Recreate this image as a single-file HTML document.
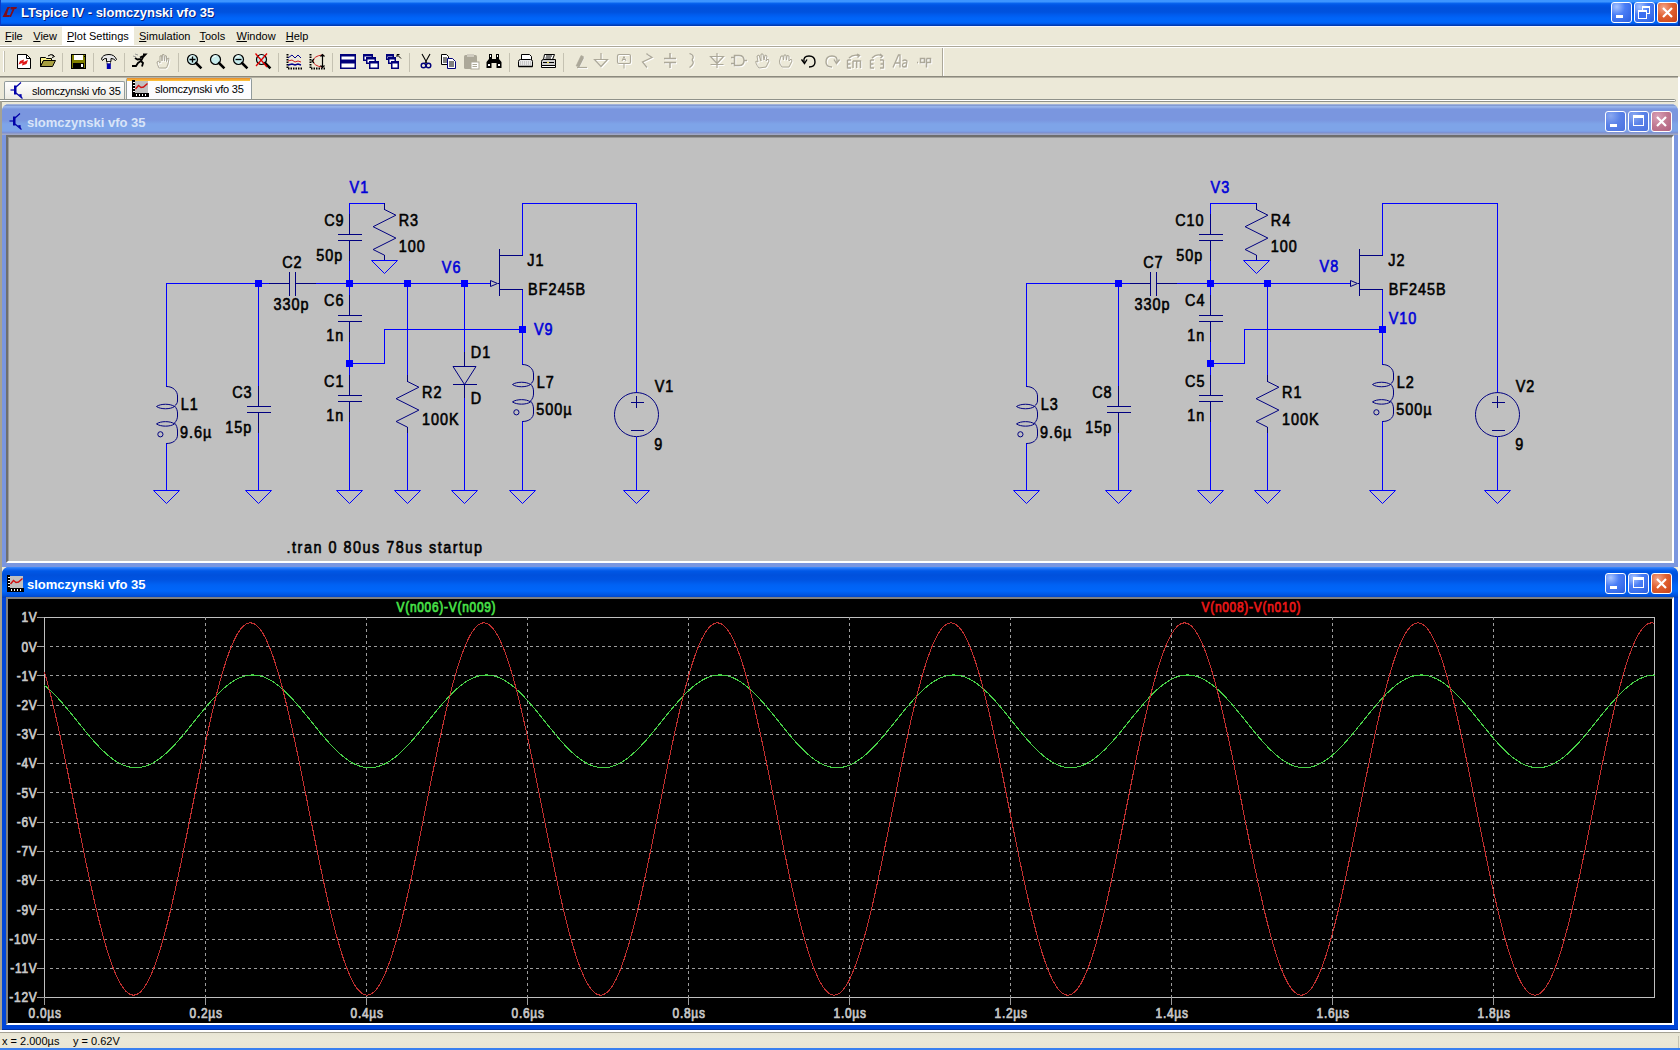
<!DOCTYPE html><html><head><meta charset="utf-8"><style>
*{margin:0;padding:0;box-sizing:border-box}
html,body{width:1680px;height:1050px;overflow:hidden;background:#ECE9D8;font-family:"Liberation Sans", sans-serif}
.a{position:absolute}
svg{position:absolute;left:0;top:0}
.t{font-family:"Liberation Sans", sans-serif}
</style></head><body>
<div class="a" style="left:0;top:0;width:1680px;height:26px;background:linear-gradient(to bottom,#3D95FF 0px,#3D95FF 2px,#0A66F0 3px,#0055E5 5px,#0050DC 8px,#0052DE 12px,#005CEE 15px,#0064F8 18px,#0066FA 22px,#0058E8 24px,#003CB4 25px,#003AB0 26px)"></div>
<div class="a" style="left:1678px;top:0;width:2px;height:26px;background:#0030A0"></div>
<div class="a t" style="left:21px;top:5px;font-size:13px;font-weight:bold;color:#fff;line-height:16px;white-space:nowrap;text-shadow:1px 1px 0 #0A1E7A">LTspice IV - slomczynski vfo 35</div>
<svg width="20" height="20" style="left:0;top:0" viewBox="0 0 20 20"><path d="M2.5 17 L7.5 7 L10.5 7 Q8.5 8.5 8 10.5 L6.8 15 L10 15 L9.2 17 Z" fill="#7E0E1C"/><path d="M10.5 7 L17 7 L16.2 9 L14.6 9 L11 17 L9.2 17 L12.6 9.2 Q11.5 9 10.8 9.8 Z" fill="#7E0E1C"/></svg>
<div class="a" style="left:0;top:0;width:1px;height:26px;background:#0A3CC8"></div>
<div class="a" style="left:1611px;top:2px;width:21px;height:21px;border:1px solid #fff;border-radius:3px;background:radial-gradient(circle at 25% 20%,#A8C4FF 0%,#4A7EF6 40%,#2A5EE0 100%)"></div><div class="a" style="left:1616px;top:15px;width:7px;height:3px;background:#fff"></div>
<div class="a" style="left:1634px;top:2px;width:21px;height:21px;border:1px solid #fff;border-radius:3px;background:radial-gradient(circle at 25% 20%,#A8C4FF 0%,#4A7EF6 40%,#2A5EE0 100%)"></div><div class="a" style="left:1642px;top:6px;width:8px;height:8px;border:1px solid #fff;border-top-width:2px"></div><div class="a" style="left:1638px;top:10px;width:9px;height:9px;border:1px solid #fff;border-top-width:2px;background:#3A6EF0"></div>
<div class="a" style="left:1657px;top:2px;width:21px;height:21px;border:1px solid #fff;border-radius:3px;background:radial-gradient(circle at 30% 25%,#F4A58A 0%,#E0602F 45%,#C8421A 100%)"></div><svg width="21" height="21" style="left:1657px;top:2px"><path d="M6 6 L15 15 M15 6 L6 15" stroke="#fff" stroke-width="2.2"/></svg>
<div class="a" style="left:0;top:26px;width:1680px;height:1px;background:#F4F6FE"></div>
<div class="a" style="left:62px;top:26px;width:72px;height:19px;background:#fff"></div>
<div class="a t" style="left:5.0px;top:29px;font-size:11px;color:#000;line-height:14px;white-space:nowrap"><u style="text-decoration-thickness:1px;text-underline-offset:1px">F</u>ile</div>
<div class="a t" style="left:33.25px;top:29px;font-size:11px;color:#000;line-height:14px;white-space:nowrap"><u style="text-decoration-thickness:1px;text-underline-offset:1px">V</u>iew</div>
<div class="a t" style="left:67.0px;top:29px;font-size:11px;color:#000;line-height:14px;white-space:nowrap"><u style="text-decoration-thickness:1px;text-underline-offset:1px">P</u>lot Settings</div>
<div class="a t" style="left:139.0px;top:29px;font-size:11px;color:#000;line-height:14px;white-space:nowrap"><u style="text-decoration-thickness:1px;text-underline-offset:1px">S</u>imulation</div>
<div class="a t" style="left:199.5px;top:29px;font-size:11px;color:#000;line-height:14px;white-space:nowrap"><u style="text-decoration-thickness:1px;text-underline-offset:1px">T</u>ools</div>
<div class="a t" style="left:236.5px;top:29px;font-size:11px;color:#000;line-height:14px;white-space:nowrap"><u style="text-decoration-thickness:1px;text-underline-offset:1px">W</u>indow</div>
<div class="a t" style="left:285.75px;top:29px;font-size:11px;color:#000;line-height:14px;white-space:nowrap"><u style="text-decoration-thickness:1px;text-underline-offset:1px">H</u>elp</div>
<div class="a" style="left:0;top:45px;width:1680px;height:1px;background:#FFFFFF"></div>
<div class="a" style="left:0;top:46px;width:1680px;height:1px;background:#ACA899"></div>
<div class="a" style="left:0;top:47px;width:1680px;height:1px;background:#FFFFFF"></div>
<div class="a" style="left:0;top:76px;width:1678px;height:1px;background:#8C8A7E"></div><div class="a" style="left:0;top:77px;width:1678px;height:1px;background:#B5B2A4"></div>
<div class="a" style="left:942px;top:48px;width:1px;height:28px;background:#ACA899"></div>
<div class="a" style="left:943px;top:48px;width:1px;height:28px;background:#fff"></div>
<div class="a" style="left:3px;top:51px;width:2px;height:21px;background:#C1BEAE;border-left:1px solid #fff"></div>
<div class="a" style="left:62px;top:53px;width:1px;height:19px;background:#C5C2B2"></div>
<div class="a" style="left:93px;top:53px;width:1px;height:19px;background:#C5C2B2"></div>
<div class="a" style="left:124px;top:53px;width:1px;height:19px;background:#C5C2B2"></div>
<div class="a" style="left:178px;top:53px;width:1px;height:19px;background:#C5C2B2"></div>
<div class="a" style="left:278px;top:53px;width:1px;height:19px;background:#C5C2B2"></div>
<div class="a" style="left:332px;top:53px;width:1px;height:19px;background:#C5C2B2"></div>
<div class="a" style="left:409px;top:53px;width:1px;height:19px;background:#C5C2B2"></div>
<div class="a" style="left:509px;top:53px;width:1px;height:19px;background:#C5C2B2"></div>
<div class="a" style="left:563px;top:53px;width:1px;height:19px;background:#C5C2B2"></div>
<svg width="18" height="18" viewBox="0 0 18 18" style="left:16px;top:53px"><path d="M1.5 1.5H10.5L14.5 5.5V15.5H1.5Z" fill="#fff" stroke="#000"/><path d="M10.5 1.5V5.5H14.5" fill="none" stroke="#000"/><path d="M4 8 L8 6.5 L7.5 9 L12 7 L10.5 11 L6 12.5 L6.5 10 L2.5 11.5Z" fill="#E01818"/></svg><svg width="18" height="18" viewBox="0 0 18 18" style="left:39px;top:53px"><path d="M1.5 4.5H6.5L7.5 5.5H12.5V7.5H4.5L1.5 13.5Z" fill="#F8F088" stroke="#000"/><path d="M1.5 13.5L4.5 7.5H16.5L13.5 13.5Z" fill="#A8A040" stroke="#000"/><path d="M9 3 Q12 0 15 3" fill="none" stroke="#000"/><path d="M13.5 1.5L15.5 3.5L13 4.5" fill="none" stroke="#000"/></svg><svg width="18" height="18" viewBox="0 0 18 18" style="left:70px;top:53px"><rect x="1.5" y="1.5" width="14" height="14" fill="#808000" stroke="#000"/><rect x="4" y="2" width="9" height="5" fill="#fff"/><rect x="3" y="10" width="11" height="5" fill="#000"/><rect x="11" y="11" width="2" height="3" fill="#fff"/><rect x="14" y="3" width="1" height="1" fill="#000"/></svg><svg width="18" height="18" viewBox="0 0 18 18" style="left:100px;top:53px"><path d="M1.5 6 Q2.5 1.5 9 1.5 Q14.5 1.5 16.5 6.5 L15.5 7.5 Q13.5 5.5 11 5.5 V8.5 H6.5 V5.5 Q4 5 2.5 7.5 Z" fill="#E8E8E8" stroke="#000"/><rect x="7" y="8.5" width="3.5" height="2.5" fill="#fff" stroke="#000" stroke-width="0.6"/><rect x="6.8" y="10.5" width="4" height="5.5" fill="#0000B0"/></svg><svg width="18" height="18" viewBox="0 0 18 18" style="left:130px;top:53px"><path d="M13 1.5 L15.5 1.5 L13 4 L11 8 L13 10 L12 13.5 M11 8 L8 10 L6 13 L2 13 M10 4.5 L13 3 M11 6 L7.5 6.5 L5 5" fill="none" stroke="#000" stroke-width="1.8"/><path d="M5 1 L8 2 M3 3 L6 4" stroke="#888" stroke-width="0.8"/></svg><svg width="18" height="18" viewBox="0 0 18 18" style="left:155px;top:53px"><g fill="none"><g transform="translate(1,1)" stroke="#fff" fill="#fff" style="color:#fff"><path d="M4 15 Q2 11 2 9 L3.5 8 L5 10 L5 3 L6.5 2.5 L7 8 L7.5 1.5 L9 1.5 L9.5 8 L10 2.5 L11.5 3 L11.5 8.5 L12.5 5 L14 5.5 L13 11 Q12 14 11 15 Z" fill="none" stroke-width="1"/></g><g stroke="#ACA899" fill="#ACA899" style="color:#ACA899"><path d="M4 15 Q2 11 2 9 L3.5 8 L5 10 L5 3 L6.5 2.5 L7 8 L7.5 1.5 L9 1.5 L9.5 8 L10 2.5 L11.5 3 L11.5 8.5 L12.5 5 L14 5.5 L13 11 Q12 14 11 15 Z" fill="none" stroke-width="1"/></g></g></svg><svg width="18" height="18" viewBox="0 0 18 18" style="left:186px;top:53px"><circle cx="6.5" cy="6.5" r="5" fill="#C8ECEC" stroke="#000" stroke-width="1.2"/><path d="M3.5 5 Q4.5 3 7 3" stroke="#fff" fill="none"/><path d="M10.2 10.2 L14.5 14.5" stroke="#000" stroke-width="2.6" stroke-linecap="square"/><path d="M3.5 6.5H9.5M6.5 3.5V9.5" stroke="#000" stroke-width="1.3"/></svg><svg width="18" height="18" viewBox="0 0 18 18" style="left:209px;top:53px"><circle cx="6.5" cy="6.5" r="5" fill="#C8ECEC" stroke="#000" stroke-width="1.2"/><path d="M3.5 5 Q4.5 3 7 3" stroke="#fff" fill="none"/><path d="M10.2 10.2 L14.5 14.5" stroke="#000" stroke-width="2.6" stroke-linecap="square"/></svg><svg width="18" height="18" viewBox="0 0 18 18" style="left:232px;top:53px"><circle cx="6.5" cy="6.5" r="5" fill="#C8ECEC" stroke="#000" stroke-width="1.2"/><path d="M3.5 5 Q4.5 3 7 3" stroke="#fff" fill="none"/><path d="M10.2 10.2 L14.5 14.5" stroke="#000" stroke-width="2.6" stroke-linecap="square"/><path d="M3.5 6.5H9.5" stroke="#000" stroke-width="1.3"/></svg><svg width="18" height="18" viewBox="0 0 18 18" style="left:255px;top:53px"><circle cx="6.5" cy="6.5" r="5" fill="#C8ECEC" stroke="#000" stroke-width="1.2"/><path d="M3.5 5 Q4.5 3 7 3" stroke="#fff" fill="none"/><path d="M10.2 10.2 L14.5 14.5" stroke="#000" stroke-width="2.6" stroke-linecap="square"/><path d="M0.5 0.5 L12 14 M12 0.5 L1 13" stroke="#E00000" stroke-width="1.3"/></svg><svg width="18" height="18" viewBox="0 0 18 18" style="left:286px;top:53px"><path d="M1.5 1 V15.5 H16" fill="none" stroke="#000" stroke-width="2" stroke-dasharray="1.5 1"/><path d="M2 5 L6 2 L9 5 L12 2 L15 5" fill="none" stroke="#00008B"/><path d="M2 8 L6 7 L9 9 L12 8 L15 9" fill="none" stroke="#D02020"/><path d="M2 12 L6 11 L9 12 L12 11 L15 12" fill="none" stroke="#00008B" stroke-width="1.4"/></svg><svg width="18" height="18" viewBox="0 0 18 18" style="left:309px;top:53px"><path d="M1.5 1 V15.5 H16" fill="none" stroke="#000" stroke-width="2" stroke-dasharray="1.5 1"/><path d="M13 2 Q5 3 4 8 Q5 13 13 14" fill="none" stroke="#D02020"/><path d="M13.5 1.5 V14.5 M11.5 3.5 L13.5 1.5 L15.5 3.5 M11.5 12.5 L13.5 14.5 L15.5 12.5 M5 6 L3 8 L5 10" fill="none" stroke="#000" stroke-width="1.2"/></svg><svg width="18" height="18" viewBox="0 0 18 18" style="left:339px;top:53px"><rect x="1" y="1" width="16" height="7" fill="#00007A"/><rect x="2.5" y="3.5" width="13" height="3" fill="#fff"/><rect x="1" y="8" width="16" height="8" fill="#00007A"/><rect x="2.5" y="10.5" width="13" height="4" fill="#fff"/></svg><svg width="18" height="18" viewBox="0 0 18 18" style="left:362px;top:53px"><rect x="1" y="1" width="10" height="7" fill="#00007A"/><rect x="2.5" y="3.5" width="7" height="3" fill="#fff"/><rect x="4" y="4" width="10" height="7" fill="#00007A"/><rect x="5.5" y="6.5" width="7" height="3" fill="#fff"/><rect x="7" y="8" width="10" height="8" fill="#00007A"/><rect x="8.5" y="10.5" width="7" height="4" fill="#fff"/></svg><svg width="18" height="18" viewBox="0 0 18 18" style="left:385px;top:53px"><rect x="1" y="1" width="8" height="6" fill="#00007A"/><rect x="2.5" y="3.5" width="5" height="2" fill="#fff"/><rect x="3" y="4" width="8" height="7" fill="#00007A"/><rect x="4.5" y="6.5" width="5" height="3" fill="#fff"/><rect x="6" y="8" width="8" height="8" fill="#00007A"/><rect x="7.5" y="10.5" width="5" height="4" fill="#fff"/><path d="M12 1.5 H14.5 M12 1.5 V4 M12.5 2 L16 5.5" stroke="#000" fill="none"/></svg><svg width="18" height="18" viewBox="0 0 18 18" style="left:419px;top:53px"><path d="M3 1 L8 10 M11 1 L6 10" stroke="#000" stroke-width="1.1" fill="none"/><circle cx="4.5" cy="12.5" r="2.3" fill="none" stroke="#00007A" stroke-width="1.4"/><circle cx="9.5" cy="12.5" r="2.3" fill="none" stroke="#00007A" stroke-width="1.4"/></svg><svg width="18" height="18" viewBox="0 0 18 18" style="left:440px;top:53px"><path d="M1.5 1.5H6.5L8.5 3.5V11.5H1.5Z" fill="#fff" stroke="#000"/><path d="M3 5H7M3 7H7M3 9H7" stroke="#000"/><path d="M7.5 5.5H12.5L15.5 8.5V15.5H7.5Z" fill="#fff" stroke="#00007A"/><path d="M9 9H14M9 11H14M9 13H14" stroke="#000"/></svg><svg width="18" height="18" viewBox="0 0 18 18" style="left:463px;top:53px"><rect x="1" y="2" width="13" height="14" rx="1.5" fill="#ACA899"/><rect x="4" y="1" width="7" height="3" fill="#D0CCC0"/><rect x="8" y="9" width="8" height="7" fill="#fff" stroke="#ACA899"/><path d="M9.5 11.5H14M9.5 13.5H14" stroke="#ACA899"/></svg><svg width="18" height="18" viewBox="0 0 18 18" style="left:486px;top:53px"><path d="M3 1H6V6H10V1H13V6L15.5 9V15H10.5V10H5.5V15H0.5V9L3 6Z" fill="#000"/><rect x="2" y="11" width="2" height="2" fill="#fff"/><rect x="12" y="11" width="2" height="2" fill="#fff"/><rect x="4" y="2" width="1" height="2" fill="#fff"/><rect x="11" y="2" width="1" height="2" fill="#fff"/></svg><svg width="18" height="18" viewBox="0 0 18 18" style="left:517px;top:53px"><path d="M4.5 1.5H12.5L14.5 3.5V7.5H4.5Z" fill="#fff" stroke="#000"/><path d="M1.5 8.5Q1.5 6.5 3.5 6.5H13.5Q15.5 6.5 15.5 8.5V13.5H1.5Z" fill="#E8E8E8" stroke="#000"/><path d="M3 9H14M3 11H14" stroke="#AAA" stroke-dasharray="1 1"/><path d="M1.5 13.5H15.5" stroke="#000" stroke-width="1.5"/></svg><svg width="18" height="18" viewBox="0 0 18 18" style="left:540px;top:53px"><path d="M4.5 1.5H14.5L12.5 6.5H3.5Z" fill="#fff" stroke="#000"/><path d="M6 3H12M5.5 5H11" stroke="#000"/><path d="M1.5 8.5Q1.5 6.5 3.5 6.5H15.5V12.5H1.5Z" fill="#D0D0D0" stroke="#000"/><path d="M3 9.5H14" stroke="#000"/><path d="M7 9.5H9" stroke="#E8D840"/><path d="M1.5 12.5H15.5V14.5H1.5Z" fill="#fff" stroke="#000"/></svg><svg width="18" height="18" viewBox="0 0 18 18" style="left:572px;top:53px"><g transform="translate(1,1)" stroke="#fff" fill="none"><path d="M4 13 L9 2.5 L11.5 3.5 L6.5 13.5Z" fill="#ACA899" stroke-width="0.5"/><path d="M5 14.5H15" stroke-width="1.2"/></g><g stroke="#ACA899" fill="none"><path d="M4 13 L9 2.5 L11.5 3.5 L6.5 13.5Z" fill="#ACA899" stroke-width="0.5"/><path d="M5 14.5H15" stroke-width="1.2"/></g></svg><svg width="18" height="18" viewBox="0 0 18 18" style="left:593px;top:53px"><g transform="translate(1,1)" stroke="#fff" fill="none"><path d="M8 0 V6.5 M1.5 6.5H14.5L8 13.5Z" stroke-width="1.2"/></g><g stroke="#ACA899" fill="none"><path d="M8 0 V6.5 M1.5 6.5H14.5L8 13.5Z" stroke-width="1.2"/></g></svg><svg width="18" height="18" viewBox="0 0 18 18" style="left:616px;top:53px"><g transform="translate(1,1)" stroke="#fff" fill="none"><rect x="1.5" y="1.5" width="13" height="9" rx="1.5" stroke-width="1.2"/><path d="M8 10.5 V15.5 M6 8 L8 3.5 L10 8 M6.7 6.5H9.3" stroke-width="1"/></g><g stroke="#ACA899" fill="none"><rect x="1.5" y="1.5" width="13" height="9" rx="1.5" stroke-width="1.2"/><path d="M8 10.5 V15.5 M6 8 L8 3.5 L10 8 M6.7 6.5H9.3" stroke-width="1"/></g></svg><svg width="18" height="18" viewBox="0 0 18 18" style="left:641px;top:53px"><g transform="translate(1,1)" stroke="#fff" fill="none"><path d="M5.5 0.5 L6.5 1.5 L11 4.5 L1.5 9 L6 14.5" stroke-width="1.3"/></g><g stroke="#ACA899" fill="none"><path d="M5.5 0.5 L6.5 1.5 L11 4.5 L1.5 9 L6 14.5" stroke-width="1.3"/></g></svg><svg width="18" height="18" viewBox="0 0 18 18" style="left:662px;top:53px"><g transform="translate(1,1)" stroke="#fff" fill="none"><path d="M8 0 V5 M2 5.5H14 M2 9.5H14 M8 10 V15" stroke-width="1.5"/></g><g stroke="#ACA899" fill="none"><path d="M8 0 V5 M2 5.5H14 M2 9.5H14 M8 10 V15" stroke-width="1.5"/></g></svg><svg width="18" height="18" viewBox="0 0 18 18" style="left:686px;top:53px"><g transform="translate(1,1)" stroke="#fff" fill="none"><path d="M3.5 0.5 Q8 2 7 5 Q5.5 7 7 8.5 Q8 11 3.5 14.5" stroke-width="1.3"/></g><g stroke="#ACA899" fill="none"><path d="M3.5 0.5 Q8 2 7 5 Q5.5 7 7 8.5 Q8 11 3.5 14.5" stroke-width="1.3"/></g></svg><svg width="18" height="18" viewBox="0 0 18 18" style="left:709px;top:53px"><g transform="translate(1,1)" stroke="#fff" fill="none"><path d="M8 0V15 M1.5 3.5H14.5L8 10.5Z M1.5 11.5H14.5" stroke-width="1.2"/></g><g stroke="#ACA899" fill="none"><path d="M8 0V15 M1.5 3.5H14.5L8 10.5Z M1.5 11.5H14.5" stroke-width="1.2"/></g></svg><svg width="18" height="18" viewBox="0 0 18 18" style="left:731px;top:53px"><g transform="translate(1,1)" stroke="#fff" fill="none"><path d="M0 4.5H3.5 M0 10.5H3.5 M3.5 2.5H8 Q13 2.5 13 7.5 Q13 12.5 8 12.5H3.5Z M13 7.5H16" stroke-width="1.5"/></g><g stroke="#ACA899" fill="none"><path d="M0 4.5H3.5 M0 10.5H3.5 M3.5 2.5H8 Q13 2.5 13 7.5 Q13 12.5 8 12.5H3.5Z M13 7.5H16" stroke-width="1.5"/></g></svg><svg width="18" height="18" viewBox="0 0 18 18" style="left:754px;top:53px"><g transform="translate(1,1)" stroke="#fff" fill="none"><path d="M5 15 Q1 10 2 8 L4 9 L3 3 L5 2 L7 8 L7 1 L9 1 L10 7 L11 2 L13 3 L12 8 L14 6 L15 8 L12 14 Z" stroke-width="1"/></g><g stroke="#ACA899" fill="none"><path d="M5 15 Q1 10 2 8 L4 9 L3 3 L5 2 L7 8 L7 1 L9 1 L10 7 L11 2 L13 3 L12 8 L14 6 L15 8 L12 14 Z" stroke-width="1"/></g></svg><svg width="18" height="18" viewBox="0 0 18 18" style="left:778px;top:53px"><g transform="translate(1,1)" stroke="#fff" fill="none"><path d="M4 14 Q1 11 1.5 8 L3 3 L5 3 L5.5 7 L6 2 L8 2 L8.5 7 L9 2.5 L11 3 L11 8 L13 6 L14 8 L11 14 Z" stroke-width="1"/></g><g stroke="#ACA899" fill="none"><path d="M4 14 Q1 11 1.5 8 L3 3 L5 3 L5.5 7 L6 2 L8 2 L8.5 7 L9 2.5 L11 3 L11 8 L13 6 L14 8 L11 14 Z" stroke-width="1"/></g></svg><svg width="18" height="18" viewBox="0 0 18 18" style="left:801px;top:53px"><path d="M3 9 Q2 3 8 3 Q14 3 14 9 Q14 14 8 14" fill="none" stroke="#000" stroke-width="1.4"/><path d="M0.5 6.5 L3.5 10.5 L6 6.5" fill="none" stroke="#000" stroke-width="1.4"/></svg><svg width="18" height="18" viewBox="0 0 18 18" style="left:824px;top:53px"><g transform="translate(1,1)" stroke="#fff" fill="none"><path d="M13 9 Q14 3 8 3 Q2 3 2 9 Q2 14 8 14" stroke-width="1.4"/><path d="M15.5 6.5 L12.5 10.5 L10 6.5" stroke-width="1.4"/></g><g stroke="#ACA899" fill="none"><path d="M13 9 Q14 3 8 3 Q2 3 2 9 Q2 14 8 14" stroke-width="1.4"/><path d="M15.5 6.5 L12.5 10.5 L10 6.5" stroke-width="1.4"/></g></svg><svg width="18" height="18" viewBox="0 0 18 18" style="left:846px;top:53px"><g transform="translate(1,1)" stroke="#fff" fill="none"><path d="M1.5 7V15.5 M1.5 7H5 M1.5 11H4.5 M1.5 15H5 M7 8V15 M7 8H14.5V15 M10.7 8V15 M3 5 Q7 1 13 2.5 M11 1 L13.5 2.5 L11.5 4.5" stroke-width="1.4"/></g><g stroke="#ACA899" fill="none"><path d="M1.5 7V15.5 M1.5 7H5 M1.5 11H4.5 M1.5 15H5 M7 8V15 M7 8H14.5V15 M10.7 8V15 M3 5 Q7 1 13 2.5 M11 1 L13.5 2.5 L11.5 4.5" stroke-width="1.4"/></g></svg><svg width="18" height="18" viewBox="0 0 18 18" style="left:869px;top:53px"><g transform="translate(1,1)" stroke="#fff" fill="none"><path d="M1.5 7V15.5 M1.5 7H5 M1.5 11H4.5 M1.5 15H5 M14.5 7V15.5 M14.5 7H11 M14.5 11H11.5 M14.5 15H11 M3 5 Q8 0 13 3 M11 1 L13.5 3 L11.5 5" stroke-width="1.4"/></g><g stroke="#ACA899" fill="none"><path d="M1.5 7V15.5 M1.5 7H5 M1.5 11H4.5 M1.5 15H5 M14.5 7V15.5 M14.5 7H11 M14.5 11H11.5 M14.5 15H11 M3 5 Q8 0 13 3 M11 1 L13.5 3 L11.5 5" stroke-width="1.4"/></g></svg><svg width="18" height="18" viewBox="0 0 18 18" style="left:892px;top:53px"><g transform="translate(1,1)" stroke="#fff" fill="none"><path d="M1 14.5 L6.5 2 L8 2 L8 14.5 M3.5 10H8 M10.5 8 Q13 6 15 8 L14 14.5 M14.5 10 Q10 9.5 10.5 13 Q12 15 14 13" stroke-width="1.3"/></g><g stroke="#ACA899" fill="none"><path d="M1 14.5 L6.5 2 L8 2 L8 14.5 M3.5 10H8 M10.5 8 Q13 6 15 8 L14 14.5 M14.5 10 Q10 9.5 10.5 13 Q12 15 14 13" stroke-width="1.3"/></g></svg><svg width="18" height="18" viewBox="0 0 18 18" style="left:916px;top:53px"><g transform="translate(1,1)" stroke="#fff" fill="none"><path d="M1 9.5 H2 M4.5 5.5 H8.5 V9.5 H4.5 Z M10.5 5.5 V14.5 M10.5 5.5 H14.5 V9.5 H10.5" stroke-width="1.5"/></g><g stroke="#ACA899" fill="none"><path d="M1 9.5 H2 M4.5 5.5 H8.5 V9.5 H4.5 Z M10.5 5.5 V14.5 M10.5 5.5 H14.5 V9.5 H10.5" stroke-width="1.5"/></g></svg>
<div class="a" style="left:4px;top:81px;width:121px;height:19px;background:linear-gradient(#FEFEFE,#F4F3EE 60%,#ECEADF);border:1px solid #919B9C;border-bottom:none;border-radius:2px 2px 0 0"></div>
<div class="a" style="left:126px;top:78px;width:126px;height:23px;background:#FCFCFE;border:1px solid #919B9C;border-bottom:none;border-radius:2px 2px 0 0"></div>
<div class="a" style="left:127px;top:78px;width:123px;height:3px;background:linear-gradient(#E68B2C,#FFC73C)"></div>
<div class="a t" style="left:32px;top:84px;font-size:11px;line-height:14px;color:#000;white-space:nowrap;letter-spacing:-0.2px">slomczynski vfo 35</div>
<div class="a t" style="left:155px;top:82px;font-size:11px;line-height:14px;color:#000;white-space:nowrap;letter-spacing:-0.2px">slomczynski vfo 35</div>
<div class="a" style="left:-4px;top:99px;width:1680px;height:3px;background:#FFFFFF;border:1px solid #8F9189;border-radius:2px"></div>
<div class="a" style="left:1678px;top:77px;width:2px;height:955px;background:#FFFFFF"></div>
<div class="a" style="left:0;top:101px;width:2px;height:930px;background:#A5A294"></div>
<div class="a" style="left:2px;top:104px;width:1676px;height:463px;background:#7A96DF;border-radius:7px 7px 0 0;overflow:hidden"><div class="a" style="left:0;top:0;width:1676px;height:31px;background:linear-gradient(to bottom,#D8E2FA 0px,#6A80B8 1px,#98B4EC 2px,#98B4EC 3px,#7A96DF 5px,#7A96DF 16px,#7EA4E8 20px,#7EA4E8 27px,#7A96E0 28px,#8090C8 29px,#A0A8C8 30px,#A0A8C8 31px)"></div></div><div class="a t" style="left:27px;top:115px;font-size:13px;font-weight:bold;color:#D8E4F8;line-height:16px;white-space:nowrap">slomczynski vfo 35</div>
<div class="a" style="left:1605px;top:111px;width:21px;height:21px;border:1px solid #fff;border-radius:3px;background:radial-gradient(circle at 25% 20%,#8AA8F0 0%,#5A82E8 45%,#4A72E0 100%)"></div><div class="a" style="left:1610px;top:124px;width:7px;height:3px;background:#fff"></div>
<div class="a" style="left:1628px;top:111px;width:21px;height:21px;border:1px solid #fff;border-radius:3px;background:radial-gradient(circle at 25% 20%,#8AA8F0 0%,#5A82E8 45%,#4A72E0 100%)"></div><div class="a" style="left:1633px;top:115px;width:11px;height:11px;border:1px solid #fff;border-top-width:3px"></div>
<div class="a" style="left:1651px;top:111px;width:21px;height:21px;border:1px solid #fff;border-radius:3px;background:radial-gradient(circle at 30% 25%,#D8A0B8 0%,#C07890 50%,#B06080 100%)"></div><svg width="21" height="21" style="left:1651px;top:111px"><path d="M6 6 L15 15 M15 6 L6 15" stroke="#fff" stroke-width="2.2"/></svg>
<div class="a" style="left:6px;top:135px;width:1668px;height:428px;border-top:2px solid #6E6E6E;border-left:2px solid #6E6E6E;border-right:2px solid #fff;border-bottom:2px solid #fff;background:#C0C0C0;box-shadow:inset 1px 1px 0 #9A9A9A"></div>
<div class="a" style="left:2px;top:567px;width:1676px;height:463px;background:#0046D8;border-radius:7px 7px 0 0;overflow:hidden"><div class="a" style="left:0;top:0;width:1676px;height:31px;background:linear-gradient(to bottom,#3D8CFF 0px,#1A6CF4 2px,#0058E6 4px,#0050DC 8px,#0054E2 13px,#0062F4 18px,#0066FA 24px,#0054E0 28px,#0040C0 31px)"></div></div><div class="a t" style="left:27px;top:577px;font-size:13px;font-weight:bold;color:#FFFFFF;line-height:16px;white-space:nowrap">slomczynski vfo 35</div>
<div class="a" style="left:1605px;top:573px;width:21px;height:21px;border:1px solid #fff;border-radius:3px;background:radial-gradient(circle at 25% 20%,#A8C4FF 0%,#4A7EF6 40%,#2A5EE0 100%)"></div><div class="a" style="left:1610px;top:586px;width:7px;height:3px;background:#fff"></div>
<div class="a" style="left:1628px;top:573px;width:21px;height:21px;border:1px solid #fff;border-radius:3px;background:radial-gradient(circle at 25% 20%,#A8C4FF 0%,#4A7EF6 40%,#2A5EE0 100%)"></div><div class="a" style="left:1633px;top:577px;width:11px;height:11px;border:1px solid #fff;border-top-width:3px"></div>
<div class="a" style="left:1651px;top:573px;width:21px;height:21px;border:1px solid #fff;border-radius:3px;background:radial-gradient(circle at 30% 25%,#F4A58A 0%,#E0602F 45%,#C8421A 100%)"></div><svg width="21" height="21" style="left:1651px;top:573px"><path d="M6 6 L15 15 M15 6 L6 15" stroke="#fff" stroke-width="2.2"/></svg>
<div class="a" style="left:6px;top:597px;width:1668px;height:428px;border-top:2px solid #808080;border-left:2px solid #808080;border-right:2px solid #fff;border-bottom:2px solid #fff;background:#000"></div>
<div class="a" style="left:2px;top:1029px;width:1676px;height:1px;background:#0030A0"></div>
<div class="a" style="left:0;top:1030px;width:1680px;height:2px;background:#FFFFFF"></div><div class="a" style="left:0;top:1032px;width:1680px;height:1px;background:#A5A294"></div><div class="a" style="left:0;top:1033px;width:1680px;height:15px;background:linear-gradient(#E8E5D4,#ECE9D8 40%,#EAE6D4)"></div><div class="a" style="left:1678px;top:1036px;width:1px;height:12px;background:#C5C2B2"></div>
<div class="a t" style="left:2px;top:1034px;font-size:11px;line-height:14px;color:#000;white-space:nowrap">x = 2.000µs</div>
<div class="a t" style="left:73px;top:1034px;font-size:11px;line-height:14px;color:#000;white-space:nowrap">y = 0.62V</div>
<div class="a" style="left:0;top:1048px;width:1680px;height:2px;background:#3A80F0"></div>
<svg width="1680" height="1050" style="left:0;top:0"><path d="M166 283h1v104h-1zM166 283h104v1h-104zM315 283h176v1h-176zM166 443h1v48h-1zM258 283h1v104h-1zM258 432h1v59h-1zM349 203h1v12h-1zM349 260h1v36h-1zM349 341h1v35h-1zM349 421h1v70h-1zM349 203h36v1h-36zM407 283h1v93h-1zM407 432h1v59h-1zM464 283h1v70h-1zM464 397h1v94h-1zM349 363h36v1h-36zM384 329h1v35h-1zM384 329h139v1h-139zM522 203h1v53h-1zM522 203h115v1h-115zM636 203h1v190h-1zM522 289h1v76h-1zM522 421h1v70h-1zM636 437h1v54h-1zM255 280h7v7h-7zM346 280h7v7h-7zM404 280h7v7h-7zM461 280h7v7h-7zM519 326h7v7h-7zM346 360h7v7h-7zM1026 283h1v104h-1zM1026 283h104v1h-104zM1175 283h176v1h-176zM1026 443h1v48h-1zM1118 283h1v104h-1zM1118 432h1v59h-1zM1210 203h1v12h-1zM1210 260h1v36h-1zM1210 341h1v35h-1zM1210 421h1v70h-1zM1210 203h47v1h-47zM1267 283h1v93h-1zM1267 432h1v59h-1zM1210 363h35v1h-35zM1244 329h1v35h-1zM1244 329h139v1h-139zM1382 203h1v53h-1zM1382 203h116v1h-116zM1497 203h1v190h-1zM1382 289h1v76h-1zM1382 421h1v70h-1zM1497 437h1v54h-1zM1115 280h7v7h-7zM1207 280h7v7h-7zM1264 280h7v7h-7zM1379 326h7v7h-7zM1207 360h7v7h-7z" fill="#0000FF" shape-rendering="crispEdges"/><path d="M289 272h1v24h-1zM295 272h1v24h-1zM269 283h21v1h-21zM295 283h21v1h-21zM338 234h24v1h-24zM338 240h24v1h-24zM349 214h1v21h-1zM349 240h1v21h-1zM338 315h24v1h-24zM338 321h24v1h-24zM349 295h1v21h-1zM349 321h1v21h-1zM338 395h24v1h-24zM338 401h24v1h-24zM349 375h1v21h-1zM349 401h1v21h-1zM247 406h24v1h-24zM247 412h24v1h-24zM258 386h1v21h-1zM258 412h1v21h-1zM384 203h1v7h-1zM384 255h1v6h-1zM407 375h1v7h-1zM407 427h1v6h-1zM453 384h24v1h-24zM464 352h1v15h-1zM464 384h1v14h-1zM499 249h1v47h-1zM499 255h24v1h-24zM499 289h24v1h-24zM498 283h2v1h-2zM631 401.6h13v1h-13zM636 395.6h1v12.0h-1zM631 429.6h13v1h-13zM1150 272h1v24h-1zM1156 272h1v24h-1zM1130 283h21v1h-21zM1156 283h21v1h-21zM1199 234h24v1h-24zM1199 240h24v1h-24zM1210 214h1v21h-1zM1210 240h1v21h-1zM1199 315h24v1h-24zM1199 321h24v1h-24zM1210 295h1v21h-1zM1210 321h1v21h-1zM1199 395h24v1h-24zM1199 401h24v1h-24zM1210 375h1v21h-1zM1210 401h1v21h-1zM1107 406h24v1h-24zM1107 412h24v1h-24zM1118 386h1v21h-1zM1118 412h1v21h-1zM1256 203h1v7h-1zM1256 255h1v6h-1zM1267 375h1v7h-1zM1267 427h1v6h-1zM1359 249h1v47h-1zM1359 255h24v1h-24zM1359 289h24v1h-24zM1358 283h2v1h-2zM1492 401.6h13v1h-13zM1497 395.6h1v12.0h-1zM1492 429.6h13v1h-13z" fill="#000080" shape-rendering="crispEdges"/><path d="M153.5 490.5H179.5L166.5 503.5Z" fill="none" stroke="#0000FF" stroke-width="1" /><path d="M245.5 490.5H271.5L258.5 503.5Z" fill="none" stroke="#0000FF" stroke-width="1" /><path d="M336.5 490.5H362.5L349.5 503.5Z" fill="none" stroke="#0000FF" stroke-width="1" /><path d="M394.5 490.5H420.5L407.5 503.5Z" fill="none" stroke="#0000FF" stroke-width="1" /><path d="M451.5 490.5H477.5L464.5 503.5Z" fill="none" stroke="#0000FF" stroke-width="1" /><path d="M509.5 490.5H535.5L522.5 503.5Z" fill="none" stroke="#0000FF" stroke-width="1" /><path d="M623.5 490.5H649.5L636.5 503.5Z" fill="none" stroke="#0000FF" stroke-width="1" /><path d="M371.5 260.5H397.5L384.5 273.5Z" fill="none" stroke="#0000FF" stroke-width="1" /><path d="M384.5 209.5 L395.9 215.2 L373.1 226.7 L395.9 238.1 L373.1 249.5 L384.5 255.2" fill="none" stroke="#000080" stroke-width="1" /><path d="M407.5 381.5 L418.9 387.2 L396.1 398.7 L418.9 410.1 L396.1 421.5 L407.5 427.2" fill="none" stroke="#000080" stroke-width="1" /><path d="M453.0 366.5H476.0L464.5 384.5Z" fill="none" stroke="#000080" stroke-width="1" /><path d="M490.5 280.5L497.5 283.5L490.5 286.5Z" fill="none" stroke="#000080" stroke-width="1" /><path d="M166.5 386.5 C173.0 386.5 177.5 391.0 177.5 396.0 L177.5 401.0 C177.5 403.0 176.0 405.0 174.5 406.0 C176.5 408.0 177.5 410.5 177.5 413.0 L177.5 416.0 C177.5 418.5 176.5 421.0 174.5 423.0 C176.5 425.0 177.5 428.0 177.5 431.0 L177.5 435.0 C177.5 440.0 173.0 443.5 166.5 443.5" fill="none" stroke="#000080" stroke-width="1" /><path d="M174.5 406.5 C170.5 403.5 160.5 403.5 156.5 406.5 C160.5 409.5 170.5 409.5 174.5 406.5" fill="none" stroke="#000080" stroke-width="1" /><path d="M174.5 423.9 C170.5 420.9 160.5 420.9 156.5 423.9 C160.5 426.9 170.5 426.9 174.5 423.9" fill="none" stroke="#000080" stroke-width="1" /><circle cx="160.4" cy="434.3" r="2.6" fill="none" stroke="#000080" stroke-width="1"/><path d="M522.5 364.5 C529.0 364.5 533.5 369.0 533.5 374.0 L533.5 379.0 C533.5 381.0 532.0 383.0 530.5 384.0 C532.5 386.0 533.5 388.5 533.5 391.0 L533.5 394.0 C533.5 396.5 532.5 399.0 530.5 401.0 C532.5 403.0 533.5 406.0 533.5 409.0 L533.5 413.0 C533.5 418.0 529.0 421.5 522.5 421.5" fill="none" stroke="#000080" stroke-width="1" /><path d="M530.5 384.5 C526.5 381.5 516.5 381.5 512.5 384.5 C516.5 387.5 526.5 387.5 530.5 384.5" fill="none" stroke="#000080" stroke-width="1" /><path d="M530.5 401.9 C526.5 398.9 516.5 398.9 512.5 401.9 C516.5 404.9 526.5 404.9 530.5 401.9" fill="none" stroke="#000080" stroke-width="1" /><circle cx="516.4" cy="412.3" r="2.6" fill="none" stroke="#000080" stroke-width="1"/><path d="M636.5 392.6A22 22 0 1 1 636.49 392.6Z" fill="none" stroke="#000080" stroke-width="1" /><path d="M1013.5 490.5H1039.5L1026.5 503.5Z" fill="none" stroke="#0000FF" stroke-width="1" /><path d="M1105.5 490.5H1131.5L1118.5 503.5Z" fill="none" stroke="#0000FF" stroke-width="1" /><path d="M1197.5 490.5H1223.5L1210.5 503.5Z" fill="none" stroke="#0000FF" stroke-width="1" /><path d="M1254.5 490.5H1280.5L1267.5 503.5Z" fill="none" stroke="#0000FF" stroke-width="1" /><path d="M1369.5 490.5H1395.5L1382.5 503.5Z" fill="none" stroke="#0000FF" stroke-width="1" /><path d="M1484.5 490.5H1510.5L1497.5 503.5Z" fill="none" stroke="#0000FF" stroke-width="1" /><path d="M1243.5 260.5H1269.5L1256.5 273.5Z" fill="none" stroke="#0000FF" stroke-width="1" /><path d="M1256.5 209.5 L1267.9 215.2 L1245.1 226.7 L1267.9 238.1 L1245.1 249.5 L1256.5 255.2" fill="none" stroke="#000080" stroke-width="1" /><path d="M1267.5 381.5 L1278.9 387.2 L1256.1 398.7 L1278.9 410.1 L1256.1 421.5 L1267.5 427.2" fill="none" stroke="#000080" stroke-width="1" /><path d="M1350.5 280.5L1357.5 283.5L1350.5 286.5Z" fill="none" stroke="#000080" stroke-width="1" /><path d="M1026.5 386.5 C1033.0 386.5 1037.5 391.0 1037.5 396.0 L1037.5 401.0 C1037.5 403.0 1036.0 405.0 1034.5 406.0 C1036.5 408.0 1037.5 410.5 1037.5 413.0 L1037.5 416.0 C1037.5 418.5 1036.5 421.0 1034.5 423.0 C1036.5 425.0 1037.5 428.0 1037.5 431.0 L1037.5 435.0 C1037.5 440.0 1033.0 443.5 1026.5 443.5" fill="none" stroke="#000080" stroke-width="1" /><path d="M1034.5 406.5 C1030.5 403.5 1020.5 403.5 1016.5 406.5 C1020.5 409.5 1030.5 409.5 1034.5 406.5" fill="none" stroke="#000080" stroke-width="1" /><path d="M1034.5 423.9 C1030.5 420.9 1020.5 420.9 1016.5 423.9 C1020.5 426.9 1030.5 426.9 1034.5 423.9" fill="none" stroke="#000080" stroke-width="1" /><circle cx="1020.4" cy="434.3" r="2.6" fill="none" stroke="#000080" stroke-width="1"/><path d="M1382.5 364.5 C1389.0 364.5 1393.5 369.0 1393.5 374.0 L1393.5 379.0 C1393.5 381.0 1392.0 383.0 1390.5 384.0 C1392.5 386.0 1393.5 388.5 1393.5 391.0 L1393.5 394.0 C1393.5 396.5 1392.5 399.0 1390.5 401.0 C1392.5 403.0 1393.5 406.0 1393.5 409.0 L1393.5 413.0 C1393.5 418.0 1389.0 421.5 1382.5 421.5" fill="none" stroke="#000080" stroke-width="1" /><path d="M1390.5 384.5 C1386.5 381.5 1376.5 381.5 1372.5 384.5 C1376.5 387.5 1386.5 387.5 1390.5 384.5" fill="none" stroke="#000080" stroke-width="1" /><path d="M1390.5 401.9 C1386.5 398.9 1376.5 398.9 1372.5 401.9 C1376.5 404.9 1386.5 404.9 1390.5 401.9" fill="none" stroke="#000080" stroke-width="1" /><circle cx="1376.4" cy="412.3" r="2.6" fill="none" stroke="#000080" stroke-width="1"/><path d="M1497.5 392.6A22 22 0 1 1 1497.49 392.6Z" fill="none" stroke="#000080" stroke-width="1" /><g font-family='"Liberation Sans", sans-serif'><text transform="translate(349.60,192.50) scale(0.9,1)" fill="#0000D8" stroke="#0000D8" stroke-width="0.6" font-size="16" letter-spacing="1.111">V1</text><text transform="translate(441.80,272.50) scale(0.9,1)" fill="#0000D8" stroke="#0000D8" stroke-width="0.6" font-size="16" letter-spacing="1.111">V6</text><text transform="translate(533.95,335.10) scale(0.9,1)" fill="#0000D8" stroke="#0000D8" stroke-width="0.6" font-size="16" letter-spacing="1.111">V9</text><text transform="translate(1210.60,192.50) scale(0.9,1)" fill="#0000D8" stroke="#0000D8" stroke-width="0.6" font-size="16" letter-spacing="1.111">V3</text><text transform="translate(1319.60,272.00) scale(0.9,1)" fill="#0000D8" stroke="#0000D8" stroke-width="0.6" font-size="16" letter-spacing="1.111">V8</text><text transform="translate(1388.70,324.00) scale(0.9,1)" fill="#0000D8" stroke="#0000D8" stroke-width="0.6" font-size="16" letter-spacing="1.111">V10</text><text transform="translate(324.20,226.10) scale(0.9,1)" fill="#000000" stroke="#000000" stroke-width="0.6" font-size="16" letter-spacing="1.111">C9</text><text transform="translate(316.20,260.60) scale(0.9,1)" fill="#000000" stroke="#000000" stroke-width="0.6" font-size="16" letter-spacing="1.111">50p</text><text transform="translate(398.70,226.10) scale(0.9,1)" fill="#000000" stroke="#000000" stroke-width="0.6" font-size="16" letter-spacing="1.111">R3</text><text transform="translate(398.70,252.00) scale(0.9,1)" fill="#000000" stroke="#000000" stroke-width="0.6" font-size="16" letter-spacing="1.111">100</text><text transform="translate(282.20,268.00) scale(0.9,1)" fill="#000000" stroke="#000000" stroke-width="0.6" font-size="16" letter-spacing="1.111">C2</text><text transform="translate(273.50,310.00) scale(0.9,1)" fill="#000000" stroke="#000000" stroke-width="0.6" font-size="16" letter-spacing="1.111">330p</text><text transform="translate(527.20,266.10) scale(0.9,1)" fill="#000000" stroke="#000000" stroke-width="0.6" font-size="16" letter-spacing="1.111">J1</text><text transform="translate(528.10,295.30) scale(0.9,1)" fill="#000000" stroke="#000000" stroke-width="0.6" font-size="16" letter-spacing="1.111">BF245B</text><text transform="translate(324.10,306.10) scale(0.9,1)" fill="#000000" stroke="#000000" stroke-width="0.6" font-size="16" letter-spacing="1.111">C6</text><text transform="translate(326.20,341.10) scale(0.9,1)" fill="#000000" stroke="#000000" stroke-width="0.6" font-size="16" letter-spacing="1.111">1n</text><text transform="translate(324.10,386.75) scale(0.9,1)" fill="#000000" stroke="#000000" stroke-width="0.6" font-size="16" letter-spacing="1.111">C1</text><text transform="translate(326.20,421.10) scale(0.9,1)" fill="#000000" stroke="#000000" stroke-width="0.6" font-size="16" letter-spacing="1.111">1n</text><text transform="translate(422.10,398.40) scale(0.9,1)" fill="#000000" stroke="#000000" stroke-width="0.6" font-size="16" letter-spacing="1.111">R2</text><text transform="translate(422.10,424.50) scale(0.9,1)" fill="#000000" stroke="#000000" stroke-width="0.6" font-size="16" letter-spacing="1.111">100K</text><text transform="translate(536.70,387.50) scale(0.9,1)" fill="#000000" stroke="#000000" stroke-width="0.6" font-size="16" letter-spacing="1.111">L7</text><text transform="translate(536.20,414.90) scale(0.9,1)" fill="#000000" stroke="#000000" stroke-width="0.6" font-size="16" letter-spacing="1.111">500µ</text><text transform="translate(654.70,392.30) scale(0.9,1)" fill="#000000" stroke="#000000" stroke-width="0.6" font-size="16" letter-spacing="1.111">V1</text><text transform="translate(654.20,450.10) scale(0.9,1)" fill="#000000" stroke="#000000" stroke-width="0.6" font-size="16" letter-spacing="1.111">9</text><text transform="translate(180.80,410.25) scale(0.9,1)" fill="#000000" stroke="#000000" stroke-width="0.6" font-size="16" letter-spacing="1.111">L1</text><text transform="translate(179.95,438.00) scale(0.9,1)" fill="#000000" stroke="#000000" stroke-width="0.6" font-size="16" letter-spacing="1.111">9.6µ</text><text transform="translate(232.20,397.75) scale(0.9,1)" fill="#000000" stroke="#000000" stroke-width="0.6" font-size="16" letter-spacing="1.111">C3</text><text transform="translate(225.20,433.00) scale(0.9,1)" fill="#000000" stroke="#000000" stroke-width="0.6" font-size="16" letter-spacing="1.111">15p</text><text transform="translate(470.80,358.25) scale(0.9,1)" fill="#000000" stroke="#000000" stroke-width="0.6" font-size="16" letter-spacing="1.111">D1</text><text transform="translate(470.80,404.25) scale(0.9,1)" fill="#000000" stroke="#000000" stroke-width="0.6" font-size="16" letter-spacing="1.111">D</text><text transform="translate(1175.20,226.10) scale(0.9,1)" fill="#000000" stroke="#000000" stroke-width="0.6" font-size="16" letter-spacing="1.111">C10</text><text transform="translate(1176.20,260.60) scale(0.9,1)" fill="#000000" stroke="#000000" stroke-width="0.6" font-size="16" letter-spacing="1.111">50p</text><text transform="translate(1270.80,226.10) scale(0.9,1)" fill="#000000" stroke="#000000" stroke-width="0.6" font-size="16" letter-spacing="1.111">R4</text><text transform="translate(1270.80,252.00) scale(0.9,1)" fill="#000000" stroke="#000000" stroke-width="0.6" font-size="16" letter-spacing="1.111">100</text><text transform="translate(1143.20,268.00) scale(0.9,1)" fill="#000000" stroke="#000000" stroke-width="0.6" font-size="16" letter-spacing="1.111">C7</text><text transform="translate(1134.50,310.00) scale(0.9,1)" fill="#000000" stroke="#000000" stroke-width="0.6" font-size="16" letter-spacing="1.111">330p</text><text transform="translate(1388.30,266.10) scale(0.9,1)" fill="#000000" stroke="#000000" stroke-width="0.6" font-size="16" letter-spacing="1.111">J2</text><text transform="translate(1388.70,295.30) scale(0.9,1)" fill="#000000" stroke="#000000" stroke-width="0.6" font-size="16" letter-spacing="1.111">BF245B</text><text transform="translate(1185.10,306.10) scale(0.9,1)" fill="#000000" stroke="#000000" stroke-width="0.6" font-size="16" letter-spacing="1.111">C4</text><text transform="translate(1187.20,341.10) scale(0.9,1)" fill="#000000" stroke="#000000" stroke-width="0.6" font-size="16" letter-spacing="1.111">1n</text><text transform="translate(1185.10,386.75) scale(0.9,1)" fill="#000000" stroke="#000000" stroke-width="0.6" font-size="16" letter-spacing="1.111">C5</text><text transform="translate(1187.20,421.10) scale(0.9,1)" fill="#000000" stroke="#000000" stroke-width="0.6" font-size="16" letter-spacing="1.111">1n</text><text transform="translate(1282.10,398.40) scale(0.9,1)" fill="#000000" stroke="#000000" stroke-width="0.6" font-size="16" letter-spacing="1.111">R1</text><text transform="translate(1282.10,424.50) scale(0.9,1)" fill="#000000" stroke="#000000" stroke-width="0.6" font-size="16" letter-spacing="1.111">100K</text><text transform="translate(1396.70,387.50) scale(0.9,1)" fill="#000000" stroke="#000000" stroke-width="0.6" font-size="16" letter-spacing="1.111">L2</text><text transform="translate(1396.20,414.90) scale(0.9,1)" fill="#000000" stroke="#000000" stroke-width="0.6" font-size="16" letter-spacing="1.111">500µ</text><text transform="translate(1515.70,392.30) scale(0.9,1)" fill="#000000" stroke="#000000" stroke-width="0.6" font-size="16" letter-spacing="1.111">V2</text><text transform="translate(1515.20,450.10) scale(0.9,1)" fill="#000000" stroke="#000000" stroke-width="0.6" font-size="16" letter-spacing="1.111">9</text><text transform="translate(1040.80,410.25) scale(0.9,1)" fill="#000000" stroke="#000000" stroke-width="0.6" font-size="16" letter-spacing="1.111">L3</text><text transform="translate(1039.95,438.00) scale(0.9,1)" fill="#000000" stroke="#000000" stroke-width="0.6" font-size="16" letter-spacing="1.111">9.6µ</text><text transform="translate(1092.20,397.75) scale(0.9,1)" fill="#000000" stroke="#000000" stroke-width="0.6" font-size="16" letter-spacing="1.111">C8</text><text transform="translate(1085.20,433.00) scale(0.9,1)" fill="#000000" stroke="#000000" stroke-width="0.6" font-size="16" letter-spacing="1.111">15p</text><text transform="translate(286.60,553.10) scale(0.9,1)" fill="#000000" stroke="#000000" stroke-width="0.6" font-size="16" letter-spacing="1.678">.tran 0 80us 78us startup</text></g></svg>
<svg width="1680" height="1050" style="left:0;top:0"><path d="M44 617h1611v1h-1611z M44 997h1611v1h-1611z M44 617h1v381h-1z M1654 617h1v381h-1z" fill="#C0C0C0" shape-rendering="crispEdges"/><path d="M50 646h3v1h-3zM56 646h3v1h-3zM62 646h3v1h-3zM68 646h3v1h-3zM74 646h3v1h-3zM80 646h3v1h-3zM86 646h3v1h-3zM92 646h3v1h-3zM98 646h3v1h-3zM104 646h3v1h-3zM110 646h3v1h-3zM116 646h3v1h-3zM122 646h3v1h-3zM128 646h3v1h-3zM134 646h3v1h-3zM140 646h3v1h-3zM146 646h3v1h-3zM152 646h3v1h-3zM158 646h3v1h-3zM164 646h3v1h-3zM170 646h3v1h-3zM176 646h3v1h-3zM182 646h3v1h-3zM188 646h3v1h-3zM194 646h3v1h-3zM200 646h3v1h-3zM206 646h3v1h-3zM212 646h3v1h-3zM218 646h3v1h-3zM224 646h3v1h-3zM230 646h3v1h-3zM236 646h3v1h-3zM242 646h3v1h-3zM248 646h3v1h-3zM254 646h3v1h-3zM260 646h3v1h-3zM266 646h3v1h-3zM272 646h3v1h-3zM278 646h3v1h-3zM284 646h3v1h-3zM290 646h3v1h-3zM296 646h3v1h-3zM302 646h3v1h-3zM308 646h3v1h-3zM314 646h3v1h-3zM320 646h3v1h-3zM326 646h3v1h-3zM332 646h3v1h-3zM338 646h3v1h-3zM344 646h3v1h-3zM350 646h3v1h-3zM356 646h3v1h-3zM362 646h3v1h-3zM368 646h3v1h-3zM374 646h3v1h-3zM380 646h3v1h-3zM386 646h3v1h-3zM392 646h3v1h-3zM398 646h3v1h-3zM404 646h3v1h-3zM410 646h3v1h-3zM416 646h3v1h-3zM422 646h3v1h-3zM428 646h3v1h-3zM434 646h3v1h-3zM440 646h3v1h-3zM446 646h3v1h-3zM452 646h3v1h-3zM458 646h3v1h-3zM464 646h3v1h-3zM470 646h3v1h-3zM476 646h3v1h-3zM482 646h3v1h-3zM488 646h3v1h-3zM494 646h3v1h-3zM500 646h3v1h-3zM506 646h3v1h-3zM512 646h3v1h-3zM518 646h3v1h-3zM524 646h3v1h-3zM530 646h3v1h-3zM536 646h3v1h-3zM542 646h3v1h-3zM548 646h3v1h-3zM554 646h3v1h-3zM560 646h3v1h-3zM566 646h3v1h-3zM572 646h3v1h-3zM578 646h3v1h-3zM584 646h3v1h-3zM590 646h3v1h-3zM596 646h3v1h-3zM602 646h3v1h-3zM608 646h3v1h-3zM614 646h3v1h-3zM620 646h3v1h-3zM626 646h3v1h-3zM632 646h3v1h-3zM638 646h3v1h-3zM644 646h3v1h-3zM650 646h3v1h-3zM656 646h3v1h-3zM662 646h3v1h-3zM668 646h3v1h-3zM674 646h3v1h-3zM680 646h3v1h-3zM686 646h3v1h-3zM692 646h3v1h-3zM698 646h3v1h-3zM704 646h3v1h-3zM710 646h3v1h-3zM716 646h3v1h-3zM722 646h3v1h-3zM728 646h3v1h-3zM734 646h3v1h-3zM740 646h3v1h-3zM746 646h3v1h-3zM752 646h3v1h-3zM758 646h3v1h-3zM764 646h3v1h-3zM770 646h3v1h-3zM776 646h3v1h-3zM782 646h3v1h-3zM788 646h3v1h-3zM794 646h3v1h-3zM800 646h3v1h-3zM806 646h3v1h-3zM812 646h3v1h-3zM818 646h3v1h-3zM824 646h3v1h-3zM830 646h3v1h-3zM836 646h3v1h-3zM842 646h3v1h-3zM848 646h3v1h-3zM854 646h3v1h-3zM860 646h3v1h-3zM866 646h3v1h-3zM872 646h3v1h-3zM878 646h3v1h-3zM884 646h3v1h-3zM890 646h3v1h-3zM896 646h3v1h-3zM902 646h3v1h-3zM908 646h3v1h-3zM914 646h3v1h-3zM920 646h3v1h-3zM926 646h3v1h-3zM932 646h3v1h-3zM938 646h3v1h-3zM944 646h3v1h-3zM950 646h3v1h-3zM956 646h3v1h-3zM962 646h3v1h-3zM968 646h3v1h-3zM974 646h3v1h-3zM980 646h3v1h-3zM986 646h3v1h-3zM992 646h3v1h-3zM998 646h3v1h-3zM1004 646h3v1h-3zM1010 646h3v1h-3zM1016 646h3v1h-3zM1022 646h3v1h-3zM1028 646h3v1h-3zM1034 646h3v1h-3zM1040 646h3v1h-3zM1046 646h3v1h-3zM1052 646h3v1h-3zM1058 646h3v1h-3zM1064 646h3v1h-3zM1070 646h3v1h-3zM1076 646h3v1h-3zM1082 646h3v1h-3zM1088 646h3v1h-3zM1094 646h3v1h-3zM1100 646h3v1h-3zM1106 646h3v1h-3zM1112 646h3v1h-3zM1118 646h3v1h-3zM1124 646h3v1h-3zM1130 646h3v1h-3zM1136 646h3v1h-3zM1142 646h3v1h-3zM1148 646h3v1h-3zM1154 646h3v1h-3zM1160 646h3v1h-3zM1166 646h3v1h-3zM1172 646h3v1h-3zM1178 646h3v1h-3zM1184 646h3v1h-3zM1190 646h3v1h-3zM1196 646h3v1h-3zM1202 646h3v1h-3zM1208 646h3v1h-3zM1214 646h3v1h-3zM1220 646h3v1h-3zM1226 646h3v1h-3zM1232 646h3v1h-3zM1238 646h3v1h-3zM1244 646h3v1h-3zM1250 646h3v1h-3zM1256 646h3v1h-3zM1262 646h3v1h-3zM1268 646h3v1h-3zM1274 646h3v1h-3zM1280 646h3v1h-3zM1286 646h3v1h-3zM1292 646h3v1h-3zM1298 646h3v1h-3zM1304 646h3v1h-3zM1310 646h3v1h-3zM1316 646h3v1h-3zM1322 646h3v1h-3zM1328 646h3v1h-3zM1334 646h3v1h-3zM1340 646h3v1h-3zM1346 646h3v1h-3zM1352 646h3v1h-3zM1358 646h3v1h-3zM1364 646h3v1h-3zM1370 646h3v1h-3zM1376 646h3v1h-3zM1382 646h3v1h-3zM1388 646h3v1h-3zM1394 646h3v1h-3zM1400 646h3v1h-3zM1406 646h3v1h-3zM1412 646h3v1h-3zM1418 646h3v1h-3zM1424 646h3v1h-3zM1430 646h3v1h-3zM1436 646h3v1h-3zM1442 646h3v1h-3zM1448 646h3v1h-3zM1454 646h3v1h-3zM1460 646h3v1h-3zM1466 646h3v1h-3zM1472 646h3v1h-3zM1478 646h3v1h-3zM1484 646h3v1h-3zM1490 646h3v1h-3zM1496 646h3v1h-3zM1502 646h3v1h-3zM1508 646h3v1h-3zM1514 646h3v1h-3zM1520 646h3v1h-3zM1526 646h3v1h-3zM1532 646h3v1h-3zM1538 646h3v1h-3zM1544 646h3v1h-3zM1550 646h3v1h-3zM1556 646h3v1h-3zM1562 646h3v1h-3zM1568 646h3v1h-3zM1574 646h3v1h-3zM1580 646h3v1h-3zM1586 646h3v1h-3zM1592 646h3v1h-3zM1598 646h3v1h-3zM1604 646h3v1h-3zM1610 646h3v1h-3zM1616 646h3v1h-3zM1622 646h3v1h-3zM1628 646h3v1h-3zM1634 646h3v1h-3zM1640 646h3v1h-3zM1646 646h3v1h-3zM1652 646h3v1h-3zM37 646h7v1h-7zM50 675h3v1h-3zM56 675h3v1h-3zM62 675h3v1h-3zM68 675h3v1h-3zM74 675h3v1h-3zM80 675h3v1h-3zM86 675h3v1h-3zM92 675h3v1h-3zM98 675h3v1h-3zM104 675h3v1h-3zM110 675h3v1h-3zM116 675h3v1h-3zM122 675h3v1h-3zM128 675h3v1h-3zM134 675h3v1h-3zM140 675h3v1h-3zM146 675h3v1h-3zM152 675h3v1h-3zM158 675h3v1h-3zM164 675h3v1h-3zM170 675h3v1h-3zM176 675h3v1h-3zM182 675h3v1h-3zM188 675h3v1h-3zM194 675h3v1h-3zM200 675h3v1h-3zM206 675h3v1h-3zM212 675h3v1h-3zM218 675h3v1h-3zM224 675h3v1h-3zM230 675h3v1h-3zM236 675h3v1h-3zM242 675h3v1h-3zM248 675h3v1h-3zM254 675h3v1h-3zM260 675h3v1h-3zM266 675h3v1h-3zM272 675h3v1h-3zM278 675h3v1h-3zM284 675h3v1h-3zM290 675h3v1h-3zM296 675h3v1h-3zM302 675h3v1h-3zM308 675h3v1h-3zM314 675h3v1h-3zM320 675h3v1h-3zM326 675h3v1h-3zM332 675h3v1h-3zM338 675h3v1h-3zM344 675h3v1h-3zM350 675h3v1h-3zM356 675h3v1h-3zM362 675h3v1h-3zM368 675h3v1h-3zM374 675h3v1h-3zM380 675h3v1h-3zM386 675h3v1h-3zM392 675h3v1h-3zM398 675h3v1h-3zM404 675h3v1h-3zM410 675h3v1h-3zM416 675h3v1h-3zM422 675h3v1h-3zM428 675h3v1h-3zM434 675h3v1h-3zM440 675h3v1h-3zM446 675h3v1h-3zM452 675h3v1h-3zM458 675h3v1h-3zM464 675h3v1h-3zM470 675h3v1h-3zM476 675h3v1h-3zM482 675h3v1h-3zM488 675h3v1h-3zM494 675h3v1h-3zM500 675h3v1h-3zM506 675h3v1h-3zM512 675h3v1h-3zM518 675h3v1h-3zM524 675h3v1h-3zM530 675h3v1h-3zM536 675h3v1h-3zM542 675h3v1h-3zM548 675h3v1h-3zM554 675h3v1h-3zM560 675h3v1h-3zM566 675h3v1h-3zM572 675h3v1h-3zM578 675h3v1h-3zM584 675h3v1h-3zM590 675h3v1h-3zM596 675h3v1h-3zM602 675h3v1h-3zM608 675h3v1h-3zM614 675h3v1h-3zM620 675h3v1h-3zM626 675h3v1h-3zM632 675h3v1h-3zM638 675h3v1h-3zM644 675h3v1h-3zM650 675h3v1h-3zM656 675h3v1h-3zM662 675h3v1h-3zM668 675h3v1h-3zM674 675h3v1h-3zM680 675h3v1h-3zM686 675h3v1h-3zM692 675h3v1h-3zM698 675h3v1h-3zM704 675h3v1h-3zM710 675h3v1h-3zM716 675h3v1h-3zM722 675h3v1h-3zM728 675h3v1h-3zM734 675h3v1h-3zM740 675h3v1h-3zM746 675h3v1h-3zM752 675h3v1h-3zM758 675h3v1h-3zM764 675h3v1h-3zM770 675h3v1h-3zM776 675h3v1h-3zM782 675h3v1h-3zM788 675h3v1h-3zM794 675h3v1h-3zM800 675h3v1h-3zM806 675h3v1h-3zM812 675h3v1h-3zM818 675h3v1h-3zM824 675h3v1h-3zM830 675h3v1h-3zM836 675h3v1h-3zM842 675h3v1h-3zM848 675h3v1h-3zM854 675h3v1h-3zM860 675h3v1h-3zM866 675h3v1h-3zM872 675h3v1h-3zM878 675h3v1h-3zM884 675h3v1h-3zM890 675h3v1h-3zM896 675h3v1h-3zM902 675h3v1h-3zM908 675h3v1h-3zM914 675h3v1h-3zM920 675h3v1h-3zM926 675h3v1h-3zM932 675h3v1h-3zM938 675h3v1h-3zM944 675h3v1h-3zM950 675h3v1h-3zM956 675h3v1h-3zM962 675h3v1h-3zM968 675h3v1h-3zM974 675h3v1h-3zM980 675h3v1h-3zM986 675h3v1h-3zM992 675h3v1h-3zM998 675h3v1h-3zM1004 675h3v1h-3zM1010 675h3v1h-3zM1016 675h3v1h-3zM1022 675h3v1h-3zM1028 675h3v1h-3zM1034 675h3v1h-3zM1040 675h3v1h-3zM1046 675h3v1h-3zM1052 675h3v1h-3zM1058 675h3v1h-3zM1064 675h3v1h-3zM1070 675h3v1h-3zM1076 675h3v1h-3zM1082 675h3v1h-3zM1088 675h3v1h-3zM1094 675h3v1h-3zM1100 675h3v1h-3zM1106 675h3v1h-3zM1112 675h3v1h-3zM1118 675h3v1h-3zM1124 675h3v1h-3zM1130 675h3v1h-3zM1136 675h3v1h-3zM1142 675h3v1h-3zM1148 675h3v1h-3zM1154 675h3v1h-3zM1160 675h3v1h-3zM1166 675h3v1h-3zM1172 675h3v1h-3zM1178 675h3v1h-3zM1184 675h3v1h-3zM1190 675h3v1h-3zM1196 675h3v1h-3zM1202 675h3v1h-3zM1208 675h3v1h-3zM1214 675h3v1h-3zM1220 675h3v1h-3zM1226 675h3v1h-3zM1232 675h3v1h-3zM1238 675h3v1h-3zM1244 675h3v1h-3zM1250 675h3v1h-3zM1256 675h3v1h-3zM1262 675h3v1h-3zM1268 675h3v1h-3zM1274 675h3v1h-3zM1280 675h3v1h-3zM1286 675h3v1h-3zM1292 675h3v1h-3zM1298 675h3v1h-3zM1304 675h3v1h-3zM1310 675h3v1h-3zM1316 675h3v1h-3zM1322 675h3v1h-3zM1328 675h3v1h-3zM1334 675h3v1h-3zM1340 675h3v1h-3zM1346 675h3v1h-3zM1352 675h3v1h-3zM1358 675h3v1h-3zM1364 675h3v1h-3zM1370 675h3v1h-3zM1376 675h3v1h-3zM1382 675h3v1h-3zM1388 675h3v1h-3zM1394 675h3v1h-3zM1400 675h3v1h-3zM1406 675h3v1h-3zM1412 675h3v1h-3zM1418 675h3v1h-3zM1424 675h3v1h-3zM1430 675h3v1h-3zM1436 675h3v1h-3zM1442 675h3v1h-3zM1448 675h3v1h-3zM1454 675h3v1h-3zM1460 675h3v1h-3zM1466 675h3v1h-3zM1472 675h3v1h-3zM1478 675h3v1h-3zM1484 675h3v1h-3zM1490 675h3v1h-3zM1496 675h3v1h-3zM1502 675h3v1h-3zM1508 675h3v1h-3zM1514 675h3v1h-3zM1520 675h3v1h-3zM1526 675h3v1h-3zM1532 675h3v1h-3zM1538 675h3v1h-3zM1544 675h3v1h-3zM1550 675h3v1h-3zM1556 675h3v1h-3zM1562 675h3v1h-3zM1568 675h3v1h-3zM1574 675h3v1h-3zM1580 675h3v1h-3zM1586 675h3v1h-3zM1592 675h3v1h-3zM1598 675h3v1h-3zM1604 675h3v1h-3zM1610 675h3v1h-3zM1616 675h3v1h-3zM1622 675h3v1h-3zM1628 675h3v1h-3zM1634 675h3v1h-3zM1640 675h3v1h-3zM1646 675h3v1h-3zM1652 675h3v1h-3zM37 675h7v1h-7zM50 705h3v1h-3zM56 705h3v1h-3zM62 705h3v1h-3zM68 705h3v1h-3zM74 705h3v1h-3zM80 705h3v1h-3zM86 705h3v1h-3zM92 705h3v1h-3zM98 705h3v1h-3zM104 705h3v1h-3zM110 705h3v1h-3zM116 705h3v1h-3zM122 705h3v1h-3zM128 705h3v1h-3zM134 705h3v1h-3zM140 705h3v1h-3zM146 705h3v1h-3zM152 705h3v1h-3zM158 705h3v1h-3zM164 705h3v1h-3zM170 705h3v1h-3zM176 705h3v1h-3zM182 705h3v1h-3zM188 705h3v1h-3zM194 705h3v1h-3zM200 705h3v1h-3zM206 705h3v1h-3zM212 705h3v1h-3zM218 705h3v1h-3zM224 705h3v1h-3zM230 705h3v1h-3zM236 705h3v1h-3zM242 705h3v1h-3zM248 705h3v1h-3zM254 705h3v1h-3zM260 705h3v1h-3zM266 705h3v1h-3zM272 705h3v1h-3zM278 705h3v1h-3zM284 705h3v1h-3zM290 705h3v1h-3zM296 705h3v1h-3zM302 705h3v1h-3zM308 705h3v1h-3zM314 705h3v1h-3zM320 705h3v1h-3zM326 705h3v1h-3zM332 705h3v1h-3zM338 705h3v1h-3zM344 705h3v1h-3zM350 705h3v1h-3zM356 705h3v1h-3zM362 705h3v1h-3zM368 705h3v1h-3zM374 705h3v1h-3zM380 705h3v1h-3zM386 705h3v1h-3zM392 705h3v1h-3zM398 705h3v1h-3zM404 705h3v1h-3zM410 705h3v1h-3zM416 705h3v1h-3zM422 705h3v1h-3zM428 705h3v1h-3zM434 705h3v1h-3zM440 705h3v1h-3zM446 705h3v1h-3zM452 705h3v1h-3zM458 705h3v1h-3zM464 705h3v1h-3zM470 705h3v1h-3zM476 705h3v1h-3zM482 705h3v1h-3zM488 705h3v1h-3zM494 705h3v1h-3zM500 705h3v1h-3zM506 705h3v1h-3zM512 705h3v1h-3zM518 705h3v1h-3zM524 705h3v1h-3zM530 705h3v1h-3zM536 705h3v1h-3zM542 705h3v1h-3zM548 705h3v1h-3zM554 705h3v1h-3zM560 705h3v1h-3zM566 705h3v1h-3zM572 705h3v1h-3zM578 705h3v1h-3zM584 705h3v1h-3zM590 705h3v1h-3zM596 705h3v1h-3zM602 705h3v1h-3zM608 705h3v1h-3zM614 705h3v1h-3zM620 705h3v1h-3zM626 705h3v1h-3zM632 705h3v1h-3zM638 705h3v1h-3zM644 705h3v1h-3zM650 705h3v1h-3zM656 705h3v1h-3zM662 705h3v1h-3zM668 705h3v1h-3zM674 705h3v1h-3zM680 705h3v1h-3zM686 705h3v1h-3zM692 705h3v1h-3zM698 705h3v1h-3zM704 705h3v1h-3zM710 705h3v1h-3zM716 705h3v1h-3zM722 705h3v1h-3zM728 705h3v1h-3zM734 705h3v1h-3zM740 705h3v1h-3zM746 705h3v1h-3zM752 705h3v1h-3zM758 705h3v1h-3zM764 705h3v1h-3zM770 705h3v1h-3zM776 705h3v1h-3zM782 705h3v1h-3zM788 705h3v1h-3zM794 705h3v1h-3zM800 705h3v1h-3zM806 705h3v1h-3zM812 705h3v1h-3zM818 705h3v1h-3zM824 705h3v1h-3zM830 705h3v1h-3zM836 705h3v1h-3zM842 705h3v1h-3zM848 705h3v1h-3zM854 705h3v1h-3zM860 705h3v1h-3zM866 705h3v1h-3zM872 705h3v1h-3zM878 705h3v1h-3zM884 705h3v1h-3zM890 705h3v1h-3zM896 705h3v1h-3zM902 705h3v1h-3zM908 705h3v1h-3zM914 705h3v1h-3zM920 705h3v1h-3zM926 705h3v1h-3zM932 705h3v1h-3zM938 705h3v1h-3zM944 705h3v1h-3zM950 705h3v1h-3zM956 705h3v1h-3zM962 705h3v1h-3zM968 705h3v1h-3zM974 705h3v1h-3zM980 705h3v1h-3zM986 705h3v1h-3zM992 705h3v1h-3zM998 705h3v1h-3zM1004 705h3v1h-3zM1010 705h3v1h-3zM1016 705h3v1h-3zM1022 705h3v1h-3zM1028 705h3v1h-3zM1034 705h3v1h-3zM1040 705h3v1h-3zM1046 705h3v1h-3zM1052 705h3v1h-3zM1058 705h3v1h-3zM1064 705h3v1h-3zM1070 705h3v1h-3zM1076 705h3v1h-3zM1082 705h3v1h-3zM1088 705h3v1h-3zM1094 705h3v1h-3zM1100 705h3v1h-3zM1106 705h3v1h-3zM1112 705h3v1h-3zM1118 705h3v1h-3zM1124 705h3v1h-3zM1130 705h3v1h-3zM1136 705h3v1h-3zM1142 705h3v1h-3zM1148 705h3v1h-3zM1154 705h3v1h-3zM1160 705h3v1h-3zM1166 705h3v1h-3zM1172 705h3v1h-3zM1178 705h3v1h-3zM1184 705h3v1h-3zM1190 705h3v1h-3zM1196 705h3v1h-3zM1202 705h3v1h-3zM1208 705h3v1h-3zM1214 705h3v1h-3zM1220 705h3v1h-3zM1226 705h3v1h-3zM1232 705h3v1h-3zM1238 705h3v1h-3zM1244 705h3v1h-3zM1250 705h3v1h-3zM1256 705h3v1h-3zM1262 705h3v1h-3zM1268 705h3v1h-3zM1274 705h3v1h-3zM1280 705h3v1h-3zM1286 705h3v1h-3zM1292 705h3v1h-3zM1298 705h3v1h-3zM1304 705h3v1h-3zM1310 705h3v1h-3zM1316 705h3v1h-3zM1322 705h3v1h-3zM1328 705h3v1h-3zM1334 705h3v1h-3zM1340 705h3v1h-3zM1346 705h3v1h-3zM1352 705h3v1h-3zM1358 705h3v1h-3zM1364 705h3v1h-3zM1370 705h3v1h-3zM1376 705h3v1h-3zM1382 705h3v1h-3zM1388 705h3v1h-3zM1394 705h3v1h-3zM1400 705h3v1h-3zM1406 705h3v1h-3zM1412 705h3v1h-3zM1418 705h3v1h-3zM1424 705h3v1h-3zM1430 705h3v1h-3zM1436 705h3v1h-3zM1442 705h3v1h-3zM1448 705h3v1h-3zM1454 705h3v1h-3zM1460 705h3v1h-3zM1466 705h3v1h-3zM1472 705h3v1h-3zM1478 705h3v1h-3zM1484 705h3v1h-3zM1490 705h3v1h-3zM1496 705h3v1h-3zM1502 705h3v1h-3zM1508 705h3v1h-3zM1514 705h3v1h-3zM1520 705h3v1h-3zM1526 705h3v1h-3zM1532 705h3v1h-3zM1538 705h3v1h-3zM1544 705h3v1h-3zM1550 705h3v1h-3zM1556 705h3v1h-3zM1562 705h3v1h-3zM1568 705h3v1h-3zM1574 705h3v1h-3zM1580 705h3v1h-3zM1586 705h3v1h-3zM1592 705h3v1h-3zM1598 705h3v1h-3zM1604 705h3v1h-3zM1610 705h3v1h-3zM1616 705h3v1h-3zM1622 705h3v1h-3zM1628 705h3v1h-3zM1634 705h3v1h-3zM1640 705h3v1h-3zM1646 705h3v1h-3zM1652 705h3v1h-3zM37 705h7v1h-7zM50 734h3v1h-3zM56 734h3v1h-3zM62 734h3v1h-3zM68 734h3v1h-3zM74 734h3v1h-3zM80 734h3v1h-3zM86 734h3v1h-3zM92 734h3v1h-3zM98 734h3v1h-3zM104 734h3v1h-3zM110 734h3v1h-3zM116 734h3v1h-3zM122 734h3v1h-3zM128 734h3v1h-3zM134 734h3v1h-3zM140 734h3v1h-3zM146 734h3v1h-3zM152 734h3v1h-3zM158 734h3v1h-3zM164 734h3v1h-3zM170 734h3v1h-3zM176 734h3v1h-3zM182 734h3v1h-3zM188 734h3v1h-3zM194 734h3v1h-3zM200 734h3v1h-3zM206 734h3v1h-3zM212 734h3v1h-3zM218 734h3v1h-3zM224 734h3v1h-3zM230 734h3v1h-3zM236 734h3v1h-3zM242 734h3v1h-3zM248 734h3v1h-3zM254 734h3v1h-3zM260 734h3v1h-3zM266 734h3v1h-3zM272 734h3v1h-3zM278 734h3v1h-3zM284 734h3v1h-3zM290 734h3v1h-3zM296 734h3v1h-3zM302 734h3v1h-3zM308 734h3v1h-3zM314 734h3v1h-3zM320 734h3v1h-3zM326 734h3v1h-3zM332 734h3v1h-3zM338 734h3v1h-3zM344 734h3v1h-3zM350 734h3v1h-3zM356 734h3v1h-3zM362 734h3v1h-3zM368 734h3v1h-3zM374 734h3v1h-3zM380 734h3v1h-3zM386 734h3v1h-3zM392 734h3v1h-3zM398 734h3v1h-3zM404 734h3v1h-3zM410 734h3v1h-3zM416 734h3v1h-3zM422 734h3v1h-3zM428 734h3v1h-3zM434 734h3v1h-3zM440 734h3v1h-3zM446 734h3v1h-3zM452 734h3v1h-3zM458 734h3v1h-3zM464 734h3v1h-3zM470 734h3v1h-3zM476 734h3v1h-3zM482 734h3v1h-3zM488 734h3v1h-3zM494 734h3v1h-3zM500 734h3v1h-3zM506 734h3v1h-3zM512 734h3v1h-3zM518 734h3v1h-3zM524 734h3v1h-3zM530 734h3v1h-3zM536 734h3v1h-3zM542 734h3v1h-3zM548 734h3v1h-3zM554 734h3v1h-3zM560 734h3v1h-3zM566 734h3v1h-3zM572 734h3v1h-3zM578 734h3v1h-3zM584 734h3v1h-3zM590 734h3v1h-3zM596 734h3v1h-3zM602 734h3v1h-3zM608 734h3v1h-3zM614 734h3v1h-3zM620 734h3v1h-3zM626 734h3v1h-3zM632 734h3v1h-3zM638 734h3v1h-3zM644 734h3v1h-3zM650 734h3v1h-3zM656 734h3v1h-3zM662 734h3v1h-3zM668 734h3v1h-3zM674 734h3v1h-3zM680 734h3v1h-3zM686 734h3v1h-3zM692 734h3v1h-3zM698 734h3v1h-3zM704 734h3v1h-3zM710 734h3v1h-3zM716 734h3v1h-3zM722 734h3v1h-3zM728 734h3v1h-3zM734 734h3v1h-3zM740 734h3v1h-3zM746 734h3v1h-3zM752 734h3v1h-3zM758 734h3v1h-3zM764 734h3v1h-3zM770 734h3v1h-3zM776 734h3v1h-3zM782 734h3v1h-3zM788 734h3v1h-3zM794 734h3v1h-3zM800 734h3v1h-3zM806 734h3v1h-3zM812 734h3v1h-3zM818 734h3v1h-3zM824 734h3v1h-3zM830 734h3v1h-3zM836 734h3v1h-3zM842 734h3v1h-3zM848 734h3v1h-3zM854 734h3v1h-3zM860 734h3v1h-3zM866 734h3v1h-3zM872 734h3v1h-3zM878 734h3v1h-3zM884 734h3v1h-3zM890 734h3v1h-3zM896 734h3v1h-3zM902 734h3v1h-3zM908 734h3v1h-3zM914 734h3v1h-3zM920 734h3v1h-3zM926 734h3v1h-3zM932 734h3v1h-3zM938 734h3v1h-3zM944 734h3v1h-3zM950 734h3v1h-3zM956 734h3v1h-3zM962 734h3v1h-3zM968 734h3v1h-3zM974 734h3v1h-3zM980 734h3v1h-3zM986 734h3v1h-3zM992 734h3v1h-3zM998 734h3v1h-3zM1004 734h3v1h-3zM1010 734h3v1h-3zM1016 734h3v1h-3zM1022 734h3v1h-3zM1028 734h3v1h-3zM1034 734h3v1h-3zM1040 734h3v1h-3zM1046 734h3v1h-3zM1052 734h3v1h-3zM1058 734h3v1h-3zM1064 734h3v1h-3zM1070 734h3v1h-3zM1076 734h3v1h-3zM1082 734h3v1h-3zM1088 734h3v1h-3zM1094 734h3v1h-3zM1100 734h3v1h-3zM1106 734h3v1h-3zM1112 734h3v1h-3zM1118 734h3v1h-3zM1124 734h3v1h-3zM1130 734h3v1h-3zM1136 734h3v1h-3zM1142 734h3v1h-3zM1148 734h3v1h-3zM1154 734h3v1h-3zM1160 734h3v1h-3zM1166 734h3v1h-3zM1172 734h3v1h-3zM1178 734h3v1h-3zM1184 734h3v1h-3zM1190 734h3v1h-3zM1196 734h3v1h-3zM1202 734h3v1h-3zM1208 734h3v1h-3zM1214 734h3v1h-3zM1220 734h3v1h-3zM1226 734h3v1h-3zM1232 734h3v1h-3zM1238 734h3v1h-3zM1244 734h3v1h-3zM1250 734h3v1h-3zM1256 734h3v1h-3zM1262 734h3v1h-3zM1268 734h3v1h-3zM1274 734h3v1h-3zM1280 734h3v1h-3zM1286 734h3v1h-3zM1292 734h3v1h-3zM1298 734h3v1h-3zM1304 734h3v1h-3zM1310 734h3v1h-3zM1316 734h3v1h-3zM1322 734h3v1h-3zM1328 734h3v1h-3zM1334 734h3v1h-3zM1340 734h3v1h-3zM1346 734h3v1h-3zM1352 734h3v1h-3zM1358 734h3v1h-3zM1364 734h3v1h-3zM1370 734h3v1h-3zM1376 734h3v1h-3zM1382 734h3v1h-3zM1388 734h3v1h-3zM1394 734h3v1h-3zM1400 734h3v1h-3zM1406 734h3v1h-3zM1412 734h3v1h-3zM1418 734h3v1h-3zM1424 734h3v1h-3zM1430 734h3v1h-3zM1436 734h3v1h-3zM1442 734h3v1h-3zM1448 734h3v1h-3zM1454 734h3v1h-3zM1460 734h3v1h-3zM1466 734h3v1h-3zM1472 734h3v1h-3zM1478 734h3v1h-3zM1484 734h3v1h-3zM1490 734h3v1h-3zM1496 734h3v1h-3zM1502 734h3v1h-3zM1508 734h3v1h-3zM1514 734h3v1h-3zM1520 734h3v1h-3zM1526 734h3v1h-3zM1532 734h3v1h-3zM1538 734h3v1h-3zM1544 734h3v1h-3zM1550 734h3v1h-3zM1556 734h3v1h-3zM1562 734h3v1h-3zM1568 734h3v1h-3zM1574 734h3v1h-3zM1580 734h3v1h-3zM1586 734h3v1h-3zM1592 734h3v1h-3zM1598 734h3v1h-3zM1604 734h3v1h-3zM1610 734h3v1h-3zM1616 734h3v1h-3zM1622 734h3v1h-3zM1628 734h3v1h-3zM1634 734h3v1h-3zM1640 734h3v1h-3zM1646 734h3v1h-3zM1652 734h3v1h-3zM37 734h7v1h-7zM50 763h3v1h-3zM56 763h3v1h-3zM62 763h3v1h-3zM68 763h3v1h-3zM74 763h3v1h-3zM80 763h3v1h-3zM86 763h3v1h-3zM92 763h3v1h-3zM98 763h3v1h-3zM104 763h3v1h-3zM110 763h3v1h-3zM116 763h3v1h-3zM122 763h3v1h-3zM128 763h3v1h-3zM134 763h3v1h-3zM140 763h3v1h-3zM146 763h3v1h-3zM152 763h3v1h-3zM158 763h3v1h-3zM164 763h3v1h-3zM170 763h3v1h-3zM176 763h3v1h-3zM182 763h3v1h-3zM188 763h3v1h-3zM194 763h3v1h-3zM200 763h3v1h-3zM206 763h3v1h-3zM212 763h3v1h-3zM218 763h3v1h-3zM224 763h3v1h-3zM230 763h3v1h-3zM236 763h3v1h-3zM242 763h3v1h-3zM248 763h3v1h-3zM254 763h3v1h-3zM260 763h3v1h-3zM266 763h3v1h-3zM272 763h3v1h-3zM278 763h3v1h-3zM284 763h3v1h-3zM290 763h3v1h-3zM296 763h3v1h-3zM302 763h3v1h-3zM308 763h3v1h-3zM314 763h3v1h-3zM320 763h3v1h-3zM326 763h3v1h-3zM332 763h3v1h-3zM338 763h3v1h-3zM344 763h3v1h-3zM350 763h3v1h-3zM356 763h3v1h-3zM362 763h3v1h-3zM368 763h3v1h-3zM374 763h3v1h-3zM380 763h3v1h-3zM386 763h3v1h-3zM392 763h3v1h-3zM398 763h3v1h-3zM404 763h3v1h-3zM410 763h3v1h-3zM416 763h3v1h-3zM422 763h3v1h-3zM428 763h3v1h-3zM434 763h3v1h-3zM440 763h3v1h-3zM446 763h3v1h-3zM452 763h3v1h-3zM458 763h3v1h-3zM464 763h3v1h-3zM470 763h3v1h-3zM476 763h3v1h-3zM482 763h3v1h-3zM488 763h3v1h-3zM494 763h3v1h-3zM500 763h3v1h-3zM506 763h3v1h-3zM512 763h3v1h-3zM518 763h3v1h-3zM524 763h3v1h-3zM530 763h3v1h-3zM536 763h3v1h-3zM542 763h3v1h-3zM548 763h3v1h-3zM554 763h3v1h-3zM560 763h3v1h-3zM566 763h3v1h-3zM572 763h3v1h-3zM578 763h3v1h-3zM584 763h3v1h-3zM590 763h3v1h-3zM596 763h3v1h-3zM602 763h3v1h-3zM608 763h3v1h-3zM614 763h3v1h-3zM620 763h3v1h-3zM626 763h3v1h-3zM632 763h3v1h-3zM638 763h3v1h-3zM644 763h3v1h-3zM650 763h3v1h-3zM656 763h3v1h-3zM662 763h3v1h-3zM668 763h3v1h-3zM674 763h3v1h-3zM680 763h3v1h-3zM686 763h3v1h-3zM692 763h3v1h-3zM698 763h3v1h-3zM704 763h3v1h-3zM710 763h3v1h-3zM716 763h3v1h-3zM722 763h3v1h-3zM728 763h3v1h-3zM734 763h3v1h-3zM740 763h3v1h-3zM746 763h3v1h-3zM752 763h3v1h-3zM758 763h3v1h-3zM764 763h3v1h-3zM770 763h3v1h-3zM776 763h3v1h-3zM782 763h3v1h-3zM788 763h3v1h-3zM794 763h3v1h-3zM800 763h3v1h-3zM806 763h3v1h-3zM812 763h3v1h-3zM818 763h3v1h-3zM824 763h3v1h-3zM830 763h3v1h-3zM836 763h3v1h-3zM842 763h3v1h-3zM848 763h3v1h-3zM854 763h3v1h-3zM860 763h3v1h-3zM866 763h3v1h-3zM872 763h3v1h-3zM878 763h3v1h-3zM884 763h3v1h-3zM890 763h3v1h-3zM896 763h3v1h-3zM902 763h3v1h-3zM908 763h3v1h-3zM914 763h3v1h-3zM920 763h3v1h-3zM926 763h3v1h-3zM932 763h3v1h-3zM938 763h3v1h-3zM944 763h3v1h-3zM950 763h3v1h-3zM956 763h3v1h-3zM962 763h3v1h-3zM968 763h3v1h-3zM974 763h3v1h-3zM980 763h3v1h-3zM986 763h3v1h-3zM992 763h3v1h-3zM998 763h3v1h-3zM1004 763h3v1h-3zM1010 763h3v1h-3zM1016 763h3v1h-3zM1022 763h3v1h-3zM1028 763h3v1h-3zM1034 763h3v1h-3zM1040 763h3v1h-3zM1046 763h3v1h-3zM1052 763h3v1h-3zM1058 763h3v1h-3zM1064 763h3v1h-3zM1070 763h3v1h-3zM1076 763h3v1h-3zM1082 763h3v1h-3zM1088 763h3v1h-3zM1094 763h3v1h-3zM1100 763h3v1h-3zM1106 763h3v1h-3zM1112 763h3v1h-3zM1118 763h3v1h-3zM1124 763h3v1h-3zM1130 763h3v1h-3zM1136 763h3v1h-3zM1142 763h3v1h-3zM1148 763h3v1h-3zM1154 763h3v1h-3zM1160 763h3v1h-3zM1166 763h3v1h-3zM1172 763h3v1h-3zM1178 763h3v1h-3zM1184 763h3v1h-3zM1190 763h3v1h-3zM1196 763h3v1h-3zM1202 763h3v1h-3zM1208 763h3v1h-3zM1214 763h3v1h-3zM1220 763h3v1h-3zM1226 763h3v1h-3zM1232 763h3v1h-3zM1238 763h3v1h-3zM1244 763h3v1h-3zM1250 763h3v1h-3zM1256 763h3v1h-3zM1262 763h3v1h-3zM1268 763h3v1h-3zM1274 763h3v1h-3zM1280 763h3v1h-3zM1286 763h3v1h-3zM1292 763h3v1h-3zM1298 763h3v1h-3zM1304 763h3v1h-3zM1310 763h3v1h-3zM1316 763h3v1h-3zM1322 763h3v1h-3zM1328 763h3v1h-3zM1334 763h3v1h-3zM1340 763h3v1h-3zM1346 763h3v1h-3zM1352 763h3v1h-3zM1358 763h3v1h-3zM1364 763h3v1h-3zM1370 763h3v1h-3zM1376 763h3v1h-3zM1382 763h3v1h-3zM1388 763h3v1h-3zM1394 763h3v1h-3zM1400 763h3v1h-3zM1406 763h3v1h-3zM1412 763h3v1h-3zM1418 763h3v1h-3zM1424 763h3v1h-3zM1430 763h3v1h-3zM1436 763h3v1h-3zM1442 763h3v1h-3zM1448 763h3v1h-3zM1454 763h3v1h-3zM1460 763h3v1h-3zM1466 763h3v1h-3zM1472 763h3v1h-3zM1478 763h3v1h-3zM1484 763h3v1h-3zM1490 763h3v1h-3zM1496 763h3v1h-3zM1502 763h3v1h-3zM1508 763h3v1h-3zM1514 763h3v1h-3zM1520 763h3v1h-3zM1526 763h3v1h-3zM1532 763h3v1h-3zM1538 763h3v1h-3zM1544 763h3v1h-3zM1550 763h3v1h-3zM1556 763h3v1h-3zM1562 763h3v1h-3zM1568 763h3v1h-3zM1574 763h3v1h-3zM1580 763h3v1h-3zM1586 763h3v1h-3zM1592 763h3v1h-3zM1598 763h3v1h-3zM1604 763h3v1h-3zM1610 763h3v1h-3zM1616 763h3v1h-3zM1622 763h3v1h-3zM1628 763h3v1h-3zM1634 763h3v1h-3zM1640 763h3v1h-3zM1646 763h3v1h-3zM1652 763h3v1h-3zM37 763h7v1h-7zM50 792h3v1h-3zM56 792h3v1h-3zM62 792h3v1h-3zM68 792h3v1h-3zM74 792h3v1h-3zM80 792h3v1h-3zM86 792h3v1h-3zM92 792h3v1h-3zM98 792h3v1h-3zM104 792h3v1h-3zM110 792h3v1h-3zM116 792h3v1h-3zM122 792h3v1h-3zM128 792h3v1h-3zM134 792h3v1h-3zM140 792h3v1h-3zM146 792h3v1h-3zM152 792h3v1h-3zM158 792h3v1h-3zM164 792h3v1h-3zM170 792h3v1h-3zM176 792h3v1h-3zM182 792h3v1h-3zM188 792h3v1h-3zM194 792h3v1h-3zM200 792h3v1h-3zM206 792h3v1h-3zM212 792h3v1h-3zM218 792h3v1h-3zM224 792h3v1h-3zM230 792h3v1h-3zM236 792h3v1h-3zM242 792h3v1h-3zM248 792h3v1h-3zM254 792h3v1h-3zM260 792h3v1h-3zM266 792h3v1h-3zM272 792h3v1h-3zM278 792h3v1h-3zM284 792h3v1h-3zM290 792h3v1h-3zM296 792h3v1h-3zM302 792h3v1h-3zM308 792h3v1h-3zM314 792h3v1h-3zM320 792h3v1h-3zM326 792h3v1h-3zM332 792h3v1h-3zM338 792h3v1h-3zM344 792h3v1h-3zM350 792h3v1h-3zM356 792h3v1h-3zM362 792h3v1h-3zM368 792h3v1h-3zM374 792h3v1h-3zM380 792h3v1h-3zM386 792h3v1h-3zM392 792h3v1h-3zM398 792h3v1h-3zM404 792h3v1h-3zM410 792h3v1h-3zM416 792h3v1h-3zM422 792h3v1h-3zM428 792h3v1h-3zM434 792h3v1h-3zM440 792h3v1h-3zM446 792h3v1h-3zM452 792h3v1h-3zM458 792h3v1h-3zM464 792h3v1h-3zM470 792h3v1h-3zM476 792h3v1h-3zM482 792h3v1h-3zM488 792h3v1h-3zM494 792h3v1h-3zM500 792h3v1h-3zM506 792h3v1h-3zM512 792h3v1h-3zM518 792h3v1h-3zM524 792h3v1h-3zM530 792h3v1h-3zM536 792h3v1h-3zM542 792h3v1h-3zM548 792h3v1h-3zM554 792h3v1h-3zM560 792h3v1h-3zM566 792h3v1h-3zM572 792h3v1h-3zM578 792h3v1h-3zM584 792h3v1h-3zM590 792h3v1h-3zM596 792h3v1h-3zM602 792h3v1h-3zM608 792h3v1h-3zM614 792h3v1h-3zM620 792h3v1h-3zM626 792h3v1h-3zM632 792h3v1h-3zM638 792h3v1h-3zM644 792h3v1h-3zM650 792h3v1h-3zM656 792h3v1h-3zM662 792h3v1h-3zM668 792h3v1h-3zM674 792h3v1h-3zM680 792h3v1h-3zM686 792h3v1h-3zM692 792h3v1h-3zM698 792h3v1h-3zM704 792h3v1h-3zM710 792h3v1h-3zM716 792h3v1h-3zM722 792h3v1h-3zM728 792h3v1h-3zM734 792h3v1h-3zM740 792h3v1h-3zM746 792h3v1h-3zM752 792h3v1h-3zM758 792h3v1h-3zM764 792h3v1h-3zM770 792h3v1h-3zM776 792h3v1h-3zM782 792h3v1h-3zM788 792h3v1h-3zM794 792h3v1h-3zM800 792h3v1h-3zM806 792h3v1h-3zM812 792h3v1h-3zM818 792h3v1h-3zM824 792h3v1h-3zM830 792h3v1h-3zM836 792h3v1h-3zM842 792h3v1h-3zM848 792h3v1h-3zM854 792h3v1h-3zM860 792h3v1h-3zM866 792h3v1h-3zM872 792h3v1h-3zM878 792h3v1h-3zM884 792h3v1h-3zM890 792h3v1h-3zM896 792h3v1h-3zM902 792h3v1h-3zM908 792h3v1h-3zM914 792h3v1h-3zM920 792h3v1h-3zM926 792h3v1h-3zM932 792h3v1h-3zM938 792h3v1h-3zM944 792h3v1h-3zM950 792h3v1h-3zM956 792h3v1h-3zM962 792h3v1h-3zM968 792h3v1h-3zM974 792h3v1h-3zM980 792h3v1h-3zM986 792h3v1h-3zM992 792h3v1h-3zM998 792h3v1h-3zM1004 792h3v1h-3zM1010 792h3v1h-3zM1016 792h3v1h-3zM1022 792h3v1h-3zM1028 792h3v1h-3zM1034 792h3v1h-3zM1040 792h3v1h-3zM1046 792h3v1h-3zM1052 792h3v1h-3zM1058 792h3v1h-3zM1064 792h3v1h-3zM1070 792h3v1h-3zM1076 792h3v1h-3zM1082 792h3v1h-3zM1088 792h3v1h-3zM1094 792h3v1h-3zM1100 792h3v1h-3zM1106 792h3v1h-3zM1112 792h3v1h-3zM1118 792h3v1h-3zM1124 792h3v1h-3zM1130 792h3v1h-3zM1136 792h3v1h-3zM1142 792h3v1h-3zM1148 792h3v1h-3zM1154 792h3v1h-3zM1160 792h3v1h-3zM1166 792h3v1h-3zM1172 792h3v1h-3zM1178 792h3v1h-3zM1184 792h3v1h-3zM1190 792h3v1h-3zM1196 792h3v1h-3zM1202 792h3v1h-3zM1208 792h3v1h-3zM1214 792h3v1h-3zM1220 792h3v1h-3zM1226 792h3v1h-3zM1232 792h3v1h-3zM1238 792h3v1h-3zM1244 792h3v1h-3zM1250 792h3v1h-3zM1256 792h3v1h-3zM1262 792h3v1h-3zM1268 792h3v1h-3zM1274 792h3v1h-3zM1280 792h3v1h-3zM1286 792h3v1h-3zM1292 792h3v1h-3zM1298 792h3v1h-3zM1304 792h3v1h-3zM1310 792h3v1h-3zM1316 792h3v1h-3zM1322 792h3v1h-3zM1328 792h3v1h-3zM1334 792h3v1h-3zM1340 792h3v1h-3zM1346 792h3v1h-3zM1352 792h3v1h-3zM1358 792h3v1h-3zM1364 792h3v1h-3zM1370 792h3v1h-3zM1376 792h3v1h-3zM1382 792h3v1h-3zM1388 792h3v1h-3zM1394 792h3v1h-3zM1400 792h3v1h-3zM1406 792h3v1h-3zM1412 792h3v1h-3zM1418 792h3v1h-3zM1424 792h3v1h-3zM1430 792h3v1h-3zM1436 792h3v1h-3zM1442 792h3v1h-3zM1448 792h3v1h-3zM1454 792h3v1h-3zM1460 792h3v1h-3zM1466 792h3v1h-3zM1472 792h3v1h-3zM1478 792h3v1h-3zM1484 792h3v1h-3zM1490 792h3v1h-3zM1496 792h3v1h-3zM1502 792h3v1h-3zM1508 792h3v1h-3zM1514 792h3v1h-3zM1520 792h3v1h-3zM1526 792h3v1h-3zM1532 792h3v1h-3zM1538 792h3v1h-3zM1544 792h3v1h-3zM1550 792h3v1h-3zM1556 792h3v1h-3zM1562 792h3v1h-3zM1568 792h3v1h-3zM1574 792h3v1h-3zM1580 792h3v1h-3zM1586 792h3v1h-3zM1592 792h3v1h-3zM1598 792h3v1h-3zM1604 792h3v1h-3zM1610 792h3v1h-3zM1616 792h3v1h-3zM1622 792h3v1h-3zM1628 792h3v1h-3zM1634 792h3v1h-3zM1640 792h3v1h-3zM1646 792h3v1h-3zM1652 792h3v1h-3zM37 792h7v1h-7zM50 822h3v1h-3zM56 822h3v1h-3zM62 822h3v1h-3zM68 822h3v1h-3zM74 822h3v1h-3zM80 822h3v1h-3zM86 822h3v1h-3zM92 822h3v1h-3zM98 822h3v1h-3zM104 822h3v1h-3zM110 822h3v1h-3zM116 822h3v1h-3zM122 822h3v1h-3zM128 822h3v1h-3zM134 822h3v1h-3zM140 822h3v1h-3zM146 822h3v1h-3zM152 822h3v1h-3zM158 822h3v1h-3zM164 822h3v1h-3zM170 822h3v1h-3zM176 822h3v1h-3zM182 822h3v1h-3zM188 822h3v1h-3zM194 822h3v1h-3zM200 822h3v1h-3zM206 822h3v1h-3zM212 822h3v1h-3zM218 822h3v1h-3zM224 822h3v1h-3zM230 822h3v1h-3zM236 822h3v1h-3zM242 822h3v1h-3zM248 822h3v1h-3zM254 822h3v1h-3zM260 822h3v1h-3zM266 822h3v1h-3zM272 822h3v1h-3zM278 822h3v1h-3zM284 822h3v1h-3zM290 822h3v1h-3zM296 822h3v1h-3zM302 822h3v1h-3zM308 822h3v1h-3zM314 822h3v1h-3zM320 822h3v1h-3zM326 822h3v1h-3zM332 822h3v1h-3zM338 822h3v1h-3zM344 822h3v1h-3zM350 822h3v1h-3zM356 822h3v1h-3zM362 822h3v1h-3zM368 822h3v1h-3zM374 822h3v1h-3zM380 822h3v1h-3zM386 822h3v1h-3zM392 822h3v1h-3zM398 822h3v1h-3zM404 822h3v1h-3zM410 822h3v1h-3zM416 822h3v1h-3zM422 822h3v1h-3zM428 822h3v1h-3zM434 822h3v1h-3zM440 822h3v1h-3zM446 822h3v1h-3zM452 822h3v1h-3zM458 822h3v1h-3zM464 822h3v1h-3zM470 822h3v1h-3zM476 822h3v1h-3zM482 822h3v1h-3zM488 822h3v1h-3zM494 822h3v1h-3zM500 822h3v1h-3zM506 822h3v1h-3zM512 822h3v1h-3zM518 822h3v1h-3zM524 822h3v1h-3zM530 822h3v1h-3zM536 822h3v1h-3zM542 822h3v1h-3zM548 822h3v1h-3zM554 822h3v1h-3zM560 822h3v1h-3zM566 822h3v1h-3zM572 822h3v1h-3zM578 822h3v1h-3zM584 822h3v1h-3zM590 822h3v1h-3zM596 822h3v1h-3zM602 822h3v1h-3zM608 822h3v1h-3zM614 822h3v1h-3zM620 822h3v1h-3zM626 822h3v1h-3zM632 822h3v1h-3zM638 822h3v1h-3zM644 822h3v1h-3zM650 822h3v1h-3zM656 822h3v1h-3zM662 822h3v1h-3zM668 822h3v1h-3zM674 822h3v1h-3zM680 822h3v1h-3zM686 822h3v1h-3zM692 822h3v1h-3zM698 822h3v1h-3zM704 822h3v1h-3zM710 822h3v1h-3zM716 822h3v1h-3zM722 822h3v1h-3zM728 822h3v1h-3zM734 822h3v1h-3zM740 822h3v1h-3zM746 822h3v1h-3zM752 822h3v1h-3zM758 822h3v1h-3zM764 822h3v1h-3zM770 822h3v1h-3zM776 822h3v1h-3zM782 822h3v1h-3zM788 822h3v1h-3zM794 822h3v1h-3zM800 822h3v1h-3zM806 822h3v1h-3zM812 822h3v1h-3zM818 822h3v1h-3zM824 822h3v1h-3zM830 822h3v1h-3zM836 822h3v1h-3zM842 822h3v1h-3zM848 822h3v1h-3zM854 822h3v1h-3zM860 822h3v1h-3zM866 822h3v1h-3zM872 822h3v1h-3zM878 822h3v1h-3zM884 822h3v1h-3zM890 822h3v1h-3zM896 822h3v1h-3zM902 822h3v1h-3zM908 822h3v1h-3zM914 822h3v1h-3zM920 822h3v1h-3zM926 822h3v1h-3zM932 822h3v1h-3zM938 822h3v1h-3zM944 822h3v1h-3zM950 822h3v1h-3zM956 822h3v1h-3zM962 822h3v1h-3zM968 822h3v1h-3zM974 822h3v1h-3zM980 822h3v1h-3zM986 822h3v1h-3zM992 822h3v1h-3zM998 822h3v1h-3zM1004 822h3v1h-3zM1010 822h3v1h-3zM1016 822h3v1h-3zM1022 822h3v1h-3zM1028 822h3v1h-3zM1034 822h3v1h-3zM1040 822h3v1h-3zM1046 822h3v1h-3zM1052 822h3v1h-3zM1058 822h3v1h-3zM1064 822h3v1h-3zM1070 822h3v1h-3zM1076 822h3v1h-3zM1082 822h3v1h-3zM1088 822h3v1h-3zM1094 822h3v1h-3zM1100 822h3v1h-3zM1106 822h3v1h-3zM1112 822h3v1h-3zM1118 822h3v1h-3zM1124 822h3v1h-3zM1130 822h3v1h-3zM1136 822h3v1h-3zM1142 822h3v1h-3zM1148 822h3v1h-3zM1154 822h3v1h-3zM1160 822h3v1h-3zM1166 822h3v1h-3zM1172 822h3v1h-3zM1178 822h3v1h-3zM1184 822h3v1h-3zM1190 822h3v1h-3zM1196 822h3v1h-3zM1202 822h3v1h-3zM1208 822h3v1h-3zM1214 822h3v1h-3zM1220 822h3v1h-3zM1226 822h3v1h-3zM1232 822h3v1h-3zM1238 822h3v1h-3zM1244 822h3v1h-3zM1250 822h3v1h-3zM1256 822h3v1h-3zM1262 822h3v1h-3zM1268 822h3v1h-3zM1274 822h3v1h-3zM1280 822h3v1h-3zM1286 822h3v1h-3zM1292 822h3v1h-3zM1298 822h3v1h-3zM1304 822h3v1h-3zM1310 822h3v1h-3zM1316 822h3v1h-3zM1322 822h3v1h-3zM1328 822h3v1h-3zM1334 822h3v1h-3zM1340 822h3v1h-3zM1346 822h3v1h-3zM1352 822h3v1h-3zM1358 822h3v1h-3zM1364 822h3v1h-3zM1370 822h3v1h-3zM1376 822h3v1h-3zM1382 822h3v1h-3zM1388 822h3v1h-3zM1394 822h3v1h-3zM1400 822h3v1h-3zM1406 822h3v1h-3zM1412 822h3v1h-3zM1418 822h3v1h-3zM1424 822h3v1h-3zM1430 822h3v1h-3zM1436 822h3v1h-3zM1442 822h3v1h-3zM1448 822h3v1h-3zM1454 822h3v1h-3zM1460 822h3v1h-3zM1466 822h3v1h-3zM1472 822h3v1h-3zM1478 822h3v1h-3zM1484 822h3v1h-3zM1490 822h3v1h-3zM1496 822h3v1h-3zM1502 822h3v1h-3zM1508 822h3v1h-3zM1514 822h3v1h-3zM1520 822h3v1h-3zM1526 822h3v1h-3zM1532 822h3v1h-3zM1538 822h3v1h-3zM1544 822h3v1h-3zM1550 822h3v1h-3zM1556 822h3v1h-3zM1562 822h3v1h-3zM1568 822h3v1h-3zM1574 822h3v1h-3zM1580 822h3v1h-3zM1586 822h3v1h-3zM1592 822h3v1h-3zM1598 822h3v1h-3zM1604 822h3v1h-3zM1610 822h3v1h-3zM1616 822h3v1h-3zM1622 822h3v1h-3zM1628 822h3v1h-3zM1634 822h3v1h-3zM1640 822h3v1h-3zM1646 822h3v1h-3zM1652 822h3v1h-3zM37 822h7v1h-7zM50 851h3v1h-3zM56 851h3v1h-3zM62 851h3v1h-3zM68 851h3v1h-3zM74 851h3v1h-3zM80 851h3v1h-3zM86 851h3v1h-3zM92 851h3v1h-3zM98 851h3v1h-3zM104 851h3v1h-3zM110 851h3v1h-3zM116 851h3v1h-3zM122 851h3v1h-3zM128 851h3v1h-3zM134 851h3v1h-3zM140 851h3v1h-3zM146 851h3v1h-3zM152 851h3v1h-3zM158 851h3v1h-3zM164 851h3v1h-3zM170 851h3v1h-3zM176 851h3v1h-3zM182 851h3v1h-3zM188 851h3v1h-3zM194 851h3v1h-3zM200 851h3v1h-3zM206 851h3v1h-3zM212 851h3v1h-3zM218 851h3v1h-3zM224 851h3v1h-3zM230 851h3v1h-3zM236 851h3v1h-3zM242 851h3v1h-3zM248 851h3v1h-3zM254 851h3v1h-3zM260 851h3v1h-3zM266 851h3v1h-3zM272 851h3v1h-3zM278 851h3v1h-3zM284 851h3v1h-3zM290 851h3v1h-3zM296 851h3v1h-3zM302 851h3v1h-3zM308 851h3v1h-3zM314 851h3v1h-3zM320 851h3v1h-3zM326 851h3v1h-3zM332 851h3v1h-3zM338 851h3v1h-3zM344 851h3v1h-3zM350 851h3v1h-3zM356 851h3v1h-3zM362 851h3v1h-3zM368 851h3v1h-3zM374 851h3v1h-3zM380 851h3v1h-3zM386 851h3v1h-3zM392 851h3v1h-3zM398 851h3v1h-3zM404 851h3v1h-3zM410 851h3v1h-3zM416 851h3v1h-3zM422 851h3v1h-3zM428 851h3v1h-3zM434 851h3v1h-3zM440 851h3v1h-3zM446 851h3v1h-3zM452 851h3v1h-3zM458 851h3v1h-3zM464 851h3v1h-3zM470 851h3v1h-3zM476 851h3v1h-3zM482 851h3v1h-3zM488 851h3v1h-3zM494 851h3v1h-3zM500 851h3v1h-3zM506 851h3v1h-3zM512 851h3v1h-3zM518 851h3v1h-3zM524 851h3v1h-3zM530 851h3v1h-3zM536 851h3v1h-3zM542 851h3v1h-3zM548 851h3v1h-3zM554 851h3v1h-3zM560 851h3v1h-3zM566 851h3v1h-3zM572 851h3v1h-3zM578 851h3v1h-3zM584 851h3v1h-3zM590 851h3v1h-3zM596 851h3v1h-3zM602 851h3v1h-3zM608 851h3v1h-3zM614 851h3v1h-3zM620 851h3v1h-3zM626 851h3v1h-3zM632 851h3v1h-3zM638 851h3v1h-3zM644 851h3v1h-3zM650 851h3v1h-3zM656 851h3v1h-3zM662 851h3v1h-3zM668 851h3v1h-3zM674 851h3v1h-3zM680 851h3v1h-3zM686 851h3v1h-3zM692 851h3v1h-3zM698 851h3v1h-3zM704 851h3v1h-3zM710 851h3v1h-3zM716 851h3v1h-3zM722 851h3v1h-3zM728 851h3v1h-3zM734 851h3v1h-3zM740 851h3v1h-3zM746 851h3v1h-3zM752 851h3v1h-3zM758 851h3v1h-3zM764 851h3v1h-3zM770 851h3v1h-3zM776 851h3v1h-3zM782 851h3v1h-3zM788 851h3v1h-3zM794 851h3v1h-3zM800 851h3v1h-3zM806 851h3v1h-3zM812 851h3v1h-3zM818 851h3v1h-3zM824 851h3v1h-3zM830 851h3v1h-3zM836 851h3v1h-3zM842 851h3v1h-3zM848 851h3v1h-3zM854 851h3v1h-3zM860 851h3v1h-3zM866 851h3v1h-3zM872 851h3v1h-3zM878 851h3v1h-3zM884 851h3v1h-3zM890 851h3v1h-3zM896 851h3v1h-3zM902 851h3v1h-3zM908 851h3v1h-3zM914 851h3v1h-3zM920 851h3v1h-3zM926 851h3v1h-3zM932 851h3v1h-3zM938 851h3v1h-3zM944 851h3v1h-3zM950 851h3v1h-3zM956 851h3v1h-3zM962 851h3v1h-3zM968 851h3v1h-3zM974 851h3v1h-3zM980 851h3v1h-3zM986 851h3v1h-3zM992 851h3v1h-3zM998 851h3v1h-3zM1004 851h3v1h-3zM1010 851h3v1h-3zM1016 851h3v1h-3zM1022 851h3v1h-3zM1028 851h3v1h-3zM1034 851h3v1h-3zM1040 851h3v1h-3zM1046 851h3v1h-3zM1052 851h3v1h-3zM1058 851h3v1h-3zM1064 851h3v1h-3zM1070 851h3v1h-3zM1076 851h3v1h-3zM1082 851h3v1h-3zM1088 851h3v1h-3zM1094 851h3v1h-3zM1100 851h3v1h-3zM1106 851h3v1h-3zM1112 851h3v1h-3zM1118 851h3v1h-3zM1124 851h3v1h-3zM1130 851h3v1h-3zM1136 851h3v1h-3zM1142 851h3v1h-3zM1148 851h3v1h-3zM1154 851h3v1h-3zM1160 851h3v1h-3zM1166 851h3v1h-3zM1172 851h3v1h-3zM1178 851h3v1h-3zM1184 851h3v1h-3zM1190 851h3v1h-3zM1196 851h3v1h-3zM1202 851h3v1h-3zM1208 851h3v1h-3zM1214 851h3v1h-3zM1220 851h3v1h-3zM1226 851h3v1h-3zM1232 851h3v1h-3zM1238 851h3v1h-3zM1244 851h3v1h-3zM1250 851h3v1h-3zM1256 851h3v1h-3zM1262 851h3v1h-3zM1268 851h3v1h-3zM1274 851h3v1h-3zM1280 851h3v1h-3zM1286 851h3v1h-3zM1292 851h3v1h-3zM1298 851h3v1h-3zM1304 851h3v1h-3zM1310 851h3v1h-3zM1316 851h3v1h-3zM1322 851h3v1h-3zM1328 851h3v1h-3zM1334 851h3v1h-3zM1340 851h3v1h-3zM1346 851h3v1h-3zM1352 851h3v1h-3zM1358 851h3v1h-3zM1364 851h3v1h-3zM1370 851h3v1h-3zM1376 851h3v1h-3zM1382 851h3v1h-3zM1388 851h3v1h-3zM1394 851h3v1h-3zM1400 851h3v1h-3zM1406 851h3v1h-3zM1412 851h3v1h-3zM1418 851h3v1h-3zM1424 851h3v1h-3zM1430 851h3v1h-3zM1436 851h3v1h-3zM1442 851h3v1h-3zM1448 851h3v1h-3zM1454 851h3v1h-3zM1460 851h3v1h-3zM1466 851h3v1h-3zM1472 851h3v1h-3zM1478 851h3v1h-3zM1484 851h3v1h-3zM1490 851h3v1h-3zM1496 851h3v1h-3zM1502 851h3v1h-3zM1508 851h3v1h-3zM1514 851h3v1h-3zM1520 851h3v1h-3zM1526 851h3v1h-3zM1532 851h3v1h-3zM1538 851h3v1h-3zM1544 851h3v1h-3zM1550 851h3v1h-3zM1556 851h3v1h-3zM1562 851h3v1h-3zM1568 851h3v1h-3zM1574 851h3v1h-3zM1580 851h3v1h-3zM1586 851h3v1h-3zM1592 851h3v1h-3zM1598 851h3v1h-3zM1604 851h3v1h-3zM1610 851h3v1h-3zM1616 851h3v1h-3zM1622 851h3v1h-3zM1628 851h3v1h-3zM1634 851h3v1h-3zM1640 851h3v1h-3zM1646 851h3v1h-3zM1652 851h3v1h-3zM37 851h7v1h-7zM50 880h3v1h-3zM56 880h3v1h-3zM62 880h3v1h-3zM68 880h3v1h-3zM74 880h3v1h-3zM80 880h3v1h-3zM86 880h3v1h-3zM92 880h3v1h-3zM98 880h3v1h-3zM104 880h3v1h-3zM110 880h3v1h-3zM116 880h3v1h-3zM122 880h3v1h-3zM128 880h3v1h-3zM134 880h3v1h-3zM140 880h3v1h-3zM146 880h3v1h-3zM152 880h3v1h-3zM158 880h3v1h-3zM164 880h3v1h-3zM170 880h3v1h-3zM176 880h3v1h-3zM182 880h3v1h-3zM188 880h3v1h-3zM194 880h3v1h-3zM200 880h3v1h-3zM206 880h3v1h-3zM212 880h3v1h-3zM218 880h3v1h-3zM224 880h3v1h-3zM230 880h3v1h-3zM236 880h3v1h-3zM242 880h3v1h-3zM248 880h3v1h-3zM254 880h3v1h-3zM260 880h3v1h-3zM266 880h3v1h-3zM272 880h3v1h-3zM278 880h3v1h-3zM284 880h3v1h-3zM290 880h3v1h-3zM296 880h3v1h-3zM302 880h3v1h-3zM308 880h3v1h-3zM314 880h3v1h-3zM320 880h3v1h-3zM326 880h3v1h-3zM332 880h3v1h-3zM338 880h3v1h-3zM344 880h3v1h-3zM350 880h3v1h-3zM356 880h3v1h-3zM362 880h3v1h-3zM368 880h3v1h-3zM374 880h3v1h-3zM380 880h3v1h-3zM386 880h3v1h-3zM392 880h3v1h-3zM398 880h3v1h-3zM404 880h3v1h-3zM410 880h3v1h-3zM416 880h3v1h-3zM422 880h3v1h-3zM428 880h3v1h-3zM434 880h3v1h-3zM440 880h3v1h-3zM446 880h3v1h-3zM452 880h3v1h-3zM458 880h3v1h-3zM464 880h3v1h-3zM470 880h3v1h-3zM476 880h3v1h-3zM482 880h3v1h-3zM488 880h3v1h-3zM494 880h3v1h-3zM500 880h3v1h-3zM506 880h3v1h-3zM512 880h3v1h-3zM518 880h3v1h-3zM524 880h3v1h-3zM530 880h3v1h-3zM536 880h3v1h-3zM542 880h3v1h-3zM548 880h3v1h-3zM554 880h3v1h-3zM560 880h3v1h-3zM566 880h3v1h-3zM572 880h3v1h-3zM578 880h3v1h-3zM584 880h3v1h-3zM590 880h3v1h-3zM596 880h3v1h-3zM602 880h3v1h-3zM608 880h3v1h-3zM614 880h3v1h-3zM620 880h3v1h-3zM626 880h3v1h-3zM632 880h3v1h-3zM638 880h3v1h-3zM644 880h3v1h-3zM650 880h3v1h-3zM656 880h3v1h-3zM662 880h3v1h-3zM668 880h3v1h-3zM674 880h3v1h-3zM680 880h3v1h-3zM686 880h3v1h-3zM692 880h3v1h-3zM698 880h3v1h-3zM704 880h3v1h-3zM710 880h3v1h-3zM716 880h3v1h-3zM722 880h3v1h-3zM728 880h3v1h-3zM734 880h3v1h-3zM740 880h3v1h-3zM746 880h3v1h-3zM752 880h3v1h-3zM758 880h3v1h-3zM764 880h3v1h-3zM770 880h3v1h-3zM776 880h3v1h-3zM782 880h3v1h-3zM788 880h3v1h-3zM794 880h3v1h-3zM800 880h3v1h-3zM806 880h3v1h-3zM812 880h3v1h-3zM818 880h3v1h-3zM824 880h3v1h-3zM830 880h3v1h-3zM836 880h3v1h-3zM842 880h3v1h-3zM848 880h3v1h-3zM854 880h3v1h-3zM860 880h3v1h-3zM866 880h3v1h-3zM872 880h3v1h-3zM878 880h3v1h-3zM884 880h3v1h-3zM890 880h3v1h-3zM896 880h3v1h-3zM902 880h3v1h-3zM908 880h3v1h-3zM914 880h3v1h-3zM920 880h3v1h-3zM926 880h3v1h-3zM932 880h3v1h-3zM938 880h3v1h-3zM944 880h3v1h-3zM950 880h3v1h-3zM956 880h3v1h-3zM962 880h3v1h-3zM968 880h3v1h-3zM974 880h3v1h-3zM980 880h3v1h-3zM986 880h3v1h-3zM992 880h3v1h-3zM998 880h3v1h-3zM1004 880h3v1h-3zM1010 880h3v1h-3zM1016 880h3v1h-3zM1022 880h3v1h-3zM1028 880h3v1h-3zM1034 880h3v1h-3zM1040 880h3v1h-3zM1046 880h3v1h-3zM1052 880h3v1h-3zM1058 880h3v1h-3zM1064 880h3v1h-3zM1070 880h3v1h-3zM1076 880h3v1h-3zM1082 880h3v1h-3zM1088 880h3v1h-3zM1094 880h3v1h-3zM1100 880h3v1h-3zM1106 880h3v1h-3zM1112 880h3v1h-3zM1118 880h3v1h-3zM1124 880h3v1h-3zM1130 880h3v1h-3zM1136 880h3v1h-3zM1142 880h3v1h-3zM1148 880h3v1h-3zM1154 880h3v1h-3zM1160 880h3v1h-3zM1166 880h3v1h-3zM1172 880h3v1h-3zM1178 880h3v1h-3zM1184 880h3v1h-3zM1190 880h3v1h-3zM1196 880h3v1h-3zM1202 880h3v1h-3zM1208 880h3v1h-3zM1214 880h3v1h-3zM1220 880h3v1h-3zM1226 880h3v1h-3zM1232 880h3v1h-3zM1238 880h3v1h-3zM1244 880h3v1h-3zM1250 880h3v1h-3zM1256 880h3v1h-3zM1262 880h3v1h-3zM1268 880h3v1h-3zM1274 880h3v1h-3zM1280 880h3v1h-3zM1286 880h3v1h-3zM1292 880h3v1h-3zM1298 880h3v1h-3zM1304 880h3v1h-3zM1310 880h3v1h-3zM1316 880h3v1h-3zM1322 880h3v1h-3zM1328 880h3v1h-3zM1334 880h3v1h-3zM1340 880h3v1h-3zM1346 880h3v1h-3zM1352 880h3v1h-3zM1358 880h3v1h-3zM1364 880h3v1h-3zM1370 880h3v1h-3zM1376 880h3v1h-3zM1382 880h3v1h-3zM1388 880h3v1h-3zM1394 880h3v1h-3zM1400 880h3v1h-3zM1406 880h3v1h-3zM1412 880h3v1h-3zM1418 880h3v1h-3zM1424 880h3v1h-3zM1430 880h3v1h-3zM1436 880h3v1h-3zM1442 880h3v1h-3zM1448 880h3v1h-3zM1454 880h3v1h-3zM1460 880h3v1h-3zM1466 880h3v1h-3zM1472 880h3v1h-3zM1478 880h3v1h-3zM1484 880h3v1h-3zM1490 880h3v1h-3zM1496 880h3v1h-3zM1502 880h3v1h-3zM1508 880h3v1h-3zM1514 880h3v1h-3zM1520 880h3v1h-3zM1526 880h3v1h-3zM1532 880h3v1h-3zM1538 880h3v1h-3zM1544 880h3v1h-3zM1550 880h3v1h-3zM1556 880h3v1h-3zM1562 880h3v1h-3zM1568 880h3v1h-3zM1574 880h3v1h-3zM1580 880h3v1h-3zM1586 880h3v1h-3zM1592 880h3v1h-3zM1598 880h3v1h-3zM1604 880h3v1h-3zM1610 880h3v1h-3zM1616 880h3v1h-3zM1622 880h3v1h-3zM1628 880h3v1h-3zM1634 880h3v1h-3zM1640 880h3v1h-3zM1646 880h3v1h-3zM1652 880h3v1h-3zM37 880h7v1h-7zM50 909h3v1h-3zM56 909h3v1h-3zM62 909h3v1h-3zM68 909h3v1h-3zM74 909h3v1h-3zM80 909h3v1h-3zM86 909h3v1h-3zM92 909h3v1h-3zM98 909h3v1h-3zM104 909h3v1h-3zM110 909h3v1h-3zM116 909h3v1h-3zM122 909h3v1h-3zM128 909h3v1h-3zM134 909h3v1h-3zM140 909h3v1h-3zM146 909h3v1h-3zM152 909h3v1h-3zM158 909h3v1h-3zM164 909h3v1h-3zM170 909h3v1h-3zM176 909h3v1h-3zM182 909h3v1h-3zM188 909h3v1h-3zM194 909h3v1h-3zM200 909h3v1h-3zM206 909h3v1h-3zM212 909h3v1h-3zM218 909h3v1h-3zM224 909h3v1h-3zM230 909h3v1h-3zM236 909h3v1h-3zM242 909h3v1h-3zM248 909h3v1h-3zM254 909h3v1h-3zM260 909h3v1h-3zM266 909h3v1h-3zM272 909h3v1h-3zM278 909h3v1h-3zM284 909h3v1h-3zM290 909h3v1h-3zM296 909h3v1h-3zM302 909h3v1h-3zM308 909h3v1h-3zM314 909h3v1h-3zM320 909h3v1h-3zM326 909h3v1h-3zM332 909h3v1h-3zM338 909h3v1h-3zM344 909h3v1h-3zM350 909h3v1h-3zM356 909h3v1h-3zM362 909h3v1h-3zM368 909h3v1h-3zM374 909h3v1h-3zM380 909h3v1h-3zM386 909h3v1h-3zM392 909h3v1h-3zM398 909h3v1h-3zM404 909h3v1h-3zM410 909h3v1h-3zM416 909h3v1h-3zM422 909h3v1h-3zM428 909h3v1h-3zM434 909h3v1h-3zM440 909h3v1h-3zM446 909h3v1h-3zM452 909h3v1h-3zM458 909h3v1h-3zM464 909h3v1h-3zM470 909h3v1h-3zM476 909h3v1h-3zM482 909h3v1h-3zM488 909h3v1h-3zM494 909h3v1h-3zM500 909h3v1h-3zM506 909h3v1h-3zM512 909h3v1h-3zM518 909h3v1h-3zM524 909h3v1h-3zM530 909h3v1h-3zM536 909h3v1h-3zM542 909h3v1h-3zM548 909h3v1h-3zM554 909h3v1h-3zM560 909h3v1h-3zM566 909h3v1h-3zM572 909h3v1h-3zM578 909h3v1h-3zM584 909h3v1h-3zM590 909h3v1h-3zM596 909h3v1h-3zM602 909h3v1h-3zM608 909h3v1h-3zM614 909h3v1h-3zM620 909h3v1h-3zM626 909h3v1h-3zM632 909h3v1h-3zM638 909h3v1h-3zM644 909h3v1h-3zM650 909h3v1h-3zM656 909h3v1h-3zM662 909h3v1h-3zM668 909h3v1h-3zM674 909h3v1h-3zM680 909h3v1h-3zM686 909h3v1h-3zM692 909h3v1h-3zM698 909h3v1h-3zM704 909h3v1h-3zM710 909h3v1h-3zM716 909h3v1h-3zM722 909h3v1h-3zM728 909h3v1h-3zM734 909h3v1h-3zM740 909h3v1h-3zM746 909h3v1h-3zM752 909h3v1h-3zM758 909h3v1h-3zM764 909h3v1h-3zM770 909h3v1h-3zM776 909h3v1h-3zM782 909h3v1h-3zM788 909h3v1h-3zM794 909h3v1h-3zM800 909h3v1h-3zM806 909h3v1h-3zM812 909h3v1h-3zM818 909h3v1h-3zM824 909h3v1h-3zM830 909h3v1h-3zM836 909h3v1h-3zM842 909h3v1h-3zM848 909h3v1h-3zM854 909h3v1h-3zM860 909h3v1h-3zM866 909h3v1h-3zM872 909h3v1h-3zM878 909h3v1h-3zM884 909h3v1h-3zM890 909h3v1h-3zM896 909h3v1h-3zM902 909h3v1h-3zM908 909h3v1h-3zM914 909h3v1h-3zM920 909h3v1h-3zM926 909h3v1h-3zM932 909h3v1h-3zM938 909h3v1h-3zM944 909h3v1h-3zM950 909h3v1h-3zM956 909h3v1h-3zM962 909h3v1h-3zM968 909h3v1h-3zM974 909h3v1h-3zM980 909h3v1h-3zM986 909h3v1h-3zM992 909h3v1h-3zM998 909h3v1h-3zM1004 909h3v1h-3zM1010 909h3v1h-3zM1016 909h3v1h-3zM1022 909h3v1h-3zM1028 909h3v1h-3zM1034 909h3v1h-3zM1040 909h3v1h-3zM1046 909h3v1h-3zM1052 909h3v1h-3zM1058 909h3v1h-3zM1064 909h3v1h-3zM1070 909h3v1h-3zM1076 909h3v1h-3zM1082 909h3v1h-3zM1088 909h3v1h-3zM1094 909h3v1h-3zM1100 909h3v1h-3zM1106 909h3v1h-3zM1112 909h3v1h-3zM1118 909h3v1h-3zM1124 909h3v1h-3zM1130 909h3v1h-3zM1136 909h3v1h-3zM1142 909h3v1h-3zM1148 909h3v1h-3zM1154 909h3v1h-3zM1160 909h3v1h-3zM1166 909h3v1h-3zM1172 909h3v1h-3zM1178 909h3v1h-3zM1184 909h3v1h-3zM1190 909h3v1h-3zM1196 909h3v1h-3zM1202 909h3v1h-3zM1208 909h3v1h-3zM1214 909h3v1h-3zM1220 909h3v1h-3zM1226 909h3v1h-3zM1232 909h3v1h-3zM1238 909h3v1h-3zM1244 909h3v1h-3zM1250 909h3v1h-3zM1256 909h3v1h-3zM1262 909h3v1h-3zM1268 909h3v1h-3zM1274 909h3v1h-3zM1280 909h3v1h-3zM1286 909h3v1h-3zM1292 909h3v1h-3zM1298 909h3v1h-3zM1304 909h3v1h-3zM1310 909h3v1h-3zM1316 909h3v1h-3zM1322 909h3v1h-3zM1328 909h3v1h-3zM1334 909h3v1h-3zM1340 909h3v1h-3zM1346 909h3v1h-3zM1352 909h3v1h-3zM1358 909h3v1h-3zM1364 909h3v1h-3zM1370 909h3v1h-3zM1376 909h3v1h-3zM1382 909h3v1h-3zM1388 909h3v1h-3zM1394 909h3v1h-3zM1400 909h3v1h-3zM1406 909h3v1h-3zM1412 909h3v1h-3zM1418 909h3v1h-3zM1424 909h3v1h-3zM1430 909h3v1h-3zM1436 909h3v1h-3zM1442 909h3v1h-3zM1448 909h3v1h-3zM1454 909h3v1h-3zM1460 909h3v1h-3zM1466 909h3v1h-3zM1472 909h3v1h-3zM1478 909h3v1h-3zM1484 909h3v1h-3zM1490 909h3v1h-3zM1496 909h3v1h-3zM1502 909h3v1h-3zM1508 909h3v1h-3zM1514 909h3v1h-3zM1520 909h3v1h-3zM1526 909h3v1h-3zM1532 909h3v1h-3zM1538 909h3v1h-3zM1544 909h3v1h-3zM1550 909h3v1h-3zM1556 909h3v1h-3zM1562 909h3v1h-3zM1568 909h3v1h-3zM1574 909h3v1h-3zM1580 909h3v1h-3zM1586 909h3v1h-3zM1592 909h3v1h-3zM1598 909h3v1h-3zM1604 909h3v1h-3zM1610 909h3v1h-3zM1616 909h3v1h-3zM1622 909h3v1h-3zM1628 909h3v1h-3zM1634 909h3v1h-3zM1640 909h3v1h-3zM1646 909h3v1h-3zM1652 909h3v1h-3zM37 909h7v1h-7zM50 939h3v1h-3zM56 939h3v1h-3zM62 939h3v1h-3zM68 939h3v1h-3zM74 939h3v1h-3zM80 939h3v1h-3zM86 939h3v1h-3zM92 939h3v1h-3zM98 939h3v1h-3zM104 939h3v1h-3zM110 939h3v1h-3zM116 939h3v1h-3zM122 939h3v1h-3zM128 939h3v1h-3zM134 939h3v1h-3zM140 939h3v1h-3zM146 939h3v1h-3zM152 939h3v1h-3zM158 939h3v1h-3zM164 939h3v1h-3zM170 939h3v1h-3zM176 939h3v1h-3zM182 939h3v1h-3zM188 939h3v1h-3zM194 939h3v1h-3zM200 939h3v1h-3zM206 939h3v1h-3zM212 939h3v1h-3zM218 939h3v1h-3zM224 939h3v1h-3zM230 939h3v1h-3zM236 939h3v1h-3zM242 939h3v1h-3zM248 939h3v1h-3zM254 939h3v1h-3zM260 939h3v1h-3zM266 939h3v1h-3zM272 939h3v1h-3zM278 939h3v1h-3zM284 939h3v1h-3zM290 939h3v1h-3zM296 939h3v1h-3zM302 939h3v1h-3zM308 939h3v1h-3zM314 939h3v1h-3zM320 939h3v1h-3zM326 939h3v1h-3zM332 939h3v1h-3zM338 939h3v1h-3zM344 939h3v1h-3zM350 939h3v1h-3zM356 939h3v1h-3zM362 939h3v1h-3zM368 939h3v1h-3zM374 939h3v1h-3zM380 939h3v1h-3zM386 939h3v1h-3zM392 939h3v1h-3zM398 939h3v1h-3zM404 939h3v1h-3zM410 939h3v1h-3zM416 939h3v1h-3zM422 939h3v1h-3zM428 939h3v1h-3zM434 939h3v1h-3zM440 939h3v1h-3zM446 939h3v1h-3zM452 939h3v1h-3zM458 939h3v1h-3zM464 939h3v1h-3zM470 939h3v1h-3zM476 939h3v1h-3zM482 939h3v1h-3zM488 939h3v1h-3zM494 939h3v1h-3zM500 939h3v1h-3zM506 939h3v1h-3zM512 939h3v1h-3zM518 939h3v1h-3zM524 939h3v1h-3zM530 939h3v1h-3zM536 939h3v1h-3zM542 939h3v1h-3zM548 939h3v1h-3zM554 939h3v1h-3zM560 939h3v1h-3zM566 939h3v1h-3zM572 939h3v1h-3zM578 939h3v1h-3zM584 939h3v1h-3zM590 939h3v1h-3zM596 939h3v1h-3zM602 939h3v1h-3zM608 939h3v1h-3zM614 939h3v1h-3zM620 939h3v1h-3zM626 939h3v1h-3zM632 939h3v1h-3zM638 939h3v1h-3zM644 939h3v1h-3zM650 939h3v1h-3zM656 939h3v1h-3zM662 939h3v1h-3zM668 939h3v1h-3zM674 939h3v1h-3zM680 939h3v1h-3zM686 939h3v1h-3zM692 939h3v1h-3zM698 939h3v1h-3zM704 939h3v1h-3zM710 939h3v1h-3zM716 939h3v1h-3zM722 939h3v1h-3zM728 939h3v1h-3zM734 939h3v1h-3zM740 939h3v1h-3zM746 939h3v1h-3zM752 939h3v1h-3zM758 939h3v1h-3zM764 939h3v1h-3zM770 939h3v1h-3zM776 939h3v1h-3zM782 939h3v1h-3zM788 939h3v1h-3zM794 939h3v1h-3zM800 939h3v1h-3zM806 939h3v1h-3zM812 939h3v1h-3zM818 939h3v1h-3zM824 939h3v1h-3zM830 939h3v1h-3zM836 939h3v1h-3zM842 939h3v1h-3zM848 939h3v1h-3zM854 939h3v1h-3zM860 939h3v1h-3zM866 939h3v1h-3zM872 939h3v1h-3zM878 939h3v1h-3zM884 939h3v1h-3zM890 939h3v1h-3zM896 939h3v1h-3zM902 939h3v1h-3zM908 939h3v1h-3zM914 939h3v1h-3zM920 939h3v1h-3zM926 939h3v1h-3zM932 939h3v1h-3zM938 939h3v1h-3zM944 939h3v1h-3zM950 939h3v1h-3zM956 939h3v1h-3zM962 939h3v1h-3zM968 939h3v1h-3zM974 939h3v1h-3zM980 939h3v1h-3zM986 939h3v1h-3zM992 939h3v1h-3zM998 939h3v1h-3zM1004 939h3v1h-3zM1010 939h3v1h-3zM1016 939h3v1h-3zM1022 939h3v1h-3zM1028 939h3v1h-3zM1034 939h3v1h-3zM1040 939h3v1h-3zM1046 939h3v1h-3zM1052 939h3v1h-3zM1058 939h3v1h-3zM1064 939h3v1h-3zM1070 939h3v1h-3zM1076 939h3v1h-3zM1082 939h3v1h-3zM1088 939h3v1h-3zM1094 939h3v1h-3zM1100 939h3v1h-3zM1106 939h3v1h-3zM1112 939h3v1h-3zM1118 939h3v1h-3zM1124 939h3v1h-3zM1130 939h3v1h-3zM1136 939h3v1h-3zM1142 939h3v1h-3zM1148 939h3v1h-3zM1154 939h3v1h-3zM1160 939h3v1h-3zM1166 939h3v1h-3zM1172 939h3v1h-3zM1178 939h3v1h-3zM1184 939h3v1h-3zM1190 939h3v1h-3zM1196 939h3v1h-3zM1202 939h3v1h-3zM1208 939h3v1h-3zM1214 939h3v1h-3zM1220 939h3v1h-3zM1226 939h3v1h-3zM1232 939h3v1h-3zM1238 939h3v1h-3zM1244 939h3v1h-3zM1250 939h3v1h-3zM1256 939h3v1h-3zM1262 939h3v1h-3zM1268 939h3v1h-3zM1274 939h3v1h-3zM1280 939h3v1h-3zM1286 939h3v1h-3zM1292 939h3v1h-3zM1298 939h3v1h-3zM1304 939h3v1h-3zM1310 939h3v1h-3zM1316 939h3v1h-3zM1322 939h3v1h-3zM1328 939h3v1h-3zM1334 939h3v1h-3zM1340 939h3v1h-3zM1346 939h3v1h-3zM1352 939h3v1h-3zM1358 939h3v1h-3zM1364 939h3v1h-3zM1370 939h3v1h-3zM1376 939h3v1h-3zM1382 939h3v1h-3zM1388 939h3v1h-3zM1394 939h3v1h-3zM1400 939h3v1h-3zM1406 939h3v1h-3zM1412 939h3v1h-3zM1418 939h3v1h-3zM1424 939h3v1h-3zM1430 939h3v1h-3zM1436 939h3v1h-3zM1442 939h3v1h-3zM1448 939h3v1h-3zM1454 939h3v1h-3zM1460 939h3v1h-3zM1466 939h3v1h-3zM1472 939h3v1h-3zM1478 939h3v1h-3zM1484 939h3v1h-3zM1490 939h3v1h-3zM1496 939h3v1h-3zM1502 939h3v1h-3zM1508 939h3v1h-3zM1514 939h3v1h-3zM1520 939h3v1h-3zM1526 939h3v1h-3zM1532 939h3v1h-3zM1538 939h3v1h-3zM1544 939h3v1h-3zM1550 939h3v1h-3zM1556 939h3v1h-3zM1562 939h3v1h-3zM1568 939h3v1h-3zM1574 939h3v1h-3zM1580 939h3v1h-3zM1586 939h3v1h-3zM1592 939h3v1h-3zM1598 939h3v1h-3zM1604 939h3v1h-3zM1610 939h3v1h-3zM1616 939h3v1h-3zM1622 939h3v1h-3zM1628 939h3v1h-3zM1634 939h3v1h-3zM1640 939h3v1h-3zM1646 939h3v1h-3zM1652 939h3v1h-3zM37 939h7v1h-7zM50 968h3v1h-3zM56 968h3v1h-3zM62 968h3v1h-3zM68 968h3v1h-3zM74 968h3v1h-3zM80 968h3v1h-3zM86 968h3v1h-3zM92 968h3v1h-3zM98 968h3v1h-3zM104 968h3v1h-3zM110 968h3v1h-3zM116 968h3v1h-3zM122 968h3v1h-3zM128 968h3v1h-3zM134 968h3v1h-3zM140 968h3v1h-3zM146 968h3v1h-3zM152 968h3v1h-3zM158 968h3v1h-3zM164 968h3v1h-3zM170 968h3v1h-3zM176 968h3v1h-3zM182 968h3v1h-3zM188 968h3v1h-3zM194 968h3v1h-3zM200 968h3v1h-3zM206 968h3v1h-3zM212 968h3v1h-3zM218 968h3v1h-3zM224 968h3v1h-3zM230 968h3v1h-3zM236 968h3v1h-3zM242 968h3v1h-3zM248 968h3v1h-3zM254 968h3v1h-3zM260 968h3v1h-3zM266 968h3v1h-3zM272 968h3v1h-3zM278 968h3v1h-3zM284 968h3v1h-3zM290 968h3v1h-3zM296 968h3v1h-3zM302 968h3v1h-3zM308 968h3v1h-3zM314 968h3v1h-3zM320 968h3v1h-3zM326 968h3v1h-3zM332 968h3v1h-3zM338 968h3v1h-3zM344 968h3v1h-3zM350 968h3v1h-3zM356 968h3v1h-3zM362 968h3v1h-3zM368 968h3v1h-3zM374 968h3v1h-3zM380 968h3v1h-3zM386 968h3v1h-3zM392 968h3v1h-3zM398 968h3v1h-3zM404 968h3v1h-3zM410 968h3v1h-3zM416 968h3v1h-3zM422 968h3v1h-3zM428 968h3v1h-3zM434 968h3v1h-3zM440 968h3v1h-3zM446 968h3v1h-3zM452 968h3v1h-3zM458 968h3v1h-3zM464 968h3v1h-3zM470 968h3v1h-3zM476 968h3v1h-3zM482 968h3v1h-3zM488 968h3v1h-3zM494 968h3v1h-3zM500 968h3v1h-3zM506 968h3v1h-3zM512 968h3v1h-3zM518 968h3v1h-3zM524 968h3v1h-3zM530 968h3v1h-3zM536 968h3v1h-3zM542 968h3v1h-3zM548 968h3v1h-3zM554 968h3v1h-3zM560 968h3v1h-3zM566 968h3v1h-3zM572 968h3v1h-3zM578 968h3v1h-3zM584 968h3v1h-3zM590 968h3v1h-3zM596 968h3v1h-3zM602 968h3v1h-3zM608 968h3v1h-3zM614 968h3v1h-3zM620 968h3v1h-3zM626 968h3v1h-3zM632 968h3v1h-3zM638 968h3v1h-3zM644 968h3v1h-3zM650 968h3v1h-3zM656 968h3v1h-3zM662 968h3v1h-3zM668 968h3v1h-3zM674 968h3v1h-3zM680 968h3v1h-3zM686 968h3v1h-3zM692 968h3v1h-3zM698 968h3v1h-3zM704 968h3v1h-3zM710 968h3v1h-3zM716 968h3v1h-3zM722 968h3v1h-3zM728 968h3v1h-3zM734 968h3v1h-3zM740 968h3v1h-3zM746 968h3v1h-3zM752 968h3v1h-3zM758 968h3v1h-3zM764 968h3v1h-3zM770 968h3v1h-3zM776 968h3v1h-3zM782 968h3v1h-3zM788 968h3v1h-3zM794 968h3v1h-3zM800 968h3v1h-3zM806 968h3v1h-3zM812 968h3v1h-3zM818 968h3v1h-3zM824 968h3v1h-3zM830 968h3v1h-3zM836 968h3v1h-3zM842 968h3v1h-3zM848 968h3v1h-3zM854 968h3v1h-3zM860 968h3v1h-3zM866 968h3v1h-3zM872 968h3v1h-3zM878 968h3v1h-3zM884 968h3v1h-3zM890 968h3v1h-3zM896 968h3v1h-3zM902 968h3v1h-3zM908 968h3v1h-3zM914 968h3v1h-3zM920 968h3v1h-3zM926 968h3v1h-3zM932 968h3v1h-3zM938 968h3v1h-3zM944 968h3v1h-3zM950 968h3v1h-3zM956 968h3v1h-3zM962 968h3v1h-3zM968 968h3v1h-3zM974 968h3v1h-3zM980 968h3v1h-3zM986 968h3v1h-3zM992 968h3v1h-3zM998 968h3v1h-3zM1004 968h3v1h-3zM1010 968h3v1h-3zM1016 968h3v1h-3zM1022 968h3v1h-3zM1028 968h3v1h-3zM1034 968h3v1h-3zM1040 968h3v1h-3zM1046 968h3v1h-3zM1052 968h3v1h-3zM1058 968h3v1h-3zM1064 968h3v1h-3zM1070 968h3v1h-3zM1076 968h3v1h-3zM1082 968h3v1h-3zM1088 968h3v1h-3zM1094 968h3v1h-3zM1100 968h3v1h-3zM1106 968h3v1h-3zM1112 968h3v1h-3zM1118 968h3v1h-3zM1124 968h3v1h-3zM1130 968h3v1h-3zM1136 968h3v1h-3zM1142 968h3v1h-3zM1148 968h3v1h-3zM1154 968h3v1h-3zM1160 968h3v1h-3zM1166 968h3v1h-3zM1172 968h3v1h-3zM1178 968h3v1h-3zM1184 968h3v1h-3zM1190 968h3v1h-3zM1196 968h3v1h-3zM1202 968h3v1h-3zM1208 968h3v1h-3zM1214 968h3v1h-3zM1220 968h3v1h-3zM1226 968h3v1h-3zM1232 968h3v1h-3zM1238 968h3v1h-3zM1244 968h3v1h-3zM1250 968h3v1h-3zM1256 968h3v1h-3zM1262 968h3v1h-3zM1268 968h3v1h-3zM1274 968h3v1h-3zM1280 968h3v1h-3zM1286 968h3v1h-3zM1292 968h3v1h-3zM1298 968h3v1h-3zM1304 968h3v1h-3zM1310 968h3v1h-3zM1316 968h3v1h-3zM1322 968h3v1h-3zM1328 968h3v1h-3zM1334 968h3v1h-3zM1340 968h3v1h-3zM1346 968h3v1h-3zM1352 968h3v1h-3zM1358 968h3v1h-3zM1364 968h3v1h-3zM1370 968h3v1h-3zM1376 968h3v1h-3zM1382 968h3v1h-3zM1388 968h3v1h-3zM1394 968h3v1h-3zM1400 968h3v1h-3zM1406 968h3v1h-3zM1412 968h3v1h-3zM1418 968h3v1h-3zM1424 968h3v1h-3zM1430 968h3v1h-3zM1436 968h3v1h-3zM1442 968h3v1h-3zM1448 968h3v1h-3zM1454 968h3v1h-3zM1460 968h3v1h-3zM1466 968h3v1h-3zM1472 968h3v1h-3zM1478 968h3v1h-3zM1484 968h3v1h-3zM1490 968h3v1h-3zM1496 968h3v1h-3zM1502 968h3v1h-3zM1508 968h3v1h-3zM1514 968h3v1h-3zM1520 968h3v1h-3zM1526 968h3v1h-3zM1532 968h3v1h-3zM1538 968h3v1h-3zM1544 968h3v1h-3zM1550 968h3v1h-3zM1556 968h3v1h-3zM1562 968h3v1h-3zM1568 968h3v1h-3zM1574 968h3v1h-3zM1580 968h3v1h-3zM1586 968h3v1h-3zM1592 968h3v1h-3zM1598 968h3v1h-3zM1604 968h3v1h-3zM1610 968h3v1h-3zM1616 968h3v1h-3zM1622 968h3v1h-3zM1628 968h3v1h-3zM1634 968h3v1h-3zM1640 968h3v1h-3zM1646 968h3v1h-3zM1652 968h3v1h-3zM37 968h7v1h-7zM37 617h7v1h-7z M37 997h7v1h-7zM205 617h1v3h-1zM205 623h1v3h-1zM205 629h1v3h-1zM205 635h1v3h-1zM205 641h1v3h-1zM205 647h1v3h-1zM205 653h1v3h-1zM205 659h1v3h-1zM205 665h1v3h-1zM205 671h1v3h-1zM205 677h1v3h-1zM205 683h1v3h-1zM205 689h1v3h-1zM205 695h1v3h-1zM205 701h1v3h-1zM205 707h1v3h-1zM205 713h1v3h-1zM205 719h1v3h-1zM205 725h1v3h-1zM205 731h1v3h-1zM205 737h1v3h-1zM205 743h1v3h-1zM205 749h1v3h-1zM205 755h1v3h-1zM205 761h1v3h-1zM205 767h1v3h-1zM205 773h1v3h-1zM205 779h1v3h-1zM205 785h1v3h-1zM205 791h1v3h-1zM205 797h1v3h-1zM205 803h1v3h-1zM205 809h1v3h-1zM205 815h1v3h-1zM205 821h1v3h-1zM205 827h1v3h-1zM205 833h1v3h-1zM205 839h1v3h-1zM205 845h1v3h-1zM205 851h1v3h-1zM205 857h1v3h-1zM205 863h1v3h-1zM205 869h1v3h-1zM205 875h1v3h-1zM205 881h1v3h-1zM205 887h1v3h-1zM205 893h1v3h-1zM205 899h1v3h-1zM205 905h1v3h-1zM205 911h1v3h-1zM205 917h1v3h-1zM205 923h1v3h-1zM205 929h1v3h-1zM205 935h1v3h-1zM205 941h1v3h-1zM205 947h1v3h-1zM205 953h1v3h-1zM205 959h1v3h-1zM205 965h1v3h-1zM205 971h1v3h-1zM205 977h1v3h-1zM205 983h1v3h-1zM205 989h1v3h-1zM205 995h1v3h-1zM205 997h1v8h-1zM366 617h1v3h-1zM366 623h1v3h-1zM366 629h1v3h-1zM366 635h1v3h-1zM366 641h1v3h-1zM366 647h1v3h-1zM366 653h1v3h-1zM366 659h1v3h-1zM366 665h1v3h-1zM366 671h1v3h-1zM366 677h1v3h-1zM366 683h1v3h-1zM366 689h1v3h-1zM366 695h1v3h-1zM366 701h1v3h-1zM366 707h1v3h-1zM366 713h1v3h-1zM366 719h1v3h-1zM366 725h1v3h-1zM366 731h1v3h-1zM366 737h1v3h-1zM366 743h1v3h-1zM366 749h1v3h-1zM366 755h1v3h-1zM366 761h1v3h-1zM366 767h1v3h-1zM366 773h1v3h-1zM366 779h1v3h-1zM366 785h1v3h-1zM366 791h1v3h-1zM366 797h1v3h-1zM366 803h1v3h-1zM366 809h1v3h-1zM366 815h1v3h-1zM366 821h1v3h-1zM366 827h1v3h-1zM366 833h1v3h-1zM366 839h1v3h-1zM366 845h1v3h-1zM366 851h1v3h-1zM366 857h1v3h-1zM366 863h1v3h-1zM366 869h1v3h-1zM366 875h1v3h-1zM366 881h1v3h-1zM366 887h1v3h-1zM366 893h1v3h-1zM366 899h1v3h-1zM366 905h1v3h-1zM366 911h1v3h-1zM366 917h1v3h-1zM366 923h1v3h-1zM366 929h1v3h-1zM366 935h1v3h-1zM366 941h1v3h-1zM366 947h1v3h-1zM366 953h1v3h-1zM366 959h1v3h-1zM366 965h1v3h-1zM366 971h1v3h-1zM366 977h1v3h-1zM366 983h1v3h-1zM366 989h1v3h-1zM366 995h1v3h-1zM366 997h1v8h-1zM527 617h1v3h-1zM527 623h1v3h-1zM527 629h1v3h-1zM527 635h1v3h-1zM527 641h1v3h-1zM527 647h1v3h-1zM527 653h1v3h-1zM527 659h1v3h-1zM527 665h1v3h-1zM527 671h1v3h-1zM527 677h1v3h-1zM527 683h1v3h-1zM527 689h1v3h-1zM527 695h1v3h-1zM527 701h1v3h-1zM527 707h1v3h-1zM527 713h1v3h-1zM527 719h1v3h-1zM527 725h1v3h-1zM527 731h1v3h-1zM527 737h1v3h-1zM527 743h1v3h-1zM527 749h1v3h-1zM527 755h1v3h-1zM527 761h1v3h-1zM527 767h1v3h-1zM527 773h1v3h-1zM527 779h1v3h-1zM527 785h1v3h-1zM527 791h1v3h-1zM527 797h1v3h-1zM527 803h1v3h-1zM527 809h1v3h-1zM527 815h1v3h-1zM527 821h1v3h-1zM527 827h1v3h-1zM527 833h1v3h-1zM527 839h1v3h-1zM527 845h1v3h-1zM527 851h1v3h-1zM527 857h1v3h-1zM527 863h1v3h-1zM527 869h1v3h-1zM527 875h1v3h-1zM527 881h1v3h-1zM527 887h1v3h-1zM527 893h1v3h-1zM527 899h1v3h-1zM527 905h1v3h-1zM527 911h1v3h-1zM527 917h1v3h-1zM527 923h1v3h-1zM527 929h1v3h-1zM527 935h1v3h-1zM527 941h1v3h-1zM527 947h1v3h-1zM527 953h1v3h-1zM527 959h1v3h-1zM527 965h1v3h-1zM527 971h1v3h-1zM527 977h1v3h-1zM527 983h1v3h-1zM527 989h1v3h-1zM527 995h1v3h-1zM527 997h1v8h-1zM688 617h1v3h-1zM688 623h1v3h-1zM688 629h1v3h-1zM688 635h1v3h-1zM688 641h1v3h-1zM688 647h1v3h-1zM688 653h1v3h-1zM688 659h1v3h-1zM688 665h1v3h-1zM688 671h1v3h-1zM688 677h1v3h-1zM688 683h1v3h-1zM688 689h1v3h-1zM688 695h1v3h-1zM688 701h1v3h-1zM688 707h1v3h-1zM688 713h1v3h-1zM688 719h1v3h-1zM688 725h1v3h-1zM688 731h1v3h-1zM688 737h1v3h-1zM688 743h1v3h-1zM688 749h1v3h-1zM688 755h1v3h-1zM688 761h1v3h-1zM688 767h1v3h-1zM688 773h1v3h-1zM688 779h1v3h-1zM688 785h1v3h-1zM688 791h1v3h-1zM688 797h1v3h-1zM688 803h1v3h-1zM688 809h1v3h-1zM688 815h1v3h-1zM688 821h1v3h-1zM688 827h1v3h-1zM688 833h1v3h-1zM688 839h1v3h-1zM688 845h1v3h-1zM688 851h1v3h-1zM688 857h1v3h-1zM688 863h1v3h-1zM688 869h1v3h-1zM688 875h1v3h-1zM688 881h1v3h-1zM688 887h1v3h-1zM688 893h1v3h-1zM688 899h1v3h-1zM688 905h1v3h-1zM688 911h1v3h-1zM688 917h1v3h-1zM688 923h1v3h-1zM688 929h1v3h-1zM688 935h1v3h-1zM688 941h1v3h-1zM688 947h1v3h-1zM688 953h1v3h-1zM688 959h1v3h-1zM688 965h1v3h-1zM688 971h1v3h-1zM688 977h1v3h-1zM688 983h1v3h-1zM688 989h1v3h-1zM688 995h1v3h-1zM688 997h1v8h-1zM849 617h1v3h-1zM849 623h1v3h-1zM849 629h1v3h-1zM849 635h1v3h-1zM849 641h1v3h-1zM849 647h1v3h-1zM849 653h1v3h-1zM849 659h1v3h-1zM849 665h1v3h-1zM849 671h1v3h-1zM849 677h1v3h-1zM849 683h1v3h-1zM849 689h1v3h-1zM849 695h1v3h-1zM849 701h1v3h-1zM849 707h1v3h-1zM849 713h1v3h-1zM849 719h1v3h-1zM849 725h1v3h-1zM849 731h1v3h-1zM849 737h1v3h-1zM849 743h1v3h-1zM849 749h1v3h-1zM849 755h1v3h-1zM849 761h1v3h-1zM849 767h1v3h-1zM849 773h1v3h-1zM849 779h1v3h-1zM849 785h1v3h-1zM849 791h1v3h-1zM849 797h1v3h-1zM849 803h1v3h-1zM849 809h1v3h-1zM849 815h1v3h-1zM849 821h1v3h-1zM849 827h1v3h-1zM849 833h1v3h-1zM849 839h1v3h-1zM849 845h1v3h-1zM849 851h1v3h-1zM849 857h1v3h-1zM849 863h1v3h-1zM849 869h1v3h-1zM849 875h1v3h-1zM849 881h1v3h-1zM849 887h1v3h-1zM849 893h1v3h-1zM849 899h1v3h-1zM849 905h1v3h-1zM849 911h1v3h-1zM849 917h1v3h-1zM849 923h1v3h-1zM849 929h1v3h-1zM849 935h1v3h-1zM849 941h1v3h-1zM849 947h1v3h-1zM849 953h1v3h-1zM849 959h1v3h-1zM849 965h1v3h-1zM849 971h1v3h-1zM849 977h1v3h-1zM849 983h1v3h-1zM849 989h1v3h-1zM849 995h1v3h-1zM849 997h1v8h-1zM1010 617h1v3h-1zM1010 623h1v3h-1zM1010 629h1v3h-1zM1010 635h1v3h-1zM1010 641h1v3h-1zM1010 647h1v3h-1zM1010 653h1v3h-1zM1010 659h1v3h-1zM1010 665h1v3h-1zM1010 671h1v3h-1zM1010 677h1v3h-1zM1010 683h1v3h-1zM1010 689h1v3h-1zM1010 695h1v3h-1zM1010 701h1v3h-1zM1010 707h1v3h-1zM1010 713h1v3h-1zM1010 719h1v3h-1zM1010 725h1v3h-1zM1010 731h1v3h-1zM1010 737h1v3h-1zM1010 743h1v3h-1zM1010 749h1v3h-1zM1010 755h1v3h-1zM1010 761h1v3h-1zM1010 767h1v3h-1zM1010 773h1v3h-1zM1010 779h1v3h-1zM1010 785h1v3h-1zM1010 791h1v3h-1zM1010 797h1v3h-1zM1010 803h1v3h-1zM1010 809h1v3h-1zM1010 815h1v3h-1zM1010 821h1v3h-1zM1010 827h1v3h-1zM1010 833h1v3h-1zM1010 839h1v3h-1zM1010 845h1v3h-1zM1010 851h1v3h-1zM1010 857h1v3h-1zM1010 863h1v3h-1zM1010 869h1v3h-1zM1010 875h1v3h-1zM1010 881h1v3h-1zM1010 887h1v3h-1zM1010 893h1v3h-1zM1010 899h1v3h-1zM1010 905h1v3h-1zM1010 911h1v3h-1zM1010 917h1v3h-1zM1010 923h1v3h-1zM1010 929h1v3h-1zM1010 935h1v3h-1zM1010 941h1v3h-1zM1010 947h1v3h-1zM1010 953h1v3h-1zM1010 959h1v3h-1zM1010 965h1v3h-1zM1010 971h1v3h-1zM1010 977h1v3h-1zM1010 983h1v3h-1zM1010 989h1v3h-1zM1010 995h1v3h-1zM1010 997h1v8h-1zM1171 617h1v3h-1zM1171 623h1v3h-1zM1171 629h1v3h-1zM1171 635h1v3h-1zM1171 641h1v3h-1zM1171 647h1v3h-1zM1171 653h1v3h-1zM1171 659h1v3h-1zM1171 665h1v3h-1zM1171 671h1v3h-1zM1171 677h1v3h-1zM1171 683h1v3h-1zM1171 689h1v3h-1zM1171 695h1v3h-1zM1171 701h1v3h-1zM1171 707h1v3h-1zM1171 713h1v3h-1zM1171 719h1v3h-1zM1171 725h1v3h-1zM1171 731h1v3h-1zM1171 737h1v3h-1zM1171 743h1v3h-1zM1171 749h1v3h-1zM1171 755h1v3h-1zM1171 761h1v3h-1zM1171 767h1v3h-1zM1171 773h1v3h-1zM1171 779h1v3h-1zM1171 785h1v3h-1zM1171 791h1v3h-1zM1171 797h1v3h-1zM1171 803h1v3h-1zM1171 809h1v3h-1zM1171 815h1v3h-1zM1171 821h1v3h-1zM1171 827h1v3h-1zM1171 833h1v3h-1zM1171 839h1v3h-1zM1171 845h1v3h-1zM1171 851h1v3h-1zM1171 857h1v3h-1zM1171 863h1v3h-1zM1171 869h1v3h-1zM1171 875h1v3h-1zM1171 881h1v3h-1zM1171 887h1v3h-1zM1171 893h1v3h-1zM1171 899h1v3h-1zM1171 905h1v3h-1zM1171 911h1v3h-1zM1171 917h1v3h-1zM1171 923h1v3h-1zM1171 929h1v3h-1zM1171 935h1v3h-1zM1171 941h1v3h-1zM1171 947h1v3h-1zM1171 953h1v3h-1zM1171 959h1v3h-1zM1171 965h1v3h-1zM1171 971h1v3h-1zM1171 977h1v3h-1zM1171 983h1v3h-1zM1171 989h1v3h-1zM1171 995h1v3h-1zM1171 997h1v8h-1zM1332 617h1v3h-1zM1332 623h1v3h-1zM1332 629h1v3h-1zM1332 635h1v3h-1zM1332 641h1v3h-1zM1332 647h1v3h-1zM1332 653h1v3h-1zM1332 659h1v3h-1zM1332 665h1v3h-1zM1332 671h1v3h-1zM1332 677h1v3h-1zM1332 683h1v3h-1zM1332 689h1v3h-1zM1332 695h1v3h-1zM1332 701h1v3h-1zM1332 707h1v3h-1zM1332 713h1v3h-1zM1332 719h1v3h-1zM1332 725h1v3h-1zM1332 731h1v3h-1zM1332 737h1v3h-1zM1332 743h1v3h-1zM1332 749h1v3h-1zM1332 755h1v3h-1zM1332 761h1v3h-1zM1332 767h1v3h-1zM1332 773h1v3h-1zM1332 779h1v3h-1zM1332 785h1v3h-1zM1332 791h1v3h-1zM1332 797h1v3h-1zM1332 803h1v3h-1zM1332 809h1v3h-1zM1332 815h1v3h-1zM1332 821h1v3h-1zM1332 827h1v3h-1zM1332 833h1v3h-1zM1332 839h1v3h-1zM1332 845h1v3h-1zM1332 851h1v3h-1zM1332 857h1v3h-1zM1332 863h1v3h-1zM1332 869h1v3h-1zM1332 875h1v3h-1zM1332 881h1v3h-1zM1332 887h1v3h-1zM1332 893h1v3h-1zM1332 899h1v3h-1zM1332 905h1v3h-1zM1332 911h1v3h-1zM1332 917h1v3h-1zM1332 923h1v3h-1zM1332 929h1v3h-1zM1332 935h1v3h-1zM1332 941h1v3h-1zM1332 947h1v3h-1zM1332 953h1v3h-1zM1332 959h1v3h-1zM1332 965h1v3h-1zM1332 971h1v3h-1zM1332 977h1v3h-1zM1332 983h1v3h-1zM1332 989h1v3h-1zM1332 995h1v3h-1zM1332 997h1v8h-1zM1493 617h1v3h-1zM1493 623h1v3h-1zM1493 629h1v3h-1zM1493 635h1v3h-1zM1493 641h1v3h-1zM1493 647h1v3h-1zM1493 653h1v3h-1zM1493 659h1v3h-1zM1493 665h1v3h-1zM1493 671h1v3h-1zM1493 677h1v3h-1zM1493 683h1v3h-1zM1493 689h1v3h-1zM1493 695h1v3h-1zM1493 701h1v3h-1zM1493 707h1v3h-1zM1493 713h1v3h-1zM1493 719h1v3h-1zM1493 725h1v3h-1zM1493 731h1v3h-1zM1493 737h1v3h-1zM1493 743h1v3h-1zM1493 749h1v3h-1zM1493 755h1v3h-1zM1493 761h1v3h-1zM1493 767h1v3h-1zM1493 773h1v3h-1zM1493 779h1v3h-1zM1493 785h1v3h-1zM1493 791h1v3h-1zM1493 797h1v3h-1zM1493 803h1v3h-1zM1493 809h1v3h-1zM1493 815h1v3h-1zM1493 821h1v3h-1zM1493 827h1v3h-1zM1493 833h1v3h-1zM1493 839h1v3h-1zM1493 845h1v3h-1zM1493 851h1v3h-1zM1493 857h1v3h-1zM1493 863h1v3h-1zM1493 869h1v3h-1zM1493 875h1v3h-1zM1493 881h1v3h-1zM1493 887h1v3h-1zM1493 893h1v3h-1zM1493 899h1v3h-1zM1493 905h1v3h-1zM1493 911h1v3h-1zM1493 917h1v3h-1zM1493 923h1v3h-1zM1493 929h1v3h-1zM1493 935h1v3h-1zM1493 941h1v3h-1zM1493 947h1v3h-1zM1493 953h1v3h-1zM1493 959h1v3h-1zM1493 965h1v3h-1zM1493 971h1v3h-1zM1493 977h1v3h-1zM1493 983h1v3h-1zM1493 989h1v3h-1zM1493 995h1v3h-1zM1493 997h1v8h-1zM44 997h1v8h-1z" fill="#9C9C9C" shape-rendering="crispEdges"/><g font-family='"Liberation Sans", sans-serif' font-size="14"><text transform="translate(21.45,622.30) scale(0.85,1)" fill="#C8C8C8" stroke="#C8C8C8" stroke-width="0.75" letter-spacing="0.882">1V</text><text transform="translate(21.45,651.53) scale(0.85,1)" fill="#C8C8C8" stroke="#C8C8C8" stroke-width="0.75" letter-spacing="0.882">0V</text><text transform="translate(16.73,680.76) scale(0.85,1)" fill="#C8C8C8" stroke="#C8C8C8" stroke-width="0.75" letter-spacing="0.882">-1V</text><text transform="translate(16.73,709.99) scale(0.85,1)" fill="#C8C8C8" stroke="#C8C8C8" stroke-width="0.75" letter-spacing="0.882">-2V</text><text transform="translate(16.73,739.22) scale(0.85,1)" fill="#C8C8C8" stroke="#C8C8C8" stroke-width="0.75" letter-spacing="0.882">-3V</text><text transform="translate(16.73,768.45) scale(0.85,1)" fill="#C8C8C8" stroke="#C8C8C8" stroke-width="0.75" letter-spacing="0.882">-4V</text><text transform="translate(16.73,797.68) scale(0.85,1)" fill="#C8C8C8" stroke="#C8C8C8" stroke-width="0.75" letter-spacing="0.882">-5V</text><text transform="translate(16.73,826.92) scale(0.85,1)" fill="#C8C8C8" stroke="#C8C8C8" stroke-width="0.75" letter-spacing="0.882">-6V</text><text transform="translate(16.73,856.15) scale(0.85,1)" fill="#C8C8C8" stroke="#C8C8C8" stroke-width="0.75" letter-spacing="0.882">-7V</text><text transform="translate(16.73,885.38) scale(0.85,1)" fill="#C8C8C8" stroke="#C8C8C8" stroke-width="0.75" letter-spacing="0.882">-8V</text><text transform="translate(16.73,914.61) scale(0.85,1)" fill="#C8C8C8" stroke="#C8C8C8" stroke-width="0.75" letter-spacing="0.882">-9V</text><text transform="translate(9.37,943.84) scale(0.85,1)" fill="#C8C8C8" stroke="#C8C8C8" stroke-width="0.75" letter-spacing="0.882">-10V</text><text transform="translate(10.25,973.07) scale(0.85,1)" fill="#C8C8C8" stroke="#C8C8C8" stroke-width="0.75" letter-spacing="0.882">-11V</text><text transform="translate(9.37,1002.30) scale(0.85,1)" fill="#C8C8C8" stroke="#C8C8C8" stroke-width="0.75" letter-spacing="0.882">-12V</text><text transform="translate(28.58,1017.80) scale(0.85,1)" fill="#C8C8C8" stroke="#C8C8C8" stroke-width="0.75" letter-spacing="0.882">0.0µs</text><text transform="translate(189.58,1017.80) scale(0.85,1)" fill="#C8C8C8" stroke="#C8C8C8" stroke-width="0.75" letter-spacing="0.882">0.2µs</text><text transform="translate(350.58,1017.80) scale(0.85,1)" fill="#C8C8C8" stroke="#C8C8C8" stroke-width="0.75" letter-spacing="0.882">0.4µs</text><text transform="translate(511.58,1017.80) scale(0.85,1)" fill="#C8C8C8" stroke="#C8C8C8" stroke-width="0.75" letter-spacing="0.882">0.6µs</text><text transform="translate(672.58,1017.80) scale(0.85,1)" fill="#C8C8C8" stroke="#C8C8C8" stroke-width="0.75" letter-spacing="0.882">0.8µs</text><text transform="translate(833.58,1017.80) scale(0.85,1)" fill="#C8C8C8" stroke="#C8C8C8" stroke-width="0.75" letter-spacing="0.882">1.0µs</text><text transform="translate(994.58,1017.80) scale(0.85,1)" fill="#C8C8C8" stroke="#C8C8C8" stroke-width="0.75" letter-spacing="0.882">1.2µs</text><text transform="translate(1155.58,1017.80) scale(0.85,1)" fill="#C8C8C8" stroke="#C8C8C8" stroke-width="0.75" letter-spacing="0.882">1.4µs</text><text transform="translate(1316.58,1017.80) scale(0.85,1)" fill="#C8C8C8" stroke="#C8C8C8" stroke-width="0.75" letter-spacing="0.882">1.6µs</text><text transform="translate(1477.58,1017.80) scale(0.85,1)" fill="#C8C8C8" stroke="#C8C8C8" stroke-width="0.75" letter-spacing="0.882">1.8µs</text><text transform="translate(396.50,611.80) scale(0.85,1)" fill="#48E048" stroke="#48E048" stroke-width="0.75" letter-spacing="0.882">V(n006)-V(n009)</text><text transform="translate(1201.50,611.80) scale(0.85,1)" fill="#E81818" stroke="#E81818" stroke-width="0.75" letter-spacing="0.882">V(n008)-V(n010)</text></g><polyline points="44.5,685.47 45.5,686.27 46.5,687.10 47.5,687.95 48.5,688.83 49.5,689.73 50.5,690.65 51.5,691.60 52.5,692.56 53.5,693.55 54.5,694.56 55.5,695.58 56.5,696.63 57.5,697.69 58.5,698.77 59.5,699.87 60.5,700.98 61.5,702.11 62.5,703.25 63.5,704.40 64.5,705.57 65.5,706.74 66.5,707.93 67.5,709.13 68.5,710.33 69.5,711.55 70.5,712.77 71.5,714.00 72.5,715.23 73.5,716.47 74.5,717.71 75.5,718.95 76.5,720.20 77.5,721.44 78.5,722.69 79.5,723.93 80.5,725.18 81.5,726.42 82.5,727.65 83.5,728.89 84.5,730.11 85.5,731.33 86.5,732.55 87.5,733.75 88.5,734.95 89.5,736.13 90.5,737.31 91.5,738.47 92.5,739.63 93.5,740.76 94.5,741.89 95.5,743.00 96.5,744.09 97.5,745.17 98.5,746.23 99.5,747.27 100.5,748.30 101.5,749.30 102.5,750.28 103.5,751.25 104.5,752.19 105.5,753.11 106.5,754.00 107.5,754.88 108.5,755.72 109.5,756.55 110.5,757.35 111.5,758.12 112.5,758.86 113.5,759.58 114.5,760.27 115.5,760.93 116.5,761.57 117.5,762.17 118.5,762.75 119.5,763.29 120.5,763.81 121.5,764.29 122.5,764.75 123.5,765.17 124.5,765.56 125.5,765.92 126.5,766.24 127.5,766.54 128.5,766.80 129.5,767.03 130.5,767.22 131.5,767.38 132.5,767.51 133.5,767.61 134.5,767.67 135.5,767.70 136.5,767.69 137.5,767.65 138.5,767.58 139.5,767.48 140.5,767.34 141.5,767.17 142.5,766.96 143.5,766.72 144.5,766.45 145.5,766.15 146.5,765.81 147.5,765.44 148.5,765.05 149.5,764.61 150.5,764.15 151.5,763.66 152.5,763.13 153.5,762.58 154.5,761.99 155.5,761.38 156.5,760.74 157.5,760.07 158.5,759.37 159.5,758.64 160.5,757.89 161.5,757.11 162.5,756.30 163.5,755.47 164.5,754.62 165.5,753.74 166.5,752.83 167.5,751.91 168.5,750.96 169.5,749.99 170.5,749.00 171.5,747.99 172.5,746.96 173.5,745.91 174.5,744.85 175.5,743.77 176.5,742.67 177.5,741.55 178.5,740.42 179.5,739.28 180.5,738.13 181.5,736.96 182.5,735.78 183.5,734.59 184.5,733.39 185.5,732.18 186.5,730.97 187.5,729.75 188.5,728.52 189.5,727.28 190.5,726.05 191.5,724.80 192.5,723.56 193.5,722.32 194.5,721.07 195.5,719.82 196.5,718.58 197.5,717.34 198.5,716.10 199.5,714.86 200.5,713.63 201.5,712.40 202.5,711.18 203.5,709.97 204.5,708.77 205.5,707.57 206.5,706.39 207.5,705.21 208.5,704.05 209.5,702.90 210.5,701.77 211.5,700.64 212.5,699.54 213.5,698.45 214.5,697.37 215.5,696.31 216.5,695.27 217.5,694.25 218.5,693.25 219.5,692.27 220.5,691.31 221.5,690.37 222.5,689.46 223.5,688.56 224.5,687.70 225.5,686.85 226.5,686.03 227.5,685.24 228.5,684.47 229.5,683.73 230.5,683.01 231.5,682.33 232.5,681.67 233.5,681.04 234.5,680.44 235.5,679.87 236.5,679.33 237.5,678.82 238.5,678.34 239.5,677.89 240.5,677.47 241.5,677.09 242.5,676.73 243.5,676.41 244.5,676.12 245.5,675.87 246.5,675.64 247.5,675.45 248.5,675.30 249.5,675.17 250.5,675.08 251.5,675.02 252.5,675.00 253.5,675.01 254.5,675.05 255.5,675.13 256.5,675.24 257.5,675.39 258.5,675.56 259.5,675.77 260.5,676.02 261.5,676.29 262.5,676.60 263.5,676.94 264.5,677.31 265.5,677.72 266.5,678.15 267.5,678.62 268.5,679.12 269.5,679.65 270.5,680.21 271.5,680.80 272.5,681.41 273.5,682.06 274.5,682.74 275.5,683.44 276.5,684.17 277.5,684.93 278.5,685.71 279.5,686.52 280.5,687.35 281.5,688.21 282.5,689.10 283.5,690.00 284.5,690.93 285.5,691.88 286.5,692.86 287.5,693.85 288.5,694.86 289.5,695.89 290.5,696.95 291.5,698.01 292.5,699.10 293.5,700.20 294.5,701.32 295.5,702.45 296.5,703.59 297.5,704.75 298.5,705.92 299.5,707.10 300.5,708.29 301.5,709.49 302.5,710.70 303.5,711.91 304.5,713.14 305.5,714.37 306.5,715.60 307.5,716.84 308.5,718.08 309.5,719.33 310.5,720.57 311.5,721.82 312.5,723.06 313.5,724.31 314.5,725.55 315.5,726.79 316.5,728.02 317.5,729.26 318.5,730.48 319.5,731.70 320.5,732.91 321.5,734.11 322.5,735.31 323.5,736.49 324.5,737.66 325.5,738.82 326.5,739.97 327.5,741.10 328.5,742.22 329.5,743.33 330.5,744.42 331.5,745.49 332.5,746.54 333.5,747.58 334.5,748.60 335.5,749.60 336.5,750.57 337.5,751.53 338.5,752.47 339.5,753.38 340.5,754.27 341.5,755.13 342.5,755.97 343.5,756.79 344.5,757.58 345.5,758.34 346.5,759.08 347.5,759.79 348.5,760.47 349.5,761.13 350.5,761.75 351.5,762.35 352.5,762.91 353.5,763.45 354.5,763.96 355.5,764.43 356.5,764.88 357.5,765.29 358.5,765.67 359.5,766.02 360.5,766.33 361.5,766.62 362.5,766.87 363.5,767.09 364.5,767.27 365.5,767.43 366.5,767.54 367.5,767.63 368.5,767.68 369.5,767.70 370.5,767.68 371.5,767.64 372.5,767.55 373.5,767.44 374.5,767.29 375.5,767.11 376.5,766.89 377.5,766.65 378.5,766.36 379.5,766.05 380.5,765.71 381.5,765.33 382.5,764.92 383.5,764.48 384.5,764.01 385.5,763.50 386.5,762.97 387.5,762.41 388.5,761.81 389.5,761.19 390.5,760.54 391.5,759.86 392.5,759.15 393.5,758.42 394.5,757.66 395.5,756.87 396.5,756.06 397.5,755.22 398.5,754.35 399.5,753.47 400.5,752.56 401.5,751.63 402.5,750.67 403.5,749.70 404.5,748.70 405.5,747.68 406.5,746.65 407.5,745.60 408.5,744.52 409.5,743.44 410.5,742.33 411.5,741.22 412.5,740.08 413.5,738.94 414.5,737.78 415.5,736.61 416.5,735.42 417.5,734.23 418.5,733.03 419.5,731.82 420.5,730.60 421.5,729.38 422.5,728.15 423.5,726.91 424.5,725.67 425.5,724.43 426.5,723.19 427.5,721.94 428.5,720.70 429.5,719.45 430.5,718.21 431.5,716.96 432.5,715.73 433.5,714.49 434.5,713.26 435.5,712.04 436.5,710.82 437.5,709.61 438.5,708.41 439.5,707.22 440.5,706.04 441.5,704.86 442.5,703.71 443.5,702.56 444.5,701.43 445.5,700.31 446.5,699.21 447.5,698.12 448.5,697.05 449.5,696.00 450.5,694.97 451.5,693.95 452.5,692.96 453.5,691.98 454.5,691.03 455.5,690.10 456.5,689.19 457.5,688.30 458.5,687.44 459.5,686.60 460.5,685.79 461.5,685.00 462.5,684.24 463.5,683.51 464.5,682.80 465.5,682.13 466.5,681.48 467.5,680.86 468.5,680.26 469.5,679.70 470.5,679.17 471.5,678.67 472.5,678.20 473.5,677.76 474.5,677.35 475.5,676.98 476.5,676.63 477.5,676.32 478.5,676.04 479.5,675.80 480.5,675.58 481.5,675.40 482.5,675.25 483.5,675.14 484.5,675.06 485.5,675.01 486.5,675.00 487.5,675.02 488.5,675.07 489.5,675.16 490.5,675.28 491.5,675.44 492.5,675.62 493.5,675.84 494.5,676.09 495.5,676.38 496.5,676.70 497.5,677.05 498.5,677.43 499.5,677.85 500.5,678.29 501.5,678.77 502.5,679.27 503.5,679.81 504.5,680.38 505.5,680.98 506.5,681.60 507.5,682.26 508.5,682.94 509.5,683.66 510.5,684.39 511.5,685.16 512.5,685.95 513.5,686.77 514.5,687.61 515.5,688.48 516.5,689.37 517.5,690.28 518.5,691.22 519.5,692.17 520.5,693.15 521.5,694.15 522.5,695.17 523.5,696.21 524.5,697.26 525.5,698.34 526.5,699.43 527.5,700.53 528.5,701.65 529.5,702.79 530.5,703.94 531.5,705.10 532.5,706.27 533.5,707.45 534.5,708.65 535.5,709.85 536.5,711.06 537.5,712.28 538.5,713.51 539.5,714.74 540.5,715.97 541.5,717.21 542.5,718.45 543.5,719.70 544.5,720.95 545.5,722.19 546.5,723.44 547.5,724.68 548.5,725.92 549.5,727.16 550.5,728.39 551.5,729.62 552.5,730.85 553.5,732.06 554.5,733.27 555.5,734.47 556.5,735.66 557.5,736.84 558.5,738.01 559.5,739.17 560.5,740.31 561.5,741.44 562.5,742.56 563.5,743.66 564.5,744.74 565.5,745.81 566.5,746.86 567.5,747.89 568.5,748.90 569.5,749.89 570.5,750.86 571.5,751.81 572.5,752.74 573.5,753.65 574.5,754.53 575.5,755.39 576.5,756.22 577.5,757.03 578.5,757.81 579.5,758.57 580.5,759.30 581.5,760.00 582.5,760.67 583.5,761.32 584.5,761.93 585.5,762.52 586.5,763.08 587.5,763.61 588.5,764.10 589.5,764.57 590.5,765.00 591.5,765.41 592.5,765.78 593.5,766.12 594.5,766.42 595.5,766.70 596.5,766.94 597.5,767.15 598.5,767.32 599.5,767.46 600.5,767.57 601.5,767.65 602.5,767.69 603.5,767.70 604.5,767.67 605.5,767.62 606.5,767.52 607.5,767.40 608.5,767.24 609.5,767.05 610.5,766.82 611.5,766.56 612.5,766.27 613.5,765.95 614.5,765.60 615.5,765.21 616.5,764.79 617.5,764.34 618.5,763.86 619.5,763.35 620.5,762.80 621.5,762.23 622.5,761.63 623.5,761.00 624.5,760.34 625.5,759.65 626.5,758.94 627.5,758.19 628.5,757.42 629.5,756.63 630.5,755.81 631.5,754.96 632.5,754.09 633.5,753.20 634.5,752.28 635.5,751.34 636.5,750.38 637.5,749.40 638.5,748.40 639.5,747.38 640.5,746.33 641.5,745.28 642.5,744.20 643.5,743.11 644.5,742.00 645.5,740.88 646.5,739.74 647.5,738.59 648.5,737.43 649.5,736.25 650.5,735.07 651.5,733.87 652.5,732.67 653.5,731.46 654.5,730.24 655.5,729.01 656.5,727.78 657.5,726.54 658.5,725.30 659.5,724.06 660.5,722.81 661.5,721.57 662.5,720.32 663.5,719.08 664.5,717.83 665.5,716.59 666.5,715.35 667.5,714.12 668.5,712.89 669.5,711.67 670.5,710.46 671.5,709.25 672.5,708.05 673.5,706.86 674.5,705.68 675.5,704.52 676.5,703.36 677.5,702.22 678.5,701.09 679.5,699.98 680.5,698.88 681.5,697.80 682.5,696.73 683.5,695.69 684.5,694.66 685.5,693.65 686.5,692.66 687.5,691.69 688.5,690.75 689.5,689.82 690.5,688.92 691.5,688.04 692.5,687.19 693.5,686.36 694.5,685.55 695.5,684.77 696.5,684.02 697.5,683.30 698.5,682.60 699.5,681.93 700.5,681.29 701.5,680.68 702.5,680.09 703.5,679.54 704.5,679.02 705.5,678.53 706.5,678.06 707.5,677.63 708.5,677.24 709.5,676.87 710.5,676.54 711.5,676.23 712.5,675.96 713.5,675.73 714.5,675.52 715.5,675.35 716.5,675.22 717.5,675.11 718.5,675.04 719.5,675.01 720.5,675.00 721.5,675.03 722.5,675.10 723.5,675.19 724.5,675.32 725.5,675.49 726.5,675.68 727.5,675.91 728.5,676.18 729.5,676.47 730.5,676.80 731.5,677.16 732.5,677.55 733.5,677.98 734.5,678.43 735.5,678.92 736.5,679.43 737.5,679.98 738.5,680.56 739.5,681.16 740.5,681.80 741.5,682.46 742.5,683.15 743.5,683.87 744.5,684.62 745.5,685.39 746.5,686.19 747.5,687.02 748.5,687.87 749.5,688.74 750.5,689.64 751.5,690.56 752.5,691.50 753.5,692.47 754.5,693.45 755.5,694.46 756.5,695.48 757.5,696.52 758.5,697.58 759.5,698.66 760.5,699.76 761.5,700.87 762.5,701.99 763.5,703.13 764.5,704.28 765.5,705.45 766.5,706.62 767.5,707.81 768.5,709.01 769.5,710.21 770.5,711.43 771.5,712.65 772.5,713.87 773.5,715.11 774.5,716.34 775.5,717.58 776.5,718.83 777.5,720.07 778.5,721.32 779.5,722.56 780.5,723.81 781.5,725.05 782.5,726.29 783.5,727.53 784.5,728.76 785.5,729.99 786.5,731.21 787.5,732.43 788.5,733.63 789.5,734.83 790.5,736.02 791.5,737.19 792.5,738.36 793.5,739.51 794.5,740.65 795.5,741.78 796.5,742.89 797.5,743.98 798.5,745.06 799.5,746.12 800.5,747.17 801.5,748.19 802.5,749.20 803.5,750.19 804.5,751.15 805.5,752.09 806.5,753.02 807.5,753.91 808.5,754.79 809.5,755.64 810.5,756.47 811.5,757.27 812.5,758.04 813.5,758.79 814.5,759.51 815.5,760.20 816.5,760.87 817.5,761.51 818.5,762.11 819.5,762.69 820.5,763.24 821.5,763.76 822.5,764.25 823.5,764.70 824.5,765.13 825.5,765.52 826.5,765.88 827.5,766.21 828.5,766.51 829.5,766.77 830.5,767.00 831.5,767.20 832.5,767.37 833.5,767.50 834.5,767.60 835.5,767.66 836.5,767.70 837.5,767.69 838.5,767.66 839.5,767.59 840.5,767.49 841.5,767.35 842.5,767.18 843.5,766.98 844.5,766.75 845.5,766.48 846.5,766.18 847.5,765.85 848.5,765.48 849.5,765.09 850.5,764.66 851.5,764.20 852.5,763.71 853.5,763.19 854.5,762.64 855.5,762.05 856.5,761.44 857.5,760.80 858.5,760.14 859.5,759.44 860.5,758.72 861.5,757.96 862.5,757.19 863.5,756.38 864.5,755.56 865.5,754.70 866.5,753.83 867.5,752.92 868.5,752.00 869.5,751.06 870.5,750.09 871.5,749.10 872.5,748.09 873.5,747.07 874.5,746.02 875.5,744.96 876.5,743.87 877.5,742.78 878.5,741.66 879.5,740.54 880.5,739.40 881.5,738.24 882.5,737.08 883.5,735.90 884.5,734.71 885.5,733.51 886.5,732.30 887.5,731.09 888.5,729.87 889.5,728.64 890.5,727.41 891.5,726.17 892.5,724.93 893.5,723.69 894.5,722.44 895.5,721.19 896.5,719.95 897.5,718.70 898.5,717.46 899.5,716.22 900.5,714.98 901.5,713.75 902.5,712.53 903.5,711.31 904.5,710.09 905.5,708.89 906.5,707.69 907.5,706.51 908.5,705.33 909.5,704.17 910.5,703.02 911.5,701.88 912.5,700.76 913.5,699.65 914.5,698.55 915.5,697.48 916.5,696.42 917.5,695.38 918.5,694.35 919.5,693.35 920.5,692.37 921.5,691.41 922.5,690.47 923.5,689.55 924.5,688.65 925.5,687.78 926.5,686.93 927.5,686.11 928.5,685.32 929.5,684.54 930.5,683.80 931.5,683.08 932.5,682.39 933.5,681.73 934.5,681.10 935.5,680.50 936.5,679.92 937.5,679.38 938.5,678.87 939.5,678.38 940.5,677.93 941.5,677.51 942.5,677.12 943.5,676.77 944.5,676.44 945.5,676.15 946.5,675.89 947.5,675.66 948.5,675.47 949.5,675.31 950.5,675.18 951.5,675.09 952.5,675.03 953.5,675.00 954.5,675.01 955.5,675.05 956.5,675.12 957.5,675.23 958.5,675.37 959.5,675.54 960.5,675.75 961.5,675.99 962.5,676.26 963.5,676.57 964.5,676.90 965.5,677.27 966.5,677.68 967.5,678.11 968.5,678.57 969.5,679.07 970.5,679.59 971.5,680.15 972.5,680.74 973.5,681.35 974.5,681.99 975.5,682.67 976.5,683.37 977.5,684.10 978.5,684.85 979.5,685.63 980.5,686.44 981.5,687.27 982.5,688.13 983.5,689.01 984.5,689.91 985.5,690.84 986.5,691.79 987.5,692.76 988.5,693.75 989.5,694.76 990.5,695.79 991.5,696.84 992.5,697.91 993.5,698.99 994.5,700.09 995.5,701.20 996.5,702.33 997.5,703.48 998.5,704.63 999.5,705.80 1000.5,706.98 1001.5,708.17 1002.5,709.37 1003.5,710.58 1004.5,711.79 1005.5,713.02 1006.5,714.24 1007.5,715.48 1008.5,716.72 1009.5,717.96 1010.5,719.20 1011.5,720.45 1012.5,721.69 1013.5,722.94 1014.5,724.18 1015.5,725.43 1016.5,726.67 1017.5,727.90 1018.5,729.13 1019.5,730.36 1020.5,731.58 1021.5,732.79 1022.5,733.99 1023.5,735.19 1024.5,736.37 1025.5,737.54 1026.5,738.71 1027.5,739.85 1028.5,740.99 1029.5,742.11 1030.5,743.22 1031.5,744.31 1032.5,745.38 1033.5,746.44 1034.5,747.48 1035.5,748.50 1036.5,749.50 1037.5,750.48 1038.5,751.44 1039.5,752.37 1040.5,753.29 1041.5,754.18 1042.5,755.05 1043.5,755.89 1044.5,756.71 1045.5,757.50 1046.5,758.27 1047.5,759.01 1048.5,759.72 1049.5,760.41 1050.5,761.06 1051.5,761.69 1052.5,762.29 1053.5,762.86 1054.5,763.40 1055.5,763.91 1056.5,764.39 1057.5,764.83 1058.5,765.25 1059.5,765.63 1060.5,765.98 1061.5,766.30 1062.5,766.59 1063.5,766.85 1064.5,767.07 1065.5,767.26 1066.5,767.41 1067.5,767.53 1068.5,767.62 1069.5,767.68 1070.5,767.70 1071.5,767.69 1072.5,767.64 1073.5,767.56 1074.5,767.45 1075.5,767.31 1076.5,767.13 1077.5,766.92 1078.5,766.67 1079.5,766.39 1080.5,766.08 1081.5,765.74 1082.5,765.37 1083.5,764.96 1084.5,764.52 1085.5,764.05 1086.5,763.55 1087.5,763.02 1088.5,762.46 1089.5,761.87 1090.5,761.25 1091.5,760.61 1092.5,759.93 1093.5,759.23 1094.5,758.49 1095.5,757.73 1096.5,756.95 1097.5,756.14 1098.5,755.30 1099.5,754.44 1100.5,753.56 1101.5,752.65 1102.5,751.72 1103.5,750.77 1104.5,749.79 1105.5,748.80 1106.5,747.79 1107.5,746.75 1108.5,745.70 1109.5,744.63 1110.5,743.55 1111.5,742.45 1112.5,741.33 1113.5,740.20 1114.5,739.05 1115.5,737.89 1116.5,736.72 1117.5,735.54 1118.5,734.35 1119.5,733.15 1120.5,731.94 1121.5,730.72 1122.5,729.50 1123.5,728.27 1124.5,727.04 1125.5,725.80 1126.5,724.56 1127.5,723.31 1128.5,722.07 1129.5,720.82 1130.5,719.57 1131.5,718.33 1132.5,717.09 1133.5,715.85 1134.5,714.61 1135.5,713.38 1136.5,712.16 1137.5,710.94 1138.5,709.73 1139.5,708.53 1140.5,707.34 1141.5,706.15 1142.5,704.98 1143.5,703.82 1144.5,702.67 1145.5,701.54 1146.5,700.42 1147.5,699.32 1148.5,698.23 1149.5,697.16 1150.5,696.10 1151.5,695.07 1152.5,694.05 1153.5,693.05 1154.5,692.08 1155.5,691.12 1156.5,690.19 1157.5,689.28 1158.5,688.39 1159.5,687.52 1160.5,686.69 1161.5,685.87 1162.5,685.08 1163.5,684.32 1164.5,683.58 1165.5,682.87 1166.5,682.19 1167.5,681.54 1168.5,680.92 1169.5,680.32 1170.5,679.76 1171.5,679.22 1172.5,678.72 1173.5,678.24 1174.5,677.80 1175.5,677.39 1176.5,677.01 1177.5,676.67 1178.5,676.35 1179.5,676.07 1180.5,675.82 1181.5,675.60 1182.5,675.42 1183.5,675.27 1184.5,675.15 1185.5,675.07 1186.5,675.02 1187.5,675.00 1188.5,675.02 1189.5,675.07 1190.5,675.15 1191.5,675.27 1192.5,675.42 1193.5,675.60 1194.5,675.82 1195.5,676.07 1196.5,676.35 1197.5,676.67 1198.5,677.01 1199.5,677.39 1200.5,677.80 1201.5,678.24 1202.5,678.72 1203.5,679.22 1204.5,679.76 1205.5,680.32 1206.5,680.92 1207.5,681.54 1208.5,682.19 1209.5,682.87 1210.5,683.58 1211.5,684.32 1212.5,685.08 1213.5,685.87 1214.5,686.69 1215.5,687.52 1216.5,688.39 1217.5,689.28 1218.5,690.19 1219.5,691.12 1220.5,692.08 1221.5,693.05 1222.5,694.05 1223.5,695.07 1224.5,696.10 1225.5,697.16 1226.5,698.23 1227.5,699.32 1228.5,700.42 1229.5,701.54 1230.5,702.67 1231.5,703.82 1232.5,704.98 1233.5,706.15 1234.5,707.34 1235.5,708.53 1236.5,709.73 1237.5,710.94 1238.5,712.16 1239.5,713.38 1240.5,714.61 1241.5,715.85 1242.5,717.09 1243.5,718.33 1244.5,719.57 1245.5,720.82 1246.5,722.07 1247.5,723.31 1248.5,724.56 1249.5,725.80 1250.5,727.04 1251.5,728.27 1252.5,729.50 1253.5,730.72 1254.5,731.94 1255.5,733.15 1256.5,734.35 1257.5,735.54 1258.5,736.72 1259.5,737.89 1260.5,739.05 1261.5,740.20 1262.5,741.33 1263.5,742.45 1264.5,743.55 1265.5,744.63 1266.5,745.70 1267.5,746.75 1268.5,747.79 1269.5,748.80 1270.5,749.79 1271.5,750.77 1272.5,751.72 1273.5,752.65 1274.5,753.56 1275.5,754.44 1276.5,755.30 1277.5,756.14 1278.5,756.95 1279.5,757.73 1280.5,758.49 1281.5,759.23 1282.5,759.93 1283.5,760.61 1284.5,761.25 1285.5,761.87 1286.5,762.46 1287.5,763.02 1288.5,763.55 1289.5,764.05 1290.5,764.52 1291.5,764.96 1292.5,765.37 1293.5,765.74 1294.5,766.08 1295.5,766.39 1296.5,766.67 1297.5,766.92 1298.5,767.13 1299.5,767.31 1300.5,767.45 1301.5,767.56 1302.5,767.64 1303.5,767.69 1304.5,767.70 1305.5,767.68 1306.5,767.62 1307.5,767.53 1308.5,767.41 1309.5,767.26 1310.5,767.07 1311.5,766.85 1312.5,766.59 1313.5,766.30 1314.5,765.98 1315.5,765.63 1316.5,765.25 1317.5,764.83 1318.5,764.39 1319.5,763.91 1320.5,763.40 1321.5,762.86 1322.5,762.29 1323.5,761.69 1324.5,761.06 1325.5,760.41 1326.5,759.72 1327.5,759.01 1328.5,758.27 1329.5,757.50 1330.5,756.71 1331.5,755.89 1332.5,755.05 1333.5,754.18 1334.5,753.29 1335.5,752.37 1336.5,751.44 1337.5,750.48 1338.5,749.50 1339.5,748.50 1340.5,747.48 1341.5,746.44 1342.5,745.38 1343.5,744.31 1344.5,743.22 1345.5,742.11 1346.5,740.99 1347.5,739.85 1348.5,738.71 1349.5,737.54 1350.5,736.37 1351.5,735.19 1352.5,733.99 1353.5,732.79 1354.5,731.58 1355.5,730.36 1356.5,729.13 1357.5,727.90 1358.5,726.67 1359.5,725.43 1360.5,724.18 1361.5,722.94 1362.5,721.69 1363.5,720.45 1364.5,719.20 1365.5,717.96 1366.5,716.72 1367.5,715.48 1368.5,714.24 1369.5,713.02 1370.5,711.79 1371.5,710.58 1372.5,709.37 1373.5,708.17 1374.5,706.98 1375.5,705.80 1376.5,704.63 1377.5,703.48 1378.5,702.33 1379.5,701.20 1380.5,700.09 1381.5,698.99 1382.5,697.91 1383.5,696.84 1384.5,695.79 1385.5,694.76 1386.5,693.75 1387.5,692.76 1388.5,691.79 1389.5,690.84 1390.5,689.91 1391.5,689.01 1392.5,688.13 1393.5,687.27 1394.5,686.44 1395.5,685.63 1396.5,684.85 1397.5,684.10 1398.5,683.37 1399.5,682.67 1400.5,681.99 1401.5,681.35 1402.5,680.74 1403.5,680.15 1404.5,679.59 1405.5,679.07 1406.5,678.57 1407.5,678.11 1408.5,677.68 1409.5,677.27 1410.5,676.90 1411.5,676.57 1412.5,676.26 1413.5,675.99 1414.5,675.75 1415.5,675.54 1416.5,675.37 1417.5,675.23 1418.5,675.12 1419.5,675.05 1420.5,675.01 1421.5,675.00 1422.5,675.03 1423.5,675.09 1424.5,675.18 1425.5,675.31 1426.5,675.47 1427.5,675.66 1428.5,675.89 1429.5,676.15 1430.5,676.44 1431.5,676.77 1432.5,677.12 1433.5,677.51 1434.5,677.93 1435.5,678.38 1436.5,678.87 1437.5,679.38 1438.5,679.92 1439.5,680.50 1440.5,681.10 1441.5,681.73 1442.5,682.39 1443.5,683.08 1444.5,683.80 1445.5,684.54 1446.5,685.32 1447.5,686.11 1448.5,686.93 1449.5,687.78 1450.5,688.65 1451.5,689.55 1452.5,690.47 1453.5,691.41 1454.5,692.37 1455.5,693.35 1456.5,694.35 1457.5,695.38 1458.5,696.42 1459.5,697.48 1460.5,698.55 1461.5,699.65 1462.5,700.76 1463.5,701.88 1464.5,703.02 1465.5,704.17 1466.5,705.33 1467.5,706.51 1468.5,707.69 1469.5,708.89 1470.5,710.09 1471.5,711.31 1472.5,712.53 1473.5,713.75 1474.5,714.98 1475.5,716.22 1476.5,717.46 1477.5,718.70 1478.5,719.95 1479.5,721.19 1480.5,722.44 1481.5,723.69 1482.5,724.93 1483.5,726.17 1484.5,727.41 1485.5,728.64 1486.5,729.87 1487.5,731.09 1488.5,732.30 1489.5,733.51 1490.5,734.71 1491.5,735.90 1492.5,737.08 1493.5,738.24 1494.5,739.40 1495.5,740.54 1496.5,741.66 1497.5,742.78 1498.5,743.87 1499.5,744.96 1500.5,746.02 1501.5,747.07 1502.5,748.09 1503.5,749.10 1504.5,750.09 1505.5,751.06 1506.5,752.00 1507.5,752.92 1508.5,753.83 1509.5,754.70 1510.5,755.56 1511.5,756.38 1512.5,757.19 1513.5,757.96 1514.5,758.72 1515.5,759.44 1516.5,760.14 1517.5,760.80 1518.5,761.44 1519.5,762.05 1520.5,762.64 1521.5,763.19 1522.5,763.71 1523.5,764.20 1524.5,764.66 1525.5,765.09 1526.5,765.48 1527.5,765.85 1528.5,766.18 1529.5,766.48 1530.5,766.75 1531.5,766.98 1532.5,767.18 1533.5,767.35 1534.5,767.49 1535.5,767.59 1536.5,767.66 1537.5,767.69 1538.5,767.70 1539.5,767.66 1540.5,767.60 1541.5,767.50 1542.5,767.37 1543.5,767.20 1544.5,767.00 1545.5,766.77 1546.5,766.51 1547.5,766.21 1548.5,765.88 1549.5,765.52 1550.5,765.13 1551.5,764.70 1552.5,764.25 1553.5,763.76 1554.5,763.24 1555.5,762.69 1556.5,762.11 1557.5,761.51 1558.5,760.87 1559.5,760.20 1560.5,759.51 1561.5,758.79 1562.5,758.04 1563.5,757.27 1564.5,756.47 1565.5,755.64 1566.5,754.79 1567.5,753.91 1568.5,753.02 1569.5,752.09 1570.5,751.15 1571.5,750.19 1572.5,749.20 1573.5,748.19 1574.5,747.17 1575.5,746.12 1576.5,745.06 1577.5,743.98 1578.5,742.89 1579.5,741.78 1580.5,740.65 1581.5,739.51 1582.5,738.36 1583.5,737.19 1584.5,736.02 1585.5,734.83 1586.5,733.63 1587.5,732.43 1588.5,731.21 1589.5,729.99 1590.5,728.76 1591.5,727.53 1592.5,726.29 1593.5,725.05 1594.5,723.81 1595.5,722.56 1596.5,721.32 1597.5,720.07 1598.5,718.83 1599.5,717.58 1600.5,716.34 1601.5,715.11 1602.5,713.87 1603.5,712.65 1604.5,711.43 1605.5,710.21 1606.5,709.01 1607.5,707.81 1608.5,706.62 1609.5,705.45 1610.5,704.28 1611.5,703.13 1612.5,701.99 1613.5,700.87 1614.5,699.76 1615.5,698.66 1616.5,697.58 1617.5,696.52 1618.5,695.48 1619.5,694.46 1620.5,693.45 1621.5,692.47 1622.5,691.50 1623.5,690.56 1624.5,689.64 1625.5,688.74 1626.5,687.87 1627.5,687.02 1628.5,686.19 1629.5,685.39 1630.5,684.62 1631.5,683.87 1632.5,683.15 1633.5,682.46 1634.5,681.80 1635.5,681.16 1636.5,680.56 1637.5,679.98 1638.5,679.43 1639.5,678.92 1640.5,678.43 1641.5,677.98 1642.5,677.55 1643.5,677.16 1644.5,676.80 1645.5,676.47 1646.5,676.18 1647.5,675.91 1648.5,675.68 1649.5,675.49 1650.5,675.32 1651.5,675.19 1652.5,675.10 1653.5,675.03 1654.5,675.00" fill="none" stroke="#48D048" stroke-width="1.05" shape-rendering="crispEdges"/><polyline points="44.5,672.40 45.5,675.85 46.5,679.39 47.5,683.03 48.5,686.76 49.5,690.58 50.5,694.48 51.5,698.47 52.5,702.54 53.5,706.68 54.5,710.90 55.5,715.19 56.5,719.55 57.5,723.97 58.5,728.46 59.5,733.00 60.5,737.59 61.5,742.24 62.5,746.94 63.5,751.68 64.5,756.47 65.5,761.29 66.5,766.14 67.5,771.03 68.5,775.94 69.5,780.88 70.5,785.84 71.5,790.82 72.5,795.81 73.5,800.80 74.5,805.81 75.5,810.81 76.5,815.82 77.5,820.82 78.5,825.81 79.5,830.79 80.5,835.76 81.5,840.70 82.5,845.62 83.5,850.52 84.5,855.38 85.5,860.21 86.5,865.01 87.5,869.76 88.5,874.47 89.5,879.13 90.5,883.74 91.5,888.30 92.5,892.80 93.5,897.24 94.5,901.62 95.5,905.92 96.5,910.16 97.5,914.33 98.5,918.42 99.5,922.43 100.5,926.35 101.5,930.20 102.5,933.95 103.5,937.62 104.5,941.19 105.5,944.66 106.5,948.04 107.5,951.32 108.5,954.49 109.5,957.56 110.5,960.52 111.5,963.37 112.5,966.11 113.5,968.74 114.5,971.25 115.5,973.64 116.5,975.92 117.5,978.07 118.5,980.10 119.5,982.01 120.5,983.79 121.5,985.45 122.5,986.97 123.5,988.37 124.5,989.64 125.5,990.78 126.5,991.79 127.5,992.66 128.5,993.40 129.5,994.01 130.5,994.48 131.5,994.82 132.5,995.03 133.5,995.10 134.5,995.04 135.5,994.84 136.5,994.50 137.5,994.04 138.5,993.44 139.5,992.70 140.5,991.83 141.5,990.83 142.5,989.70 143.5,988.44 144.5,987.05 145.5,985.53 146.5,983.88 147.5,982.10 148.5,980.20 149.5,978.18 150.5,976.03 151.5,973.76 152.5,971.37 153.5,968.87 154.5,966.25 155.5,963.51 156.5,960.67 157.5,957.71 158.5,954.65 159.5,951.48 160.5,948.21 161.5,944.84 162.5,941.36 163.5,937.80 164.5,934.14 165.5,930.39 166.5,926.55 167.5,922.63 168.5,918.62 169.5,914.53 170.5,910.37 171.5,906.14 172.5,901.83 173.5,897.46 174.5,893.02 175.5,888.53 176.5,883.97 177.5,879.36 178.5,874.70 179.5,870.00 180.5,865.24 181.5,860.45 182.5,855.62 183.5,850.76 184.5,845.87 185.5,840.95 186.5,836.00 187.5,831.04 188.5,826.06 189.5,821.07 190.5,816.07 191.5,811.07 192.5,806.06 193.5,801.05 194.5,796.06 195.5,791.07 196.5,786.09 197.5,781.13 198.5,776.19 199.5,771.28 200.5,766.39 201.5,761.53 202.5,756.71 203.5,751.92 204.5,747.18 205.5,742.48 206.5,737.83 207.5,733.23 208.5,728.68 209.5,724.19 210.5,719.77 211.5,715.41 212.5,711.12 213.5,706.89 214.5,702.74 215.5,698.67 216.5,694.68 217.5,690.77 218.5,686.95 219.5,683.21 220.5,679.57 221.5,676.02 222.5,672.57 223.5,669.21 224.5,665.96 225.5,662.81 226.5,659.76 227.5,656.83 228.5,654.00 229.5,651.28 230.5,648.68 231.5,646.20 232.5,643.83 233.5,641.59 234.5,639.46 235.5,637.46 236.5,635.58 237.5,633.83 238.5,632.20 239.5,630.70 240.5,629.33 241.5,628.09 242.5,626.98 243.5,626.01 244.5,625.16 245.5,624.45 246.5,623.87 247.5,623.43 248.5,623.12 249.5,622.94 250.5,622.90 251.5,623.00 252.5,623.23 253.5,623.59 254.5,624.09 255.5,624.72 256.5,625.48 257.5,626.38 258.5,627.41 259.5,628.57 260.5,629.86 261.5,631.28 262.5,632.83 263.5,634.51 264.5,636.32 265.5,638.24 266.5,640.30 267.5,642.47 268.5,644.77 269.5,647.18 270.5,649.71 271.5,652.36 272.5,655.12 273.5,657.99 274.5,660.97 275.5,664.05 276.5,667.25 277.5,670.54 278.5,673.94 279.5,677.43 280.5,681.02 281.5,684.70 282.5,688.47 283.5,692.33 284.5,696.27 285.5,700.29 286.5,704.40 287.5,708.57 288.5,712.82 289.5,717.14 290.5,721.53 291.5,725.98 292.5,730.49 293.5,735.06 294.5,739.68 295.5,744.35 296.5,749.07 297.5,753.83 298.5,758.63 299.5,763.47 300.5,768.34 301.5,773.24 302.5,778.16 303.5,783.11 304.5,788.08 305.5,793.06 306.5,798.05 307.5,803.06 308.5,808.06 309.5,813.07 310.5,818.07 311.5,823.07 312.5,828.05 313.5,833.03 314.5,837.98 315.5,842.92 316.5,847.83 317.5,852.71 318.5,857.56 319.5,862.37 320.5,867.15 321.5,871.88 322.5,876.57 323.5,881.21 324.5,885.80 325.5,890.33 326.5,894.81 327.5,899.22 328.5,903.56 329.5,907.84 330.5,912.05 331.5,916.18 332.5,920.23 333.5,924.20 334.5,928.09 335.5,931.90 336.5,935.61 337.5,939.24 338.5,942.76 339.5,946.20 340.5,949.53 341.5,952.76 342.5,955.89 343.5,958.91 344.5,961.82 345.5,964.62 346.5,967.31 347.5,969.88 348.5,972.34 349.5,974.68 350.5,976.90 351.5,979.00 352.5,980.98 353.5,982.83 354.5,984.55 355.5,986.15 356.5,987.62 357.5,988.96 358.5,990.17 359.5,991.25 360.5,992.20 361.5,993.01 362.5,993.69 363.5,994.24 364.5,994.65 365.5,994.93 366.5,995.08 367.5,995.09 368.5,994.96 369.5,994.70 370.5,994.31 371.5,993.78 372.5,993.12 373.5,992.33 374.5,991.40 375.5,990.34 376.5,989.15 377.5,987.83 378.5,986.38 379.5,984.80 380.5,983.09 381.5,981.26 382.5,979.30 383.5,977.22 384.5,975.02 385.5,972.70 386.5,970.26 387.5,967.70 388.5,965.03 389.5,962.25 390.5,959.35 391.5,956.35 392.5,953.24 393.5,950.02 394.5,946.70 395.5,943.29 396.5,939.77 397.5,936.16 398.5,932.46 399.5,928.67 400.5,924.79 401.5,920.83 402.5,916.79 403.5,912.67 404.5,908.48 405.5,904.21 406.5,899.87 407.5,895.47 408.5,891.01 409.5,886.48 410.5,881.91 411.5,877.27 412.5,872.59 413.5,867.86 414.5,863.09 415.5,858.28 416.5,853.44 417.5,848.56 418.5,843.66 419.5,838.72 420.5,833.77 421.5,828.80 422.5,823.82 423.5,818.82 424.5,813.82 425.5,808.81 426.5,803.81 427.5,798.80 428.5,793.81 429.5,788.83 430.5,783.86 431.5,778.91 432.5,773.98 433.5,769.07 434.5,764.20 435.5,759.35 436.5,754.55 437.5,749.78 438.5,745.06 439.5,740.38 440.5,735.75 441.5,731.17 442.5,726.65 443.5,722.20 444.5,717.80 445.5,713.47 446.5,709.21 447.5,705.02 448.5,700.90 449.5,696.87 450.5,692.91 451.5,689.04 452.5,685.26 453.5,681.56 454.5,677.96 455.5,674.45 456.5,671.04 457.5,667.73 458.5,664.53 459.5,661.42 460.5,658.43 461.5,655.54 462.5,652.76 463.5,650.10 464.5,647.55 465.5,645.12 466.5,642.81 467.5,640.61 468.5,638.54 469.5,636.60 470.5,634.77 471.5,633.08 472.5,631.51 473.5,630.07 474.5,628.76 475.5,627.58 476.5,626.53 477.5,625.61 478.5,624.82 479.5,624.17 480.5,623.66 481.5,623.27 482.5,623.02 483.5,622.91 484.5,622.93 485.5,623.08 486.5,623.37 487.5,623.80 488.5,624.35 489.5,625.05 490.5,625.87 491.5,626.83 492.5,627.92 493.5,629.14 494.5,630.49 495.5,631.97 496.5,633.57 497.5,635.31 498.5,637.17 499.5,639.15 500.5,641.26 501.5,643.49 502.5,645.84 503.5,648.30 504.5,650.89 505.5,653.58 506.5,656.39 507.5,659.31 508.5,662.34 509.5,665.48 510.5,668.72 511.5,672.06 512.5,675.50 513.5,679.03 514.5,682.66 515.5,686.38 516.5,690.19 517.5,694.09 518.5,698.07 519.5,702.13 520.5,706.27 521.5,710.48 522.5,714.76 523.5,719.11 524.5,723.53 525.5,728.00 526.5,732.54 527.5,737.13 528.5,741.78 529.5,746.47 530.5,751.21 531.5,755.99 532.5,760.80 533.5,765.66 534.5,770.54 535.5,775.45 536.5,780.39 537.5,785.35 538.5,790.32 539.5,795.31 540.5,800.30 541.5,805.31 542.5,810.31 543.5,815.32 544.5,820.32 545.5,825.31 546.5,830.29 547.5,835.26 548.5,840.21 549.5,845.13 550.5,850.03 551.5,854.90 552.5,859.73 553.5,864.53 554.5,869.29 555.5,874.00 556.5,878.67 557.5,883.28 558.5,887.85 559.5,892.35 560.5,896.80 561.5,901.18 562.5,905.50 563.5,909.74 564.5,913.92 565.5,918.01 566.5,922.03 567.5,925.97 568.5,929.82 569.5,933.58 570.5,937.25 571.5,940.84 572.5,944.32 573.5,947.71 574.5,951.00 575.5,954.18 576.5,957.26 577.5,960.23 578.5,963.09 579.5,965.85 580.5,968.48 581.5,971.01 582.5,973.41 583.5,975.70 584.5,977.86 585.5,979.90 586.5,981.82 587.5,983.62 588.5,985.29 589.5,986.83 590.5,988.24 591.5,989.52 592.5,990.67 593.5,991.69 594.5,992.58 595.5,993.33 596.5,993.96 597.5,994.44 598.5,994.80 599.5,995.01 600.5,995.10 601.5,995.05 602.5,994.86 603.5,994.54 604.5,994.09 605.5,993.50 606.5,992.78 607.5,991.93 608.5,990.94 609.5,989.82 610.5,988.57 611.5,987.19 612.5,985.68 613.5,984.05 614.5,982.28 615.5,980.40 616.5,978.38 617.5,976.25 618.5,973.99 619.5,971.62 620.5,969.12 621.5,966.52 622.5,963.79 623.5,960.96 624.5,958.01 625.5,954.96 626.5,951.80 627.5,948.54 628.5,945.18 629.5,941.72 630.5,938.16 631.5,934.51 632.5,930.77 633.5,926.94 634.5,923.02 635.5,919.02 636.5,914.95 637.5,910.79 638.5,906.56 639.5,902.27 640.5,897.90 641.5,893.47 642.5,888.98 643.5,884.43 644.5,879.83 645.5,875.17 646.5,870.47 647.5,865.72 648.5,860.93 649.5,856.11 650.5,851.25 651.5,846.36 652.5,841.44 653.5,836.50 654.5,831.54 655.5,826.56 656.5,821.57 657.5,816.57 658.5,811.57 659.5,806.56 660.5,801.55 661.5,796.56 662.5,791.56 663.5,786.59 664.5,781.63 665.5,776.68 666.5,771.77 667.5,766.87 668.5,762.01 669.5,757.19 670.5,752.40 671.5,747.65 672.5,742.95 673.5,738.29 674.5,733.68 675.5,729.13 676.5,724.64 677.5,720.21 678.5,715.84 679.5,711.54 680.5,707.31 681.5,703.16 682.5,699.08 683.5,695.08 684.5,691.16 685.5,687.33 686.5,683.58 687.5,679.93 688.5,676.37 689.5,672.91 690.5,669.54 691.5,666.28 692.5,663.12 693.5,660.06 694.5,657.11 695.5,654.28 696.5,651.55 697.5,648.94 698.5,646.44 699.5,644.06 700.5,641.81 701.5,639.67 702.5,637.65 703.5,635.76 704.5,634.00 705.5,632.36 706.5,630.84 707.5,629.46 708.5,628.21 709.5,627.09 710.5,626.10 711.5,625.24 712.5,624.51 713.5,623.92 714.5,623.47 715.5,623.14 716.5,622.95 717.5,622.90 718.5,622.98 719.5,623.20 720.5,623.55 721.5,624.03 722.5,624.65 723.5,625.40 724.5,626.28 725.5,627.30 726.5,628.45 727.5,629.73 728.5,631.14 729.5,632.67 730.5,634.34 731.5,636.13 732.5,638.05 733.5,640.09 734.5,642.25 735.5,644.53 736.5,646.93 737.5,649.45 738.5,652.09 739.5,654.84 740.5,657.70 741.5,660.66 742.5,663.74 743.5,666.92 744.5,670.21 745.5,673.59 746.5,677.08 747.5,680.65 748.5,684.33 749.5,688.09 750.5,691.94 751.5,695.87 752.5,699.89 753.5,703.98 754.5,708.15 755.5,712.40 756.5,716.71 757.5,721.09 758.5,725.53 759.5,730.04 760.5,734.60 761.5,739.22 762.5,743.88 763.5,748.60 764.5,753.35 765.5,758.15 766.5,762.98 767.5,767.85 768.5,772.75 769.5,777.67 770.5,782.62 771.5,787.58 772.5,792.56 773.5,797.55 774.5,802.56 775.5,807.56 776.5,812.57 777.5,817.57 778.5,822.57 779.5,827.56 780.5,832.53 781.5,837.49 782.5,842.42 783.5,847.34 784.5,852.22 785.5,857.08 786.5,861.89 787.5,866.67 788.5,871.41 789.5,876.11 790.5,880.75 791.5,885.34 792.5,889.88 793.5,894.36 794.5,898.78 795.5,903.13 796.5,907.42 797.5,911.63 798.5,915.77 799.5,919.83 800.5,923.81 801.5,927.71 802.5,931.52 803.5,935.25 804.5,938.88 805.5,942.42 806.5,945.86 807.5,949.20 808.5,952.44 809.5,955.58 810.5,958.61 811.5,961.53 812.5,964.35 813.5,967.05 814.5,969.63 815.5,972.10 816.5,974.45 817.5,976.69 818.5,978.80 819.5,980.78 820.5,982.65 821.5,984.38 822.5,986.00 823.5,987.48 824.5,988.83 825.5,990.05 826.5,991.15 827.5,992.11 828.5,992.94 829.5,993.63 830.5,994.19 831.5,994.62 832.5,994.91 833.5,995.07 834.5,995.09 835.5,994.98 836.5,994.74 837.5,994.36 838.5,993.84 839.5,993.19 840.5,992.41 841.5,991.50 842.5,990.45 843.5,989.27 844.5,987.97 845.5,986.53 846.5,984.96 847.5,983.27 848.5,981.45 849.5,979.51 850.5,977.44 851.5,975.25 852.5,972.94 853.5,970.51 854.5,967.97 855.5,965.30 856.5,962.53 857.5,959.65 858.5,956.65 859.5,953.55 860.5,950.35 861.5,947.04 862.5,943.63 863.5,940.13 864.5,936.53 865.5,932.84 866.5,929.05 867.5,925.19 868.5,921.23 869.5,917.20 870.5,913.09 871.5,908.90 872.5,904.64 873.5,900.31 874.5,895.92 875.5,891.46 876.5,886.94 877.5,882.37 878.5,877.74 879.5,873.06 880.5,868.34 881.5,863.57 882.5,858.77 883.5,853.92 884.5,849.05 885.5,844.15 886.5,839.22 887.5,834.27 888.5,829.30 889.5,824.32 890.5,819.32 891.5,814.32 892.5,809.31 893.5,804.31 894.5,799.30 895.5,794.31 896.5,789.32 897.5,784.35 898.5,779.40 899.5,774.47 900.5,769.56 901.5,764.68 902.5,759.84 903.5,755.03 904.5,750.26 905.5,745.53 906.5,740.84 907.5,736.21 908.5,731.63 909.5,727.10 910.5,722.64 911.5,718.24 912.5,713.90 913.5,709.63 914.5,705.43 915.5,701.31 916.5,697.27 917.5,693.30 918.5,689.43 919.5,685.63 920.5,681.93 921.5,678.32 922.5,674.80 923.5,671.38 924.5,668.06 925.5,664.84 926.5,661.73 927.5,658.72 928.5,655.82 929.5,653.04 930.5,650.36 931.5,647.80 932.5,645.36 933.5,643.03 934.5,640.83 935.5,638.75 936.5,636.79 937.5,634.95 938.5,633.24 939.5,631.66 940.5,630.21 941.5,628.88 942.5,627.69 943.5,626.63 944.5,625.69 945.5,624.90 946.5,624.23 947.5,623.70 948.5,623.30 949.5,623.04 950.5,622.91 951.5,622.92 952.5,623.06 953.5,623.34 954.5,623.75 955.5,624.29 956.5,624.97 957.5,625.78 958.5,626.73 959.5,627.80 960.5,629.01 961.5,630.35 962.5,631.81 963.5,633.41 964.5,635.13 965.5,636.98 966.5,638.95 967.5,641.04 968.5,643.26 969.5,645.60 970.5,648.05 971.5,650.62 972.5,653.31 973.5,656.11 974.5,659.02 975.5,662.04 976.5,665.16 977.5,668.39 978.5,671.72 979.5,675.15 980.5,678.67 981.5,682.30 982.5,686.01 983.5,689.81 984.5,693.70 985.5,697.67 986.5,701.72 987.5,705.85 988.5,710.05 989.5,714.33 990.5,718.67 991.5,723.08 992.5,727.55 993.5,732.08 994.5,736.67 995.5,741.31 996.5,746.00 997.5,750.73 998.5,755.51 999.5,760.32 1000.5,765.17 1001.5,770.05 1002.5,774.96 1003.5,779.89 1004.5,784.85 1005.5,789.82 1006.5,794.81 1007.5,799.80 1008.5,804.81 1009.5,809.81 1010.5,814.82 1011.5,819.82 1012.5,824.81 1013.5,829.80 1014.5,834.76 1015.5,839.71 1016.5,844.64 1017.5,849.54 1018.5,854.41 1019.5,859.25 1020.5,864.05 1021.5,868.81 1022.5,873.53 1023.5,878.20 1024.5,882.83 1025.5,887.39 1026.5,891.91 1027.5,896.36 1028.5,900.75 1029.5,905.07 1030.5,909.32 1031.5,913.50 1032.5,917.61 1033.5,921.63 1034.5,925.58 1035.5,929.44 1036.5,933.21 1037.5,936.89 1038.5,940.48 1039.5,943.98 1040.5,947.37 1041.5,950.67 1042.5,953.87 1043.5,956.96 1044.5,959.94 1045.5,962.81 1046.5,965.58 1047.5,968.22 1048.5,970.76 1049.5,973.18 1050.5,975.47 1051.5,977.65 1052.5,979.71 1053.5,981.64 1054.5,983.44 1055.5,985.13 1056.5,986.68 1057.5,988.10 1058.5,989.40 1059.5,990.56 1060.5,991.60 1061.5,992.50 1062.5,993.26 1063.5,993.90 1064.5,994.40 1065.5,994.77 1066.5,995.00 1067.5,995.10 1068.5,995.06 1069.5,994.89 1070.5,994.58 1071.5,994.14 1072.5,993.57 1073.5,992.86 1074.5,992.02 1075.5,991.04 1076.5,989.94 1077.5,988.70 1078.5,987.34 1079.5,985.84 1080.5,984.22 1081.5,982.47 1082.5,980.59 1083.5,978.59 1084.5,976.47 1085.5,974.22 1086.5,971.86 1087.5,969.38 1088.5,966.78 1089.5,964.07 1090.5,961.25 1091.5,958.31 1092.5,955.27 1093.5,952.12 1094.5,948.87 1095.5,945.52 1096.5,942.07 1097.5,938.52 1098.5,934.88 1099.5,931.14 1100.5,927.32 1101.5,923.42 1102.5,919.43 1103.5,915.36 1104.5,911.21 1105.5,906.99 1106.5,902.70 1107.5,898.34 1108.5,893.92 1109.5,889.43 1110.5,884.89 1111.5,880.29 1112.5,875.64 1113.5,870.94 1114.5,866.20 1115.5,861.41 1116.5,856.59 1117.5,851.73 1118.5,846.85 1119.5,841.93 1120.5,836.99 1121.5,832.03 1122.5,827.06 1123.5,822.07 1124.5,817.07 1125.5,812.07 1126.5,807.06 1127.5,802.05 1128.5,797.05 1129.5,792.06 1130.5,787.08 1131.5,782.12 1132.5,777.18 1133.5,772.26 1134.5,767.36 1135.5,762.50 1136.5,757.67 1137.5,752.87 1138.5,748.12 1139.5,743.41 1140.5,738.75 1141.5,734.14 1142.5,729.59 1143.5,725.09 1144.5,720.65 1145.5,716.28 1146.5,711.97 1147.5,707.73 1148.5,703.57 1149.5,699.48 1150.5,695.47 1151.5,691.55 1152.5,687.71 1153.5,683.95 1154.5,680.29 1155.5,676.72 1156.5,673.25 1157.5,669.87 1158.5,666.60 1159.5,663.43 1160.5,660.36 1161.5,657.40 1162.5,654.56 1163.5,651.82 1164.5,649.20 1165.5,646.69 1166.5,644.30 1167.5,642.03 1168.5,639.88 1169.5,637.85 1170.5,635.94 1171.5,634.17 1172.5,632.51 1173.5,630.99 1174.5,629.59 1175.5,628.33 1176.5,627.19 1177.5,626.19 1178.5,625.32 1179.5,624.58 1180.5,623.98 1181.5,623.51 1182.5,623.17 1183.5,622.97 1184.5,622.90 1185.5,622.97 1186.5,623.17 1187.5,623.51 1188.5,623.98 1189.5,624.58 1190.5,625.32 1191.5,626.19 1192.5,627.19 1193.5,628.33 1194.5,629.59 1195.5,630.99 1196.5,632.51 1197.5,634.17 1198.5,635.94 1199.5,637.85 1200.5,639.88 1201.5,642.03 1202.5,644.30 1203.5,646.69 1204.5,649.20 1205.5,651.82 1206.5,654.56 1207.5,657.40 1208.5,660.36 1209.5,663.43 1210.5,666.60 1211.5,669.87 1212.5,673.25 1213.5,676.72 1214.5,680.29 1215.5,683.95 1216.5,687.71 1217.5,691.55 1218.5,695.47 1219.5,699.48 1220.5,703.57 1221.5,707.73 1222.5,711.97 1223.5,716.28 1224.5,720.65 1225.5,725.09 1226.5,729.59 1227.5,734.14 1228.5,738.75 1229.5,743.41 1230.5,748.12 1231.5,752.87 1232.5,757.67 1233.5,762.50 1234.5,767.36 1235.5,772.26 1236.5,777.18 1237.5,782.12 1238.5,787.08 1239.5,792.06 1240.5,797.05 1241.5,802.05 1242.5,807.06 1243.5,812.07 1244.5,817.07 1245.5,822.07 1246.5,827.06 1247.5,832.03 1248.5,836.99 1249.5,841.93 1250.5,846.85 1251.5,851.73 1252.5,856.59 1253.5,861.41 1254.5,866.20 1255.5,870.94 1256.5,875.64 1257.5,880.29 1258.5,884.89 1259.5,889.43 1260.5,893.92 1261.5,898.34 1262.5,902.70 1263.5,906.99 1264.5,911.21 1265.5,915.36 1266.5,919.43 1267.5,923.42 1268.5,927.32 1269.5,931.14 1270.5,934.88 1271.5,938.52 1272.5,942.07 1273.5,945.52 1274.5,948.87 1275.5,952.12 1276.5,955.27 1277.5,958.31 1278.5,961.25 1279.5,964.07 1280.5,966.78 1281.5,969.38 1282.5,971.86 1283.5,974.22 1284.5,976.47 1285.5,978.59 1286.5,980.59 1287.5,982.47 1288.5,984.22 1289.5,985.84 1290.5,987.34 1291.5,988.70 1292.5,989.94 1293.5,991.04 1294.5,992.02 1295.5,992.86 1296.5,993.57 1297.5,994.14 1298.5,994.58 1299.5,994.89 1300.5,995.06 1301.5,995.10 1302.5,995.00 1303.5,994.77 1304.5,994.40 1305.5,993.90 1306.5,993.26 1307.5,992.50 1308.5,991.60 1309.5,990.56 1310.5,989.40 1311.5,988.10 1312.5,986.68 1313.5,985.13 1314.5,983.44 1315.5,981.64 1316.5,979.71 1317.5,977.65 1318.5,975.47 1319.5,973.18 1320.5,970.76 1321.5,968.22 1322.5,965.58 1323.5,962.81 1324.5,959.94 1325.5,956.96 1326.5,953.87 1327.5,950.67 1328.5,947.37 1329.5,943.98 1330.5,940.48 1331.5,936.89 1332.5,933.21 1333.5,929.44 1334.5,925.58 1335.5,921.63 1336.5,917.61 1337.5,913.50 1338.5,909.32 1339.5,905.07 1340.5,900.75 1341.5,896.36 1342.5,891.91 1343.5,887.39 1344.5,882.83 1345.5,878.20 1346.5,873.53 1347.5,868.81 1348.5,864.05 1349.5,859.25 1350.5,854.41 1351.5,849.54 1352.5,844.64 1353.5,839.71 1354.5,834.76 1355.5,829.80 1356.5,824.81 1357.5,819.82 1358.5,814.82 1359.5,809.81 1360.5,804.81 1361.5,799.80 1362.5,794.81 1363.5,789.82 1364.5,784.85 1365.5,779.89 1366.5,774.96 1367.5,770.05 1368.5,765.17 1369.5,760.32 1370.5,755.51 1371.5,750.73 1372.5,746.00 1373.5,741.31 1374.5,736.67 1375.5,732.08 1376.5,727.55 1377.5,723.08 1378.5,718.67 1379.5,714.33 1380.5,710.05 1381.5,705.85 1382.5,701.72 1383.5,697.67 1384.5,693.70 1385.5,689.81 1386.5,686.01 1387.5,682.30 1388.5,678.67 1389.5,675.15 1390.5,671.72 1391.5,668.39 1392.5,665.16 1393.5,662.04 1394.5,659.02 1395.5,656.11 1396.5,653.31 1397.5,650.62 1398.5,648.05 1399.5,645.60 1400.5,643.26 1401.5,641.04 1402.5,638.95 1403.5,636.98 1404.5,635.13 1405.5,633.41 1406.5,631.81 1407.5,630.35 1408.5,629.01 1409.5,627.80 1410.5,626.73 1411.5,625.78 1412.5,624.97 1413.5,624.29 1414.5,623.75 1415.5,623.34 1416.5,623.06 1417.5,622.92 1418.5,622.91 1419.5,623.04 1420.5,623.30 1421.5,623.70 1422.5,624.23 1423.5,624.90 1424.5,625.69 1425.5,626.63 1426.5,627.69 1427.5,628.88 1428.5,630.21 1429.5,631.66 1430.5,633.24 1431.5,634.95 1432.5,636.79 1433.5,638.75 1434.5,640.83 1435.5,643.03 1436.5,645.36 1437.5,647.80 1438.5,650.36 1439.5,653.04 1440.5,655.82 1441.5,658.72 1442.5,661.73 1443.5,664.84 1444.5,668.06 1445.5,671.38 1446.5,674.80 1447.5,678.32 1448.5,681.93 1449.5,685.63 1450.5,689.43 1451.5,693.30 1452.5,697.27 1453.5,701.31 1454.5,705.43 1455.5,709.63 1456.5,713.90 1457.5,718.24 1458.5,722.64 1459.5,727.10 1460.5,731.63 1461.5,736.21 1462.5,740.84 1463.5,745.53 1464.5,750.26 1465.5,755.03 1466.5,759.84 1467.5,764.68 1468.5,769.56 1469.5,774.47 1470.5,779.40 1471.5,784.35 1472.5,789.32 1473.5,794.31 1474.5,799.30 1475.5,804.31 1476.5,809.31 1477.5,814.32 1478.5,819.32 1479.5,824.32 1480.5,829.30 1481.5,834.27 1482.5,839.22 1483.5,844.15 1484.5,849.05 1485.5,853.92 1486.5,858.77 1487.5,863.57 1488.5,868.34 1489.5,873.06 1490.5,877.74 1491.5,882.37 1492.5,886.94 1493.5,891.46 1494.5,895.92 1495.5,900.31 1496.5,904.64 1497.5,908.90 1498.5,913.09 1499.5,917.20 1500.5,921.23 1501.5,925.19 1502.5,929.05 1503.5,932.84 1504.5,936.53 1505.5,940.13 1506.5,943.63 1507.5,947.04 1508.5,950.35 1509.5,953.55 1510.5,956.65 1511.5,959.65 1512.5,962.53 1513.5,965.30 1514.5,967.97 1515.5,970.51 1516.5,972.94 1517.5,975.25 1518.5,977.44 1519.5,979.51 1520.5,981.45 1521.5,983.27 1522.5,984.96 1523.5,986.53 1524.5,987.97 1525.5,989.27 1526.5,990.45 1527.5,991.50 1528.5,992.41 1529.5,993.19 1530.5,993.84 1531.5,994.36 1532.5,994.74 1533.5,994.98 1534.5,995.09 1535.5,995.07 1536.5,994.91 1537.5,994.62 1538.5,994.19 1539.5,993.63 1540.5,992.94 1541.5,992.11 1542.5,991.15 1543.5,990.05 1544.5,988.83 1545.5,987.48 1546.5,986.00 1547.5,984.38 1548.5,982.65 1549.5,980.78 1550.5,978.80 1551.5,976.69 1552.5,974.45 1553.5,972.10 1554.5,969.63 1555.5,967.05 1556.5,964.35 1557.5,961.53 1558.5,958.61 1559.5,955.58 1560.5,952.44 1561.5,949.20 1562.5,945.86 1563.5,942.42 1564.5,938.88 1565.5,935.25 1566.5,931.52 1567.5,927.71 1568.5,923.81 1569.5,919.83 1570.5,915.77 1571.5,911.63 1572.5,907.42 1573.5,903.13 1574.5,898.78 1575.5,894.36 1576.5,889.88 1577.5,885.34 1578.5,880.75 1579.5,876.11 1580.5,871.41 1581.5,866.67 1582.5,861.89 1583.5,857.08 1584.5,852.22 1585.5,847.34 1586.5,842.42 1587.5,837.49 1588.5,832.53 1589.5,827.56 1590.5,822.57 1591.5,817.57 1592.5,812.57 1593.5,807.56 1594.5,802.56 1595.5,797.55 1596.5,792.56 1597.5,787.58 1598.5,782.62 1599.5,777.67 1600.5,772.75 1601.5,767.85 1602.5,762.98 1603.5,758.15 1604.5,753.35 1605.5,748.60 1606.5,743.88 1607.5,739.22 1608.5,734.60 1609.5,730.04 1610.5,725.53 1611.5,721.09 1612.5,716.71 1613.5,712.40 1614.5,708.15 1615.5,703.98 1616.5,699.89 1617.5,695.87 1618.5,691.94 1619.5,688.09 1620.5,684.33 1621.5,680.65 1622.5,677.08 1623.5,673.59 1624.5,670.21 1625.5,666.92 1626.5,663.74 1627.5,660.66 1628.5,657.70 1629.5,654.84 1630.5,652.09 1631.5,649.45 1632.5,646.93 1633.5,644.53 1634.5,642.25 1635.5,640.09 1636.5,638.05 1637.5,636.13 1638.5,634.34 1639.5,632.67 1640.5,631.14 1641.5,629.73 1642.5,628.45 1643.5,627.30 1644.5,626.28 1645.5,625.40 1646.5,624.65 1647.5,624.03 1648.5,623.55 1649.5,623.20 1650.5,622.98 1651.5,622.90 1652.5,622.95 1653.5,623.14 1654.5,623.47" fill="none" stroke="#C03030" stroke-width="1.05" shape-rendering="crispEdges"/></svg>
<svg width="18" height="18" viewBox="0 0 18 18" style="left:10px;top:82px"><path d="M0.5 8H4.5" stroke="#0000A8" stroke-width="1.2"/><rect x="4" y="3.5" width="2.5" height="9" fill="#0000A8"/><path d="M6 5 L11 0.5 M6 11 L12.5 16.5" stroke="#0000A8" stroke-width="1.2" fill="none"/><path d="M8.5 12.5 L11.8 15.8 L11.5 12Z" fill="#0000A8"/></svg><svg width="18" height="18" viewBox="0 0 18 18" style="left:132px;top:80px"><rect x="3" y="1" width="13" height="12" fill="#C0C0C0"/><rect x="0" y="0" width="3" height="17" fill="#000"/><rect x="0" y="13" width="17" height="4" fill="#000"/><rect x="1" y="2" width="2" height="1" fill="#fff"/><rect x="1" y="5" width="2" height="1" fill="#fff"/><rect x="1" y="8" width="2" height="1" fill="#fff"/><rect x="1" y="11" width="2" height="1" fill="#fff"/><rect x="4" y="14" width="1" height="2" fill="#fff"/><rect x="7" y="14" width="1" height="2" fill="#fff"/><rect x="10" y="14" width="1" height="2" fill="#fff"/><rect x="13" y="14" width="1" height="2" fill="#fff"/><path d="M3.5 9 L6.5 5.5 L9 7.5 L11.5 7 L15.5 3.5" fill="none" stroke="#D01010" stroke-width="1.4"/></svg><svg width="18" height="18" viewBox="0 0 18 18" style="left:9px;top:113px"><path d="M0.5 8H4.5" stroke="#0000A8" stroke-width="1.2"/><rect x="4" y="3.5" width="2.5" height="9" fill="#0000A8"/><path d="M6 5 L11 0.5 M6 11 L12.5 16.5" stroke="#0000A8" stroke-width="1.2" fill="none"/><path d="M8.5 12.5 L11.8 15.8 L11.5 12Z" fill="#0000A8"/></svg><svg width="18" height="18" viewBox="0 0 18 18" style="left:7px;top:575px"><rect x="3" y="1" width="13" height="12" fill="#C0C0C0"/><rect x="0" y="0" width="3" height="17" fill="#000"/><rect x="0" y="13" width="17" height="4" fill="#000"/><rect x="1" y="2" width="2" height="1" fill="#fff"/><rect x="1" y="5" width="2" height="1" fill="#fff"/><rect x="1" y="8" width="2" height="1" fill="#fff"/><rect x="1" y="11" width="2" height="1" fill="#fff"/><rect x="4" y="14" width="1" height="2" fill="#fff"/><rect x="7" y="14" width="1" height="2" fill="#fff"/><rect x="10" y="14" width="1" height="2" fill="#fff"/><rect x="13" y="14" width="1" height="2" fill="#fff"/><path d="M3.5 9 L6.5 5.5 L9 7.5 L11.5 7 L15.5 3.5" fill="none" stroke="#D01010" stroke-width="1.4"/></svg>
</body></html>
